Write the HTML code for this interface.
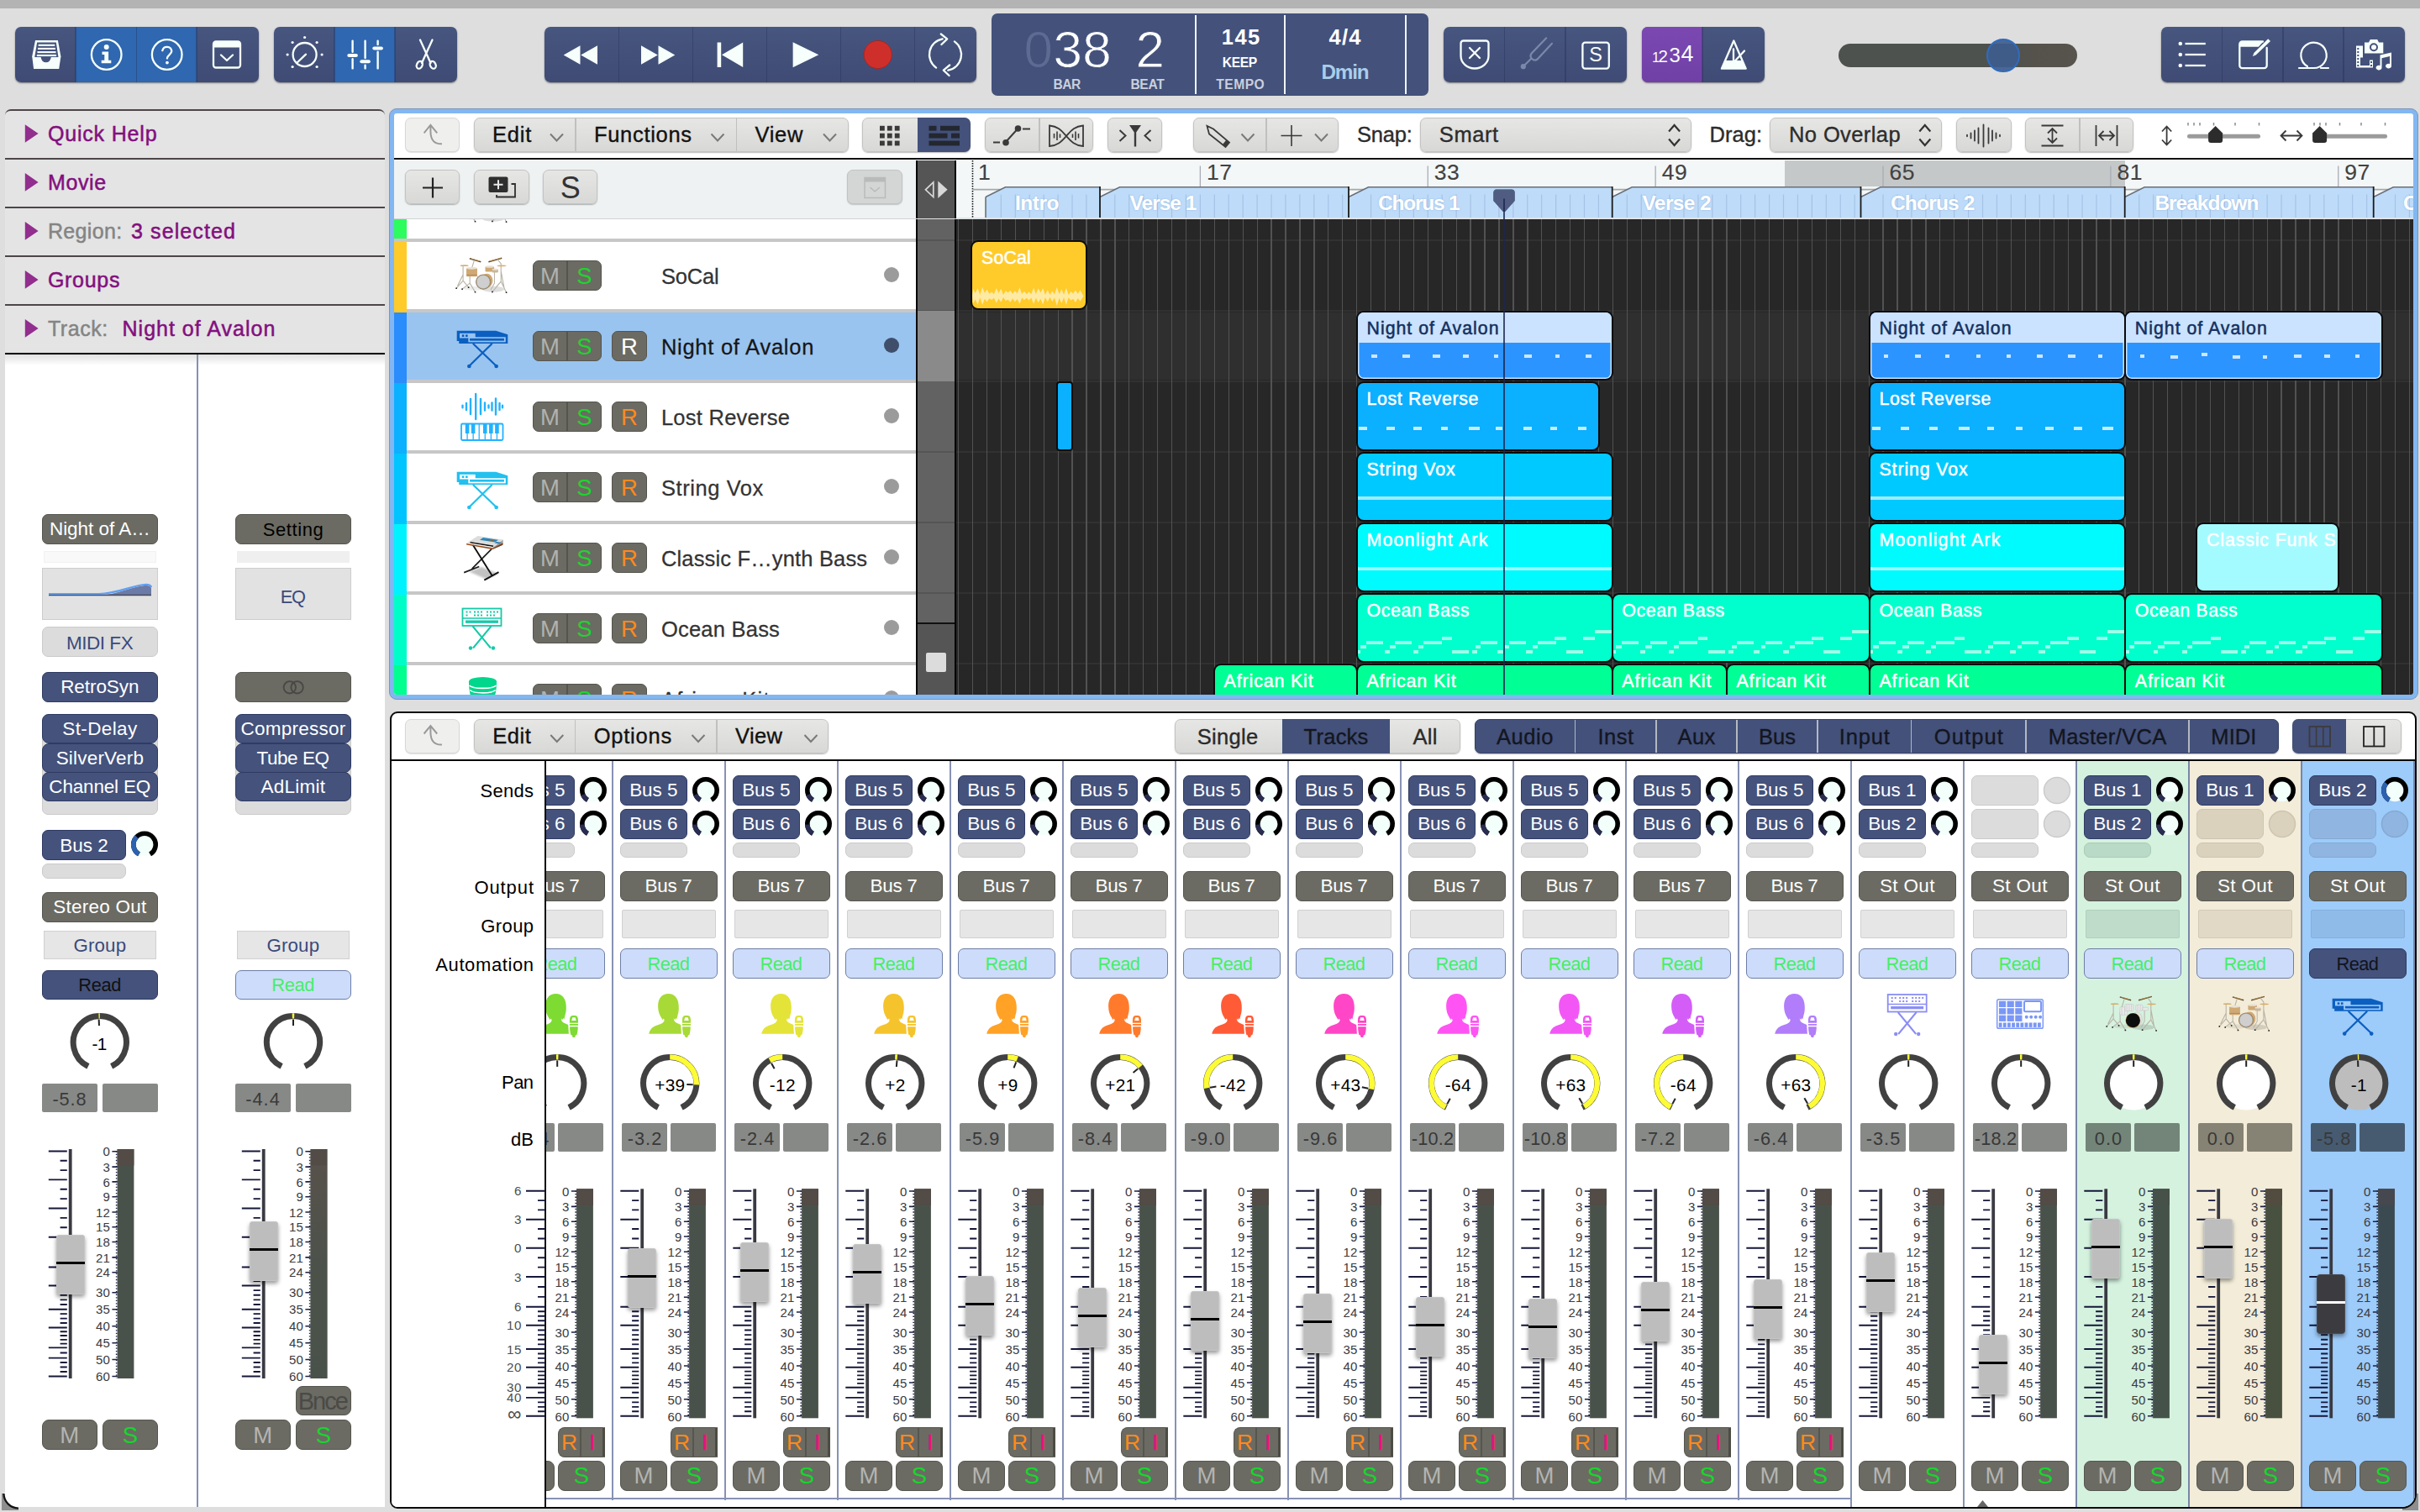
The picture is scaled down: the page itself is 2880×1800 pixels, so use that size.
<!DOCTYPE html><html><head><meta charset="utf-8"><title>Logic</title><style>html,body{margin:0;padding:0}body{width:2880px;height:1800px;overflow:hidden;background:#dedede;position:relative;font-family:"Liberation Sans",sans-serif}
div{position:absolute;box-sizing:border-box}
.nv{background:#44527c;border:1.5px solid #303b63;border-radius:7px}
.ol{background:#6b6b63;border:1.5px solid #565650;border-radius:7px}
.sl{background:#dcdcdc;border:1.5px solid #cbcbcb;border-radius:7px}
.gp{background:#e6e6e6;border:1.5px solid #d0d0d0}
.rd{background:#cddcfa;border:1.5px solid #6f7ea6;border-radius:7px}
.db{background:#878987;border-radius:2px}
.cap{background:#bdbdbd;border:1px solid #c6c6c6;border-radius:3px;box-shadow:0 3px 5px rgba(0,0,0,.4)}
.capd{background:#3c3c40;border:1px solid #4a4a50;border-radius:4px;box-shadow:0 3px 5px rgba(0,0,0,.4)}
</style></head><body><div style="left:0px;top:0px;width:2880px;height:10px;background:#b3b3b3;"></div><div style="left:18px;top:32px;width:290px;height:66px;background:linear-gradient(#47567f,#3f4b74);border-radius:7px;overflow:hidden;box-shadow:0 1px 2px rgba(0,0,0,.45);"><div style="left:72px;top:0px;width:72.5px;height:66px;background:#2f67b0;"></div><div style="left:144.5px;top:0px;width:71.5px;height:66px;background:#2f67b0;"></div><div style="left:71.2px;top:0px;width:1.6px;height:66px;background:rgba(35,45,85,.38);"></div><div style="left:143.7px;top:0px;width:1.6px;height:66px;background:rgba(35,45,85,.38);"></div><div style="left:215.2px;top:0px;width:1.6px;height:66px;background:rgba(35,45,85,.38);"></div></div><div style="left:326px;top:32px;width:218px;height:66px;background:linear-gradient(#47567f,#3f4b74);border-radius:7px;overflow:hidden;box-shadow:0 1px 2px rgba(0,0,0,.45);"><div style="left:72px;top:0px;width:72px;height:66px;background:#2f67b0;"></div><div style="left:71.2px;top:0px;width:1.6px;height:66px;background:rgba(35,45,85,.38);"></div><div style="left:143.2px;top:0px;width:1.6px;height:66px;background:rgba(35,45,85,.38);"></div></div><div style="left:648px;top:32px;width:514px;height:66px;background:linear-gradient(#47567f,#3f4b74);border-radius:7px;overflow:hidden;box-shadow:0 1px 2px rgba(0,0,0,.45);"><div style="left:87.7px;top:0px;width:1.6px;height:66px;background:rgba(35,45,85,.38);"></div><div style="left:175.7px;top:0px;width:1.6px;height:66px;background:rgba(35,45,85,.38);"></div><div style="left:263.7px;top:0px;width:1.6px;height:66px;background:rgba(35,45,85,.38);"></div><div style="left:351.7px;top:0px;width:1.6px;height:66px;background:rgba(35,45,85,.38);"></div><div style="left:439.7px;top:0px;width:1.6px;height:66px;background:rgba(35,45,85,.38);"></div></div><div style="left:1718px;top:32px;width:218px;height:66px;background:linear-gradient(#47567f,#3f4b74);border-radius:7px;overflow:hidden;box-shadow:0 1px 2px rgba(0,0,0,.45);"><div style="left:71.9px;top:0px;width:1.6px;height:66px;background:rgba(35,45,85,.38);"></div><div style="left:144px;top:0px;width:1.6px;height:66px;background:rgba(35,45,85,.38);"></div></div><div style="left:1954px;top:32px;width:146px;height:66px;background:linear-gradient(#47567f,#3f4b74);border-radius:7px;overflow:hidden;box-shadow:0 1px 2px rgba(0,0,0,.45);"><div style="left:0px;top:0px;width:72px;height:66px;background:linear-gradient(#7b48b2,#7040a6);"></div><div style="left:71.2px;top:0px;width:1.6px;height:66px;background:rgba(35,45,85,.38);"></div></div><div style="left:2572px;top:32px;width:290px;height:66px;background:linear-gradient(#47567f,#3f4b74);border-radius:7px;overflow:hidden;box-shadow:0 1px 2px rgba(0,0,0,.45);"><div style="left:71.8px;top:0px;width:1.6px;height:66px;background:rgba(35,45,85,.38);"></div><div style="left:144.2px;top:0px;width:1.6px;height:66px;background:rgba(35,45,85,.38);"></div><div style="left:216px;top:0px;width:1.6px;height:66px;background:rgba(35,45,85,.38);"></div></div><div style="left:1180px;top:16px;width:520px;height:98px;background:#43517b;border-radius:7px;"></div><div style="left:1422px;top:18px;width:2px;height:94px;background:#f0f4fa;"></div><div style="left:1527.7px;top:18px;width:2px;height:94px;background:#f0f4fa;"></div><div style="left:1671.8px;top:18px;width:2px;height:94px;background:#f0f4fa;"></div><div style="left:1218.5px;top:28.12px;font-size:62px;line-height:62px;color:#5d6a92;letter-spacing:-2.48px;white-space:nowrap;-webkit-text-stroke:.9px #43517b;">0</div><div style="left:1253.5px;top:28.12px;font-size:62px;line-height:62px;color:#fff;letter-spacing:0.27px;white-space:nowrap;-webkit-text-stroke:.9px #43517b;">38</div><div style="left:1351.5px;top:28.12px;font-size:62px;line-height:62px;color:#fff;letter-spacing:-2.98px;white-space:nowrap;-webkit-text-stroke:.9px #43517b;">2</div><div style="left:1253.4px;top:92.79px;font-size:15.6px;line-height:15.6px;color:#c9cfdd;letter-spacing:-0.43px;white-space:nowrap;font-weight:bold;">BAR</div><div style="left:1345.4px;top:92.79px;font-size:15.6px;line-height:15.6px;color:#c9cfdd;letter-spacing:-0.33px;white-space:nowrap;font-weight:bold;">BEAT</div><div style="left:1453.74px;top:31.71px;font-size:25.5px;line-height:25.5px;color:#fff;letter-spacing:1.48px;white-space:nowrap;font-weight:bold;">145</div><div style="left:1454.81px;top:66.79px;font-size:15.6px;line-height:15.6px;color:#fff;letter-spacing:-0.37px;white-space:nowrap;font-weight:bold;">KEEP</div><div style="left:1447.25px;top:92.79px;font-size:15.6px;line-height:15.6px;color:#c9cfdd;letter-spacing:0.51px;white-space:nowrap;font-weight:bold;">TEMPO</div><div style="left:1581.59px;top:31.71px;font-size:25.5px;line-height:25.5px;color:#fff;letter-spacing:1.18px;white-space:nowrap;font-weight:bold;">4/4</div><div style="left:1572.41px;top:73.63px;font-size:24.3px;line-height:24.3px;color:#a9cdea;letter-spacing:-1.19px;white-space:nowrap;font-weight:bold;">Dmin</div><div style="left:2188px;top:52px;width:284px;height:28px;background:linear-gradient(90deg,#4e524e 0,#4e524e 68%,#55524c 82%,#57534d 100%);border-radius:14px;"></div><div style="left:2363.5px;top:46px;width:40px;height:40px;background:rgba(62,92,140,.92);border:2px solid #2f6cc0;border-radius:20px;"></div><svg style="position:absolute;left:0px;top:0px;" width="2880" height="120" viewBox="0 0 2880 120"><path d="M42 48.100H68.900L72.400 67.300L70.200 82H40.100L38.200 67.300Z" fill="#f6fffb"/><path d="M44.100 50.400H66.800L69.500 68.300H41.200Z" fill="#44527c"/><path d="M45.6 53.8H65.3" stroke="#f6fffb" stroke-width="2.100"/><path d="M45 57.9H65.9" stroke="#f6fffb" stroke-width="2.100"/><path d="M44.4 62.1H66.5" stroke="#f6fffb" stroke-width="2.100"/><path d="M43.8 66H67.1" stroke="#f6fffb" stroke-width="2.100"/><path d="M40 68.300H70.500L69 80H41.500Z" fill="#f6fffb"/><path d="M48.700 68H60.700A6 6.300 0 0 1 48.700 68z" fill="#44527c"/><circle cx="126.7" cy="65" r="17.8" fill="none" stroke="#f6fffb" stroke-width="2.3" stroke-linecap="round" stroke-linejoin="round"/><circle cx="126.7" cy="56" r="3" fill="#f6fffb"/><path d="M121.5 61.5h7.6v10.3h3.2v3.4h-11.6v-3.4h3.6v-6.9h-2.8z" fill="#f6fffb"/><circle cx="198.7" cy="65" r="17.8" fill="none" stroke="#f6fffb" stroke-width="2.3" stroke-linecap="round" stroke-linejoin="round"/><path d="M193.3 60.2a5.6 5.6 0 0 1 11 .6c0 4.2-5.4 4.3-5.4 8.8" fill="none" stroke="#f6fffb" stroke-width="2.3" stroke-linecap="round" stroke-linejoin="round"/><circle cx="198.9" cy="74.6" r="1.9" fill="#f6fffb"/><rect x="254" y="49.5" width="32" height="31" rx="3" fill="none" stroke="#f6fffb" stroke-width="2.3" stroke-linecap="round" stroke-linejoin="round"/><path d="M254 49.5h32v7h-32z" fill="#f6fffb"/><path d="M263 65.5l7 6.5 7-6.5" fill="none" stroke="#f6fffb" stroke-width="2.3" stroke-linecap="round" stroke-linejoin="round"/><circle cx="362.6" cy="65" r="14" fill="none" stroke="#f6fffb" stroke-width="2.3" stroke-linecap="round" stroke-linejoin="round"/><path d="M364 64.700l-10.300 9.800" fill="none" stroke="#f6fffb" stroke-width="2.3" stroke-linecap="round" stroke-linejoin="round"/><circle cx="348.1" cy="79.5" r="1.6" fill="#f6fffb"/><circle cx="342.1" cy="65" r="1.6" fill="#f6fffb"/><circle cx="348.1" cy="50.5" r="1.6" fill="#f6fffb"/><circle cx="362.6" cy="44.5" r="1.6" fill="#f6fffb"/><circle cx="377.1" cy="50.5" r="1.6" fill="#f6fffb"/><circle cx="383.1" cy="65" r="1.6" fill="#f6fffb"/><circle cx="377.1" cy="79.5" r="1.6" fill="#f6fffb"/><path d="M419.6 48.6v32.8" stroke="#2f67b0" stroke-width="2.4"/><path d="M419.6 48.6V61.7 M419.6 70.3V81.4" stroke="#f6fffb" stroke-width="2.4" stroke-linecap="round"/><path d="M415.3 66h8.6" stroke="#f6fffb" stroke-width="4" stroke-linecap="round"/><path d="M434.6 48.6v32.8" stroke="#2f67b0" stroke-width="2.4"/><path d="M434.6 48.6V69 M434.6 77.6V81.4" stroke="#f6fffb" stroke-width="2.4" stroke-linecap="round"/><path d="M430.3 73.3h8.6" stroke="#f6fffb" stroke-width="4" stroke-linecap="round"/><path d="M449.6 48.6v32.8" stroke="#2f67b0" stroke-width="2.4"/><path d="M449.6 48.6V53.1 M449.6 61.7V81.4" stroke="#f6fffb" stroke-width="2.4" stroke-linecap="round"/><path d="M445.3 57.4h8.6" stroke="#f6fffb" stroke-width="4" stroke-linecap="round"/><path d="M500 47.5l12.5 27.5M514.5 47.5L502 75" fill="none" stroke="#f6fffb" stroke-width="2.3" stroke-linecap="round" stroke-linejoin="round"/><ellipse cx="499.3" cy="77.3" rx="3.3" ry="4.6" transform="rotate(25 499.3 77.3)" fill="none" stroke="#f6fffb" stroke-width="2.3" stroke-linecap="round" stroke-linejoin="round"/><ellipse cx="515.2" cy="77.3" rx="3.3" ry="4.6" transform="rotate(-25 515.2 77.3)" fill="none" stroke="#f6fffb" stroke-width="2.3" stroke-linecap="round" stroke-linejoin="round"/><path d="M690.5 54.2v22.6L670.7 65.5zM711 54.2v22.6L691.2 65.5z" fill="#f6fffb"/><path d="M763 54.2v22.6l19.8-11.3zM783.5 54.2v22.6l19.8-11.3z" fill="#f6fffb"/><path d="M853.6 50.4h4.6v29.6h-4.6zM884.2 50.4v29.6L859 65.2z" fill="#f6fffb"/><path d="M943.6 50.2v30L974.3 65.2z" fill="#f6fffb"/><circle cx="1044.7" cy="65" r="16.6" fill="#cf2f2b" stroke="#a82622" stroke-width="1"/><path d="M1114.100 80.600A19 19 0 0 1 1121.700 46.300M1135.900 49.400A19 19 0 0 1 1128.300 83.700" fill="none" stroke="#f6fffb" stroke-width="2.3" stroke-linecap="round" stroke-linejoin="round"/><path d="M1119.800 40.500l7.400 5.900-6.800 6.600M1130.200 77.500l-7.400 6.100 6.800 6.400" fill="none" stroke="#f6fffb" stroke-width="2.3" stroke-linecap="round" stroke-linejoin="round"/><path d="M1738.5 51.5a3 3 0 0 1 3-3h27a3 3 0 0 1 3 3v15a16.5 15 0 0 1-33 0z" fill="none" stroke="#f6fffb" stroke-width="2.3" stroke-linecap="round" stroke-linejoin="round"/><path d="M1749 57l12 12M1761 57l-12 12" fill="none" stroke="#f6fffb" stroke-width="2.3" stroke-linecap="round" stroke-linejoin="round"/><path d="M1813.5 78.5l8-8M1840.2 45.3l-17.5 18.2a5 5 0 0 0 7 7l17.3-18.7" fill="none" stroke="#7b88ab" stroke-width="2.2" stroke-linecap="round"/><circle cx="1812.8" cy="79.2" r="3.1" fill="#7b88ab"/><rect x="1883.4" y="50.6" width="31.4" height="31" rx="3" fill="none" stroke="#f6fffb" stroke-width="2.3" stroke-linecap="round" stroke-linejoin="round"/><path d="M2063.3 48.5l-14.4 33.2h28.8z" fill="none" stroke="#f6fffb" stroke-width="2.3" stroke-linecap="round" stroke-linejoin="round"/><path d="M2053.5 72h19.5l4.7 9.7h-28.8z" fill="#f6fffb"/><path d="M2063 58.5v13M2076 60.5l-12.5 13.5" fill="none" stroke="#f6fffb" stroke-width="2.3" stroke-linecap="round" stroke-linejoin="round"/><circle cx="2594.8" cy="52" r="2.3" fill="#f6fffb"/><path d="M2600.5 52h24.3" stroke="#f6fffb" stroke-width="2.3"/><circle cx="2594.8" cy="65" r="2.3" fill="#f6fffb"/><path d="M2600.5 65h24.3" stroke="#f6fffb" stroke-width="2.3"/><circle cx="2594.8" cy="78" r="2.3" fill="#f6fffb"/><path d="M2600.5 78h24.3" stroke="#f6fffb" stroke-width="2.3"/><path d="M2693 49.5h-24.5a3.2 3.2 0 0 0-3.2 3.2v25.2a3.2 3.2 0 0 0 3.2 3.2h26a3.2 3.2 0 0 0 3.2-3.2V57" fill="none" stroke="#f6fffb" stroke-width="2.3" stroke-linecap="round" stroke-linejoin="round"/><path d="M2665.3 55.7v-3.5a3 3 0 0 1 3-3h25.5l-6 6.5z" fill="#f6fffb"/><path d="M2699.2 46.3l2.8 2.8-17.3 16.3-3.8 1.6 1.5-3.9z" fill="#f6fffb"/><path d="M2736 81h17.5a15.2 15.2 0 1 0-7.5-2 M2762 81h9" fill="none" stroke="#f6fffb"  stroke-linecap="round" stroke-linejoin="round" stroke-width="2.2"/><path d="M2804 54.5h8v17h12v9h-20z" fill="#f6fffb"/><rect x="2805.3" y="57" width="2" height="2" fill="#43517b"/><rect x="2805.3" y="61" width="2" height="2" fill="#43517b"/><rect x="2805.3" y="65" width="2" height="2" fill="#43517b"/><rect x="2805.3" y="69" width="2" height="2" fill="#43517b"/><rect x="2805.3" y="73" width="2" height="2" fill="#43517b"/><rect x="2805.3" y="77" width="2" height="2" fill="#43517b"/><rect x="2821" y="73" width="2" height="2" fill="#43517b"/><rect x="2821" y="77" width="2" height="2" fill="#43517b"/><rect x="2809" y="68.5" width="11" height="9.5" fill="#43517b"/><path d="M2814 50.5h5l1.8-3.5h8.4l1.8 3.5h5.3v13h-22.3z" fill="#f6fffb"/><circle cx="2825" cy="56.3" r="4" fill="none" stroke="#43517b" stroke-width="2"/><path d="M2832.5 65.5l13.5-3v16.2a3.5 2.8 0 1 1-2-2.6v-9l-9.500 2.1v11.500a3.5 2.8 0 1 1-2-2.600z" fill="#f6fffb"/></svg><div style="left:1891.36px;top:53.51px;font-size:23.5px;line-height:23.5px;color:#f6fffb;letter-spacing:0px;white-space:nowrap;">S</div><div style="left:1966px;top:60.03px;font-size:16.5px;line-height:16.5px;color:#f6fffb;letter-spacing:0px;white-space:nowrap;">1</div><div style="left:1973.5px;top:56.65px;font-size:20.5px;line-height:20.5px;color:#f6fffb;letter-spacing:0px;white-space:nowrap;">2</div><div style="left:1986.5px;top:53.68px;font-size:24px;line-height:24px;color:#f6fffb;letter-spacing:0px;white-space:nowrap;">3</div><div style="left:2000.5px;top:51.14px;font-size:27px;line-height:27px;color:#f6fffb;letter-spacing:0px;white-space:nowrap;">4</div><div style="left:6px;top:130px;width:452px;height:292px;background:#e4e4e4;border-top:2px solid #4c4648;border-radius:7px 7px 0 0;"></div><div style="left:6px;top:187.8px;width:452px;height:2px;background:#4c4648;"></div><div style="left:6px;top:245.7px;width:452px;height:2px;background:#4c4648;"></div><div style="left:6px;top:303.6px;width:452px;height:2px;background:#4c4648;"></div><div style="left:6px;top:361.8px;width:452px;height:2px;background:#4c4648;"></div><div style="left:6px;top:421px;width:452px;height:1373px;background:#fff;"></div><svg style="position:absolute;left:0px;top:1770px;" width="30" height="30" viewBox="0 1770 30 30"><rect x="2" y="1778" width="20" height="20" fill="#8e8e8e"/><path d="M4.500 1777A18 18 0 0 0 22.500 1795.500V1777Z" fill="#fff"/><path d="M4.500 1778A17.500 17.500 0 0 0 22 1795.500" fill="none" stroke="#111" stroke-width="2.200"/></svg><div style="left:6px;top:421px;width:452px;height:14px;background:linear-gradient(rgba(0,0,0,.13),rgba(0,0,0,0));"></div><div style="left:6px;top:419.5px;width:452px;height:2.6px;background:#000;"></div><div style="left:234.4px;top:422px;width:1.6px;height:1372px;background:#8591b3;"></div><div style="left:56.9px;top:147.14px;font-size:25px;line-height:25px;color:#830f7e;letter-spacing:0.82px;white-space:nowrap;-webkit-text-stroke:0.5px;">Quick Help</div><div style="left:56.9px;top:205.04px;font-size:25px;line-height:25px;color:#830f7e;letter-spacing:0.66px;white-space:nowrap;-webkit-text-stroke:0.5px;">Movie</div><div style="left:56.9px;top:263.04px;font-size:25px;line-height:25px;color:#848484;letter-spacing:0.35px;white-space:nowrap;-webkit-text-stroke:0.5px;">Region:</div><div style="left:156px;top:263.04px;font-size:25px;line-height:25px;color:#830f7e;letter-spacing:1.1px;white-space:nowrap;-webkit-text-stroke:0.5px;">3 selected</div><div style="left:56.9px;top:321.04px;font-size:25px;line-height:25px;color:#830f7e;letter-spacing:0.72px;white-space:nowrap;-webkit-text-stroke:0.5px;">Groups</div><div style="left:56.9px;top:379.04px;font-size:25px;line-height:25px;color:#848484;letter-spacing:0.58px;white-space:nowrap;-webkit-text-stroke:0.5px;">Track:</div><div style="left:145.5px;top:379.04px;font-size:25px;line-height:25px;color:#830f7e;letter-spacing:1.01px;white-space:nowrap;-webkit-text-stroke:0.5px;">Night of Avalon</div><svg style="position:absolute;left:0px;top:130px;" width="60" height="300" viewBox="0 130 60 300"><path d="M29.8 148.2v21.6l15.8-10.8z" fill="#922e8e"/><path d="M29.8 206.1v21.6l15.8-10.8z" fill="#922e8e"/><path d="M29.8 264.1v21.6l15.8-10.8z" fill="#922e8e"/><path d="M29.8 322.1v21.6l15.8-10.8z" fill="#922e8e"/><path d="M29.8 380.1v21.6l15.8-10.8z" fill="#922e8e"/></svg><div class="ol" style="left:50px;top:612px;width:137.6px;height:36px;"></div><div style="left:58.93px;top:619.45px;font-size:22.5px;line-height:22.5px;color:#fff;letter-spacing:-0.03px;white-space:nowrap;">Night of A…</div><div class="ol" style="left:280px;top:612px;width:137.6px;height:36px;"></div><div style="left:312.75px;top:619.7px;font-size:22px;line-height:22px;color:#000;letter-spacing:0.6px;white-space:nowrap;">Setting</div><div style="left:52px;top:656px;width:133.6px;height:14px;background:#f9f9f9;border:1px solid #f1f1f1;"></div><div style="left:282px;top:656px;width:133.6px;height:14px;background:#efefef;"></div><div style="left:50px;top:676.3px;width:137.6px;height:61.4px;background:#e2e2e2;border:1.5px solid #cdcdcd;"></div><div style="left:280px;top:676.3px;width:137.6px;height:61.4px;background:#e2e2e2;border:1.5px solid #cdcdcd;"></div><svg style="position:absolute;left:50px;top:676px;" width="140" height="62" viewBox="50 676 140 62"><path d="M58 708.5h60c20 0 38-10 54-11.500c5-.4 8 1 8 3.500v8z" fill="#6b7aa6"/><path d="M58 708.500h122" stroke="#4a4a55" stroke-width="1.6"/><path d="M58 707h60c20 0 38-9.500 54-11c5-.4 8 1 8 3" fill="none" stroke="#5f9ff2" stroke-width="2.2"/></svg><div style="left:333.68px;top:700.05px;font-size:21.8px;line-height:21.8px;color:#3b4a7b;letter-spacing:-1.25px;white-space:nowrap;">EQ</div><div class="sl" style="left:50px;top:746.4px;width:137.6px;height:35.6px;"></div><div style="left:78.92px;top:754.95px;font-size:22.5px;line-height:22.5px;color:#3b4a7b;letter-spacing:-0.46px;white-space:nowrap;">MIDI FX</div><div class="nv" style="left:50px;top:800px;width:137.6px;height:36px;"></div><div style="left:72.16px;top:807.45px;font-size:22.5px;line-height:22.5px;color:#fff;letter-spacing:-0.07px;white-space:nowrap;">RetroSyn</div><div class="ol" style="left:280px;top:800px;width:137.6px;height:36px;"></div><svg style="position:absolute;left:335px;top:806px;" width="30" height="24" viewBox="0 0 30 24"><circle cx="9.800" cy="12.300" r="7.200" fill="none" stroke="#484845" stroke-width="1.900"/><circle cx="18.600" cy="12.300" r="7.200" fill="none" stroke="#484845" stroke-width="1.900"/></svg><div class="sl" style="left:50px;top:850px;width:137.6px;height:119.8px;"></div><div class="sl" style="left:280px;top:850px;width:137.6px;height:119.8px;"></div><div class="nv" style="left:50px;top:850px;width:137.6px;height:34.6px;border-radius:8px;"></div><div style="left:74.34px;top:856.75px;font-size:22.5px;line-height:22.5px;color:#fff;letter-spacing:0.38px;white-space:nowrap;">St-Delay</div><div class="nv" style="left:280px;top:850px;width:137.6px;height:34.6px;border-radius:8px;"></div><div style="left:286.42px;top:856.75px;font-size:22.5px;line-height:22.5px;color:#fff;letter-spacing:0.25px;white-space:nowrap;">Compressor</div><div class="nv" style="left:50px;top:885px;width:137.6px;height:34.6px;border-radius:8px;"></div><div style="left:66.65px;top:891.75px;font-size:22.5px;line-height:22.5px;color:#fff;letter-spacing:0.2px;white-space:nowrap;">SilverVerb</div><div class="nv" style="left:280px;top:885px;width:137.6px;height:34.6px;border-radius:8px;"></div><div style="left:305.57px;top:891.75px;font-size:22.5px;line-height:22.5px;color:#fff;letter-spacing:-0.46px;white-space:nowrap;">Tube EQ</div><div class="nv" style="left:50px;top:919.4px;width:137.6px;height:34.6px;border-radius:8px;"></div><div style="left:58.36px;top:926.15px;font-size:22.5px;line-height:22.5px;color:#fff;letter-spacing:-0.19px;white-space:nowrap;">Channel EQ</div><div class="nv" style="left:280px;top:919.4px;width:137.6px;height:34.6px;border-radius:8px;"></div><div style="left:310.57px;top:926.15px;font-size:22.5px;line-height:22.5px;color:#fff;letter-spacing:0.24px;white-space:nowrap;">AdLimit</div><div class="nv" style="left:50px;top:988.4px;width:100px;height:35.7px;"></div><div style="left:71.25px;top:995.7px;font-size:22.5px;line-height:22.5px;color:#fff;letter-spacing:-0.01px;white-space:nowrap;">Bus 2</div><svg style="position:absolute;left:150px;top:985px;" width="44" height="44" viewBox="150 985 44 44"><circle cx="172" cy="1005.5" r="13.2" fill="#f2fffb"/><path d="M165.4 1016.93A13.2 13.2 0 1 1 178.6 1016.93" fill="none" stroke="#000" stroke-width="5.6"/><path d="M165.4 1016.93A13.2 13.2 0 0 1 162.67 996.17" fill="none" stroke="#2d62b0" stroke-width="5.6"/></svg><div class="sl" style="left:50px;top:1028.3px;width:100px;height:17.8px;"></div><div class="ol" style="left:50px;top:1062px;width:137.6px;height:35.8px;"></div><div style="left:63.23px;top:1069.35px;font-size:22.5px;line-height:22.5px;color:#fff;letter-spacing:0.26px;white-space:nowrap;">Stereo Out</div><div class="gp" style="left:52px;top:1108px;width:133.6px;height:34px;"></div><div style="left:87.52px;top:1114.55px;font-size:22.3px;line-height:22.3px;color:#3b4a7b;letter-spacing:0.14px;white-space:nowrap;">Group</div><div class="gp" style="left:282px;top:1108px;width:133.6px;height:34px;"></div><div style="left:317.52px;top:1114.55px;font-size:22.3px;line-height:22.3px;color:#3b4a7b;letter-spacing:0.14px;white-space:nowrap;">Group</div><div class="nv" style="left:50px;top:1154.5px;width:137.6px;height:35px;border-radius:7px;"></div><div style="left:93.35px;top:1161.79px;font-size:21.8px;line-height:21.8px;color:#111;letter-spacing:-0.4px;white-space:nowrap;">Read</div><div class="rd" style="left:280px;top:1154.5px;width:137.6px;height:35px;"></div><div style="left:323.35px;top:1161.79px;font-size:21.8px;line-height:21.8px;color:#46ee66;letter-spacing:-0.4px;white-space:nowrap;">Read</div><svg style="position:absolute;left:70px;top:1195px;" width="330" height="95" viewBox="70 1195 330 95"><path d="M104.95 1269.4A31.6 31.6 0 1 1 132.65 1269.4" fill="none" stroke="#414141" stroke-width="7"/><path d="M118.8 1209.4A31.6 31.6 0 0 0 117.49 1209.43" fill="none" stroke="#fdfb35" stroke-width="6.4"/><path d="M117.97 1220.92L117.66 1213.42" stroke="#222" stroke-width="2"/><path d="M335.15 1269.4A31.6 31.6 0 1 1 362.85 1269.4" fill="none" stroke="#414141" stroke-width="7"/><path d="M347.79 1209.42A31.6 31.6 0 0 1 350.21 1209.42" fill="none" stroke="#fdfb35" stroke-width="6.4"/><path d="M349 1220.9L349 1213.4" stroke="#222" stroke-width="2"/></svg><div style="left:109.58px;top:1232.59px;font-size:20.8px;line-height:20.8px;color:#000;letter-spacing:-0.65px;white-space:nowrap;">-1</div><div class="db" style="left:50px;top:1290px;width:65.6px;height:33.8px;"></div><div class="db" style="left:122px;top:1290px;width:65.6px;height:33.8px;"></div><div style="left:62.45px;top:1297.63px;font-size:21.7px;line-height:21.7px;color:#3a3a3a;letter-spacing:0.9px;white-space:nowrap;">-5.8</div><div class="db" style="left:280px;top:1290px;width:65.6px;height:33.8px;"></div><div class="db" style="left:352px;top:1290px;width:65.6px;height:33.8px;"></div><div style="left:292.15px;top:1297.63px;font-size:21.7px;line-height:21.7px;color:#3a3a3a;letter-spacing:1.1px;white-space:nowrap;">-4.4</div><svg style="position:absolute;left:40px;top:1360px;" width="400" height="290" viewBox="40 1360 400 290"><path d="M57.8 1370.5h22M71.6 1381.8h8.2M71.6 1393.1h8.2M57.8 1404.4h22M71.6 1415.77h8.2M71.6 1427.13h8.2M57.8 1438.5h22M71.6 1449.9h8.2M71.6 1461.3h8.2M57.8 1472.7h22M71.6 1484.63h8.2M71.6 1496.57h8.2M57.8 1508.5h22M71.6 1514h8.2M71.6 1519.5h8.2M71.6 1525h8.2M57.8 1530.5h22M71.6 1536.14h8.2M71.6 1541.78h8.2M71.6 1547.42h8.2M71.6 1553.06h8.2M57.8 1558.7h22M71.6 1564.15h8.2M71.6 1569.6h8.2M71.6 1575.05h8.2M57.8 1580.5h22M71.6 1585.28h8.2M71.6 1590.06h8.2M71.6 1594.84h8.2M71.6 1599.62h8.2M57.8 1604.4h22M71.6 1610.5h8.2M57.8 1616.6h22M71.6 1622.07h8.2M71.6 1627.55h8.2M71.6 1633.02h8.2M57.8 1638.5h22" stroke="#15173a" stroke-width="1.9"/><rect x="81.8" y="1368" width="3.8" height="273" fill="#3a3a42"/><path d="M133.4 1370.7h6.500M133.4 1389.1h6.500M133.4 1406.9h6.500M133.4 1424.7h6.500M133.4 1443h6.500M133.4 1460.7h6.500M133.4 1478.5h6.500M133.4 1496.9h6.500M133.4 1514.7h6.500M133.4 1538.7h6.500M133.4 1558.7h6.500M133.4 1578.7h6.500M133.4 1598.7h6.500M133.4 1618.5h6.500M133.4 1638.5h6.500" stroke="#1d2044" stroke-width="1.600"/><path d="M138.7 1370.2v270" stroke="#1d2044" stroke-width="1.700" stroke-dasharray="1.300 2.250"/><rect x="139.6" y="1368" width="19.800" height="273" fill="#49524a"/><rect x="139.6" y="1368" width="19.800" height="19.500" fill="#524b46"/><path d="M287.8 1370.5h22M301.6 1381.8h8.2M301.6 1393.1h8.2M287.8 1404.4h22M301.6 1415.77h8.2M301.6 1427.13h8.2M287.8 1438.5h22M301.6 1449.9h8.2M301.6 1461.3h8.2M287.8 1472.7h22M301.6 1484.63h8.2M301.6 1496.57h8.2M287.8 1508.5h22M301.6 1514h8.2M301.6 1519.5h8.2M301.6 1525h8.2M287.8 1530.5h22M301.6 1536.14h8.2M301.6 1541.78h8.2M301.6 1547.42h8.2M301.6 1553.06h8.2M287.8 1558.7h22M301.6 1564.15h8.2M301.6 1569.6h8.2M301.6 1575.05h8.2M287.8 1580.5h22M301.6 1585.28h8.2M301.6 1590.06h8.2M301.6 1594.84h8.2M301.6 1599.62h8.2M287.8 1604.4h22M301.6 1610.5h8.2M287.8 1616.6h22M301.6 1622.07h8.2M301.6 1627.55h8.2M301.6 1633.02h8.2M287.8 1638.5h22" stroke="#15173a" stroke-width="1.9"/><rect x="311.8" y="1368" width="3.8" height="273" fill="#3a3a42"/><path d="M363.4 1370.7h6.500M363.4 1389.1h6.500M363.4 1406.9h6.500M363.4 1424.7h6.500M363.4 1443h6.500M363.4 1460.7h6.500M363.4 1478.5h6.500M363.4 1496.9h6.500M363.4 1514.7h6.500M363.4 1538.7h6.500M363.4 1558.7h6.500M363.4 1578.7h6.500M363.4 1598.7h6.500M363.4 1618.5h6.500M363.4 1638.5h6.500" stroke="#1d2044" stroke-width="1.600"/><path d="M368.7 1370.2v270" stroke="#1d2044" stroke-width="1.700" stroke-dasharray="1.300 2.250"/><rect x="369.6" y="1368" width="19.800" height="273" fill="#49524a"/><rect x="369.6" y="1368" width="19.800" height="19.500" fill="#524b46"/><defs><linearGradient id="mg" x1="0" y1="0" x2="0" y2="1"><stop offset="0" stop-color="#57524b"/><stop offset=".45" stop-color="#4c524a"/><stop offset="1" stop-color="#49524a"/></linearGradient></defs><rect x="369.600" y="1387.500" width="19.800" height="253.500" fill="url(#mg)"/></svg><div style="left:122.46px;top:1363.4px;font-size:15px;line-height:15px;color:#3a3a3e;letter-spacing:0.2px;white-space:nowrap;">0</div><div style="left:122.46px;top:1381.8px;font-size:15px;line-height:15px;color:#3a3a3e;letter-spacing:0.2px;white-space:nowrap;">3</div><div style="left:122.46px;top:1399.6px;font-size:15px;line-height:15px;color:#3a3a3e;letter-spacing:0.2px;white-space:nowrap;">6</div><div style="left:122.46px;top:1417.4px;font-size:15px;line-height:15px;color:#3a3a3e;letter-spacing:0.2px;white-space:nowrap;">9</div><div style="left:113.91px;top:1435.7px;font-size:15px;line-height:15px;color:#3a3a3e;letter-spacing:0.2px;white-space:nowrap;">12</div><div style="left:113.91px;top:1453.4px;font-size:15px;line-height:15px;color:#3a3a3e;letter-spacing:0.2px;white-space:nowrap;">15</div><div style="left:113.91px;top:1471.2px;font-size:15px;line-height:15px;color:#3a3a3e;letter-spacing:0.2px;white-space:nowrap;">18</div><div style="left:113.91px;top:1489.6px;font-size:15px;line-height:15px;color:#3a3a3e;letter-spacing:0.2px;white-space:nowrap;">21</div><div style="left:113.91px;top:1507.4px;font-size:15px;line-height:15px;color:#3a3a3e;letter-spacing:0.2px;white-space:nowrap;">24</div><div style="left:113.91px;top:1531.4px;font-size:15px;line-height:15px;color:#3a3a3e;letter-spacing:0.2px;white-space:nowrap;">30</div><div style="left:113.91px;top:1551.4px;font-size:15px;line-height:15px;color:#3a3a3e;letter-spacing:0.2px;white-space:nowrap;">35</div><div style="left:113.91px;top:1571.4px;font-size:15px;line-height:15px;color:#3a3a3e;letter-spacing:0.2px;white-space:nowrap;">40</div><div style="left:113.91px;top:1591.4px;font-size:15px;line-height:15px;color:#3a3a3e;letter-spacing:0.2px;white-space:nowrap;">45</div><div style="left:113.91px;top:1611.2px;font-size:15px;line-height:15px;color:#3a3a3e;letter-spacing:0.2px;white-space:nowrap;">50</div><div style="left:113.91px;top:1631.2px;font-size:15px;line-height:15px;color:#3a3a3e;letter-spacing:0.2px;white-space:nowrap;">60</div><div style="left:352.46px;top:1363.4px;font-size:15px;line-height:15px;color:#3a3a3e;letter-spacing:0.2px;white-space:nowrap;">0</div><div style="left:352.46px;top:1381.8px;font-size:15px;line-height:15px;color:#3a3a3e;letter-spacing:0.2px;white-space:nowrap;">3</div><div style="left:352.46px;top:1399.6px;font-size:15px;line-height:15px;color:#3a3a3e;letter-spacing:0.2px;white-space:nowrap;">6</div><div style="left:352.46px;top:1417.4px;font-size:15px;line-height:15px;color:#3a3a3e;letter-spacing:0.2px;white-space:nowrap;">9</div><div style="left:343.91px;top:1435.7px;font-size:15px;line-height:15px;color:#3a3a3e;letter-spacing:0.2px;white-space:nowrap;">12</div><div style="left:343.91px;top:1453.4px;font-size:15px;line-height:15px;color:#3a3a3e;letter-spacing:0.2px;white-space:nowrap;">15</div><div style="left:343.91px;top:1471.2px;font-size:15px;line-height:15px;color:#3a3a3e;letter-spacing:0.2px;white-space:nowrap;">18</div><div style="left:343.91px;top:1489.6px;font-size:15px;line-height:15px;color:#3a3a3e;letter-spacing:0.2px;white-space:nowrap;">21</div><div style="left:343.91px;top:1507.4px;font-size:15px;line-height:15px;color:#3a3a3e;letter-spacing:0.2px;white-space:nowrap;">24</div><div style="left:343.91px;top:1531.4px;font-size:15px;line-height:15px;color:#3a3a3e;letter-spacing:0.2px;white-space:nowrap;">30</div><div style="left:343.91px;top:1551.4px;font-size:15px;line-height:15px;color:#3a3a3e;letter-spacing:0.2px;white-space:nowrap;">35</div><div style="left:343.91px;top:1571.4px;font-size:15px;line-height:15px;color:#3a3a3e;letter-spacing:0.2px;white-space:nowrap;">40</div><div style="left:343.91px;top:1591.4px;font-size:15px;line-height:15px;color:#3a3a3e;letter-spacing:0.2px;white-space:nowrap;">45</div><div style="left:343.91px;top:1611.2px;font-size:15px;line-height:15px;color:#3a3a3e;letter-spacing:0.2px;white-space:nowrap;">50</div><div style="left:343.91px;top:1631.2px;font-size:15px;line-height:15px;color:#3a3a3e;letter-spacing:0.2px;white-space:nowrap;">60</div><div class="cap" style="left:66.6px;top:1469.9px;width:34.4px;height:71px;"><div style="left:-1px;top:31.2px;width:34.4px;height:2.9px;background:#000;"></div></div><div class="cap" style="left:296.6px;top:1453.6px;width:34.4px;height:71px;"><div style="left:-1px;top:31.2px;width:34.4px;height:2.9px;background:#000;"></div></div><div class="ol" style="left:352px;top:1650px;width:65.6px;height:35px;border-radius:8px;"></div><div style="left:354.79px;top:1653.79px;font-size:29px;line-height:29px;color:#4a4a46;letter-spacing:-2.03px;white-space:nowrap;">Bnce</div><div class="ol" style="left:50px;top:1690.4px;width:65.6px;height:35.6px;border-radius:8px;"></div><div style="left:71.35px;top:1694.62px;font-size:27.5px;line-height:27.5px;color:#b4b4b2;letter-spacing:0.96px;white-space:nowrap;">M</div><div class="ol" style="left:122.2px;top:1690.4px;width:65.6px;height:35.6px;border-radius:8px;"></div><div style="left:145.83px;top:1694.62px;font-size:27.5px;line-height:27.5px;color:#16d62c;letter-spacing:0.96px;white-space:nowrap;">S</div><div class="ol" style="left:280px;top:1690.4px;width:65.6px;height:35.6px;border-radius:8px;"></div><div style="left:301.35px;top:1694.62px;font-size:27.5px;line-height:27.5px;color:#b4b4b2;letter-spacing:0.96px;white-space:nowrap;">M</div><div class="ol" style="left:352px;top:1690.4px;width:65.6px;height:35.6px;border-radius:8px;"></div><div style="left:375.63px;top:1694.62px;font-size:27.5px;line-height:27.5px;color:#16d62c;letter-spacing:0.96px;white-space:nowrap;">S</div><div style="left:463px;top:128.5px;width:2415px;height:704px;background:#82b7f2;border:1.5px solid #7d96b8;border-radius:9px;"></div><div style="left:469px;top:134.500px;width:2403px;height:692px;overflow:hidden;border-radius:3px"><div style="left:-469px;top:-134.500px;width:2880px;height:1800px"><div style="left:469px;top:134.5px;width:2403px;height:692px;background:#fff;overflow:hidden;"></div><div style="left:469px;top:188.2px;width:2403px;height:1.9px;background:#111;"></div><div style="left:469px;top:190.5px;width:621px;height:70px;background:#eff2f3;"></div><div style="left:1090px;top:190.5px;width:48px;height:70px;background:#555;border-left:2px solid #050505;border-right:2px solid #050505;"></div><div style="left:1138px;top:190.5px;width:1734px;height:70px;background:#f4f7f7;"></div><div style="left:482px;top:140.1px;width:65.4px;height:41.4px;background:#efefed;border:1.5px solid #d8d8d6;border-radius:7px;box-shadow:0 1px 1px rgba(0,0,0,.12);"></div><div style="left:564.3px;top:140.1px;width:445.3px;height:41.4px;background:linear-gradient(#e6e6e4,#d8d8d6);border:1.5px solid #c3c3c1;border-radius:7px;box-shadow:0 1px 1.5px rgba(0,0,0,.28);"></div><div style="left:684px;top:141.1px;width:1.6px;height:39.4px;background:#c0c0be;"></div><div style="left:875.8px;top:141.1px;width:1.6px;height:39.4px;background:#c0c0be;"></div><div style="left:1026.2px;top:140.1px;width:129px;height:41.4px;background:linear-gradient(#e6e6e4,#d8d8d6);border:1.5px solid #c3c3c1;border-radius:7px;box-shadow:0 1px 1.5px rgba(0,0,0,.28);overflow:hidden;"></div><div style="left:1092px;top:140.1px;width:63.2px;height:41.4px;background:#43517b;border-radius:0 7px 7px 0;"></div><div style="left:1172.3px;top:140.1px;width:129.2px;height:41.4px;background:linear-gradient(#e6e6e4,#d8d8d6);border:1.5px solid #c3c3c1;border-radius:7px;box-shadow:0 1px 1.5px rgba(0,0,0,.28);"></div><div style="left:1236px;top:141.1px;width:1.6px;height:39.4px;background:#c0c0be;"></div><div style="left:1318px;top:140.1px;width:65.4px;height:41.4px;background:linear-gradient(#e6e6e4,#d8d8d6);border:1.5px solid #c3c3c1;border-radius:7px;box-shadow:0 1px 1.5px rgba(0,0,0,.28);"></div><div style="left:1420.3px;top:140.1px;width:173.2px;height:41.4px;background:linear-gradient(#e6e6e4,#d8d8d6);border:1.5px solid #c3c3c1;border-radius:7px;box-shadow:0 1px 1.5px rgba(0,0,0,.28);"></div><div style="left:1506px;top:141.1px;width:1.6px;height:39.4px;background:#c0c0be;"></div><div style="left:1690px;top:140.1px;width:323px;height:41.4px;background:linear-gradient(#e6e6e4,#d8d8d6);border:1.5px solid #c3c3c1;border-radius:7px;box-shadow:0 1px 1.5px rgba(0,0,0,.28);"></div><div style="left:2106.4px;top:140.1px;width:205px;height:41.4px;background:linear-gradient(#e6e6e4,#d8d8d6);border:1.5px solid #c3c3c1;border-radius:7px;box-shadow:0 1px 1.5px rgba(0,0,0,.28);"></div><div style="left:2328px;top:140.1px;width:65.6px;height:41.4px;background:linear-gradient(#e6e6e4,#d8d8d6);border:1.5px solid #c3c3c1;border-radius:7px;box-shadow:0 1px 1.5px rgba(0,0,0,.28);"></div><div style="left:2410.3px;top:140.1px;width:128.7px;height:41.4px;background:linear-gradient(#e6e6e4,#d8d8d6);border:1.5px solid #c3c3c1;border-radius:7px;box-shadow:0 1px 1.5px rgba(0,0,0,.28);"></div><div style="left:2474px;top:141.1px;width:1.6px;height:39.4px;background:#c0c0be;"></div><div style="left:586px;top:148.11px;font-size:25.5px;line-height:25.5px;color:#111;letter-spacing:0.76px;white-space:nowrap;-webkit-text-stroke:0.36px;">Edit</div><div style="left:707px;top:148.11px;font-size:25.5px;line-height:25.5px;color:#111;letter-spacing:0.68px;white-space:nowrap;-webkit-text-stroke:0.36px;">Functions</div><div style="left:898.5px;top:148.11px;font-size:25.5px;line-height:25.5px;color:#111;letter-spacing:0.67px;white-space:nowrap;-webkit-text-stroke:0.36px;">View</div><div style="left:1615px;top:148.11px;font-size:25.5px;line-height:25.5px;color:#2c2c2c;letter-spacing:-0.19px;white-space:nowrap;-webkit-text-stroke:0.36px;">Snap:</div><div style="left:1712.8px;top:148.11px;font-size:25.5px;line-height:25.5px;color:#2c2c2c;letter-spacing:0.6px;white-space:nowrap;-webkit-text-stroke:0.36px;">Smart</div><div style="left:2034.5px;top:148.11px;font-size:25.5px;line-height:25.5px;color:#2c2c2c;letter-spacing:0.03px;white-space:nowrap;-webkit-text-stroke:0.36px;">Drag:</div><div style="left:2129px;top:148.11px;font-size:25.5px;line-height:25.5px;color:#2c2c2c;letter-spacing:0.4px;white-space:nowrap;-webkit-text-stroke:0.36px;">No Overlap</div><div style="left:482px;top:202.3px;width:65.4px;height:41.2px;background:linear-gradient(#e6e6e4,#d8d8d6);border:1.5px solid #c3c3c1;border-radius:7px;box-shadow:0 1px 1.5px rgba(0,0,0,.28);"></div><div style="left:564.3px;top:202.3px;width:65.4px;height:41.2px;background:linear-gradient(#e6e6e4,#d8d8d6);border:1.5px solid #c3c3c1;border-radius:7px;box-shadow:0 1px 1.5px rgba(0,0,0,.28);"></div><div style="left:646px;top:202.3px;width:65.4px;height:41.2px;background:linear-gradient(#e6e6e4,#d8d8d6);border:1.5px solid #c3c3c1;border-radius:7px;box-shadow:0 1px 1.5px rgba(0,0,0,.28);"></div><div style="left:1008px;top:202.3px;width:66px;height:41.2px;background:#d4d6d6;border:1.5px solid #c2c4c4;border-radius:7px;box-shadow:0 1px 1.5px rgba(0,0,0,.2);"></div><div style="left:666.69px;top:205.53px;font-size:36px;line-height:36px;color:#333;letter-spacing:0px;white-space:nowrap;">S</div><div style="left:469px;top:260.5px;width:14.5px;height:24px;background:#2dfc5e;"></div><div style="left:469px;top:260.2px;width:621px;height:1.2px;background:#d0d3d3;"></div><div style="left:469px;top:284px;width:621px;height:4px;background:#c7c7c7;"></div><div style="left:1090px;top:260.5px;width:48px;height:566px;background:#626262;border-left:2px solid #050505;border-right:2px solid #050505;"></div><div style="left:1092px;top:284.5px;width:44px;height:2px;background:#555;"></div><div style="left:1090px;top:259.5px;width:48px;height:1.6px;background:#e6e6e6;"></div><div style="left:1138px;top:260.5px;width:1734px;height:566px;background:#272727;"></div><div style="left:1138px;top:455.8px;width:1734px;height:0px;"></div><div style="left:1138px;top:372px;width:1734px;height:80px;background:#2f2f2f;"></div><div style="left:1138px;top:285px;width:1734px;height:1.6px;background:#313131;"></div><div style="left:1138px;top:369px;width:1734px;height:1.6px;background:#313131;"></div><div style="left:1138px;top:453px;width:1734px;height:1.6px;background:#313131;"></div><div style="left:1138px;top:537px;width:1734px;height:1.6px;background:#313131;"></div><div style="left:1138px;top:621px;width:1734px;height:1.6px;background:#313131;"></div><div style="left:1138px;top:705px;width:1734px;height:1.6px;background:#313131;"></div><div style="left:1138px;top:789px;width:1734px;height:1.6px;background:#313131;"></div><div style="left:1139.97px;top:260.5px;width:1750.93px;height:566px;background:repeating-linear-gradient(90deg,#525252 0,#525252 1.3px,transparent 1.3px,transparent 16.93px);"></div><div style="left:469px;top:288px;width:14.5px;height:84px;background:#ffcb2b;"></div><div style="left:483.5px;top:288px;width:606.5px;height:80px;background:#fff;"></div><div style="left:483.5px;top:368px;width:606.5px;height:4px;background:#c7c7c7;"></div><div style="left:1092px;top:369px;width:44px;height:2px;background:#555;"></div><div style="left:634px;top:310px;width:82px;height:36px;background:#6b6b63;border:1.5px solid #55554f;border-radius:7px;"></div><div style="left:674px;top:311px;width:1.6px;height:34px;background:#55554f;"></div><div style="left:643.05px;top:314.72px;font-size:27.5px;line-height:27.5px;color:#b2b2ae;letter-spacing:0px;white-space:nowrap;">M</div><div style="left:686.33px;top:314.72px;font-size:27.5px;line-height:27.5px;color:#1fd42e;letter-spacing:0px;white-space:nowrap;">S</div><div style="left:786.9px;top:316.71px;font-size:25.5px;line-height:25.5px;color:#333;letter-spacing:-0.19px;white-space:nowrap;-webkit-text-stroke:0.26px;">SoCal</div><div style="left:1051.8px;top:318px;width:18px;height:18px;background:#9b9b9b;border-radius:9px;"></div><div style="left:469px;top:372px;width:14.5px;height:84px;background:#2b8cfc;"></div><div style="left:483.5px;top:372px;width:606.5px;height:80px;background:#99c4f0;"></div><div style="left:483.5px;top:452px;width:606.5px;height:4px;background:#c7c7c7;"></div><div style="left:1092px;top:370px;width:44px;height:84px;background:#8a8a8a;"></div><div style="left:634px;top:394px;width:82px;height:36px;background:#6b6b63;border:1.5px solid #55554f;border-radius:7px;"></div><div style="left:674px;top:395px;width:1.6px;height:34px;background:#55554f;"></div><div style="left:643.05px;top:398.72px;font-size:27.5px;line-height:27.5px;color:#b2b2ae;letter-spacing:0px;white-space:nowrap;">M</div><div style="left:686.33px;top:398.72px;font-size:27.5px;line-height:27.5px;color:#1fd42e;letter-spacing:0px;white-space:nowrap;">S</div><div style="left:728px;top:394px;width:42px;height:36px;background:#6b6b63;border:1.5px solid #55554f;border-radius:7px;"></div><div style="left:739.07px;top:398.72px;font-size:27.5px;line-height:27.5px;color:#fff;letter-spacing:0px;white-space:nowrap;">R</div><div style="left:786.9px;top:400.71px;font-size:25.5px;line-height:25.5px;color:#161616;letter-spacing:0.74px;white-space:nowrap;-webkit-text-stroke:0.26px;">Night of Avalon</div><div style="left:1051.8px;top:402px;width:18px;height:18px;background:#3f4f6b;border-radius:9px;"></div><div style="left:469px;top:456px;width:14.5px;height:84px;background:#0bb0ff;"></div><div style="left:483.5px;top:456px;width:606.5px;height:80px;background:#fff;"></div><div style="left:483.5px;top:536px;width:606.5px;height:4px;background:#c7c7c7;"></div><div style="left:1092px;top:537px;width:44px;height:2px;background:#555;"></div><div style="left:634px;top:478px;width:82px;height:36px;background:#6b6b63;border:1.5px solid #55554f;border-radius:7px;"></div><div style="left:674px;top:479px;width:1.6px;height:34px;background:#55554f;"></div><div style="left:643.05px;top:482.72px;font-size:27.5px;line-height:27.5px;color:#b2b2ae;letter-spacing:0px;white-space:nowrap;">M</div><div style="left:686.33px;top:482.72px;font-size:27.5px;line-height:27.5px;color:#1fd42e;letter-spacing:0px;white-space:nowrap;">S</div><div style="left:728px;top:478px;width:42px;height:36px;background:#6b6b63;border:1.5px solid #55554f;border-radius:7px;"></div><div style="left:739.07px;top:482.72px;font-size:27.5px;line-height:27.5px;color:#ff8a1c;letter-spacing:0px;white-space:nowrap;">R</div><div style="left:786.9px;top:484.71px;font-size:25.5px;line-height:25.5px;color:#333;letter-spacing:0.26px;white-space:nowrap;-webkit-text-stroke:0.26px;">Lost Reverse</div><div style="left:1051.8px;top:486px;width:18px;height:18px;background:#9b9b9b;border-radius:9px;"></div><div style="left:469px;top:540px;width:14.5px;height:84px;background:#00c4ff;"></div><div style="left:483.5px;top:540px;width:606.5px;height:80px;background:#fff;"></div><div style="left:483.5px;top:620px;width:606.5px;height:4px;background:#c7c7c7;"></div><div style="left:1092px;top:621px;width:44px;height:2px;background:#555;"></div><div style="left:634px;top:562px;width:82px;height:36px;background:#6b6b63;border:1.5px solid #55554f;border-radius:7px;"></div><div style="left:674px;top:563px;width:1.6px;height:34px;background:#55554f;"></div><div style="left:643.05px;top:566.72px;font-size:27.5px;line-height:27.5px;color:#b2b2ae;letter-spacing:0px;white-space:nowrap;">M</div><div style="left:686.33px;top:566.72px;font-size:27.5px;line-height:27.5px;color:#1fd42e;letter-spacing:0px;white-space:nowrap;">S</div><div style="left:728px;top:562px;width:42px;height:36px;background:#6b6b63;border:1.5px solid #55554f;border-radius:7px;"></div><div style="left:739.07px;top:566.72px;font-size:27.5px;line-height:27.5px;color:#ff8a1c;letter-spacing:0px;white-space:nowrap;">R</div><div style="left:786.9px;top:568.71px;font-size:25.5px;line-height:25.5px;color:#333;letter-spacing:0.58px;white-space:nowrap;-webkit-text-stroke:0.26px;">String Vox</div><div style="left:1051.8px;top:570px;width:18px;height:18px;background:#9b9b9b;border-radius:9px;"></div><div style="left:469px;top:624px;width:14.5px;height:84px;background:#00f2ff;"></div><div style="left:483.5px;top:624px;width:606.5px;height:80px;background:#fff;"></div><div style="left:483.5px;top:704px;width:606.5px;height:4px;background:#c7c7c7;"></div><div style="left:1092px;top:705px;width:44px;height:2px;background:#555;"></div><div style="left:634px;top:646px;width:82px;height:36px;background:#6b6b63;border:1.5px solid #55554f;border-radius:7px;"></div><div style="left:674px;top:647px;width:1.6px;height:34px;background:#55554f;"></div><div style="left:643.05px;top:650.72px;font-size:27.5px;line-height:27.5px;color:#b2b2ae;letter-spacing:0px;white-space:nowrap;">M</div><div style="left:686.33px;top:650.72px;font-size:27.5px;line-height:27.5px;color:#1fd42e;letter-spacing:0px;white-space:nowrap;">S</div><div style="left:728px;top:646px;width:42px;height:36px;background:#6b6b63;border:1.5px solid #55554f;border-radius:7px;"></div><div style="left:739.07px;top:650.72px;font-size:27.5px;line-height:27.5px;color:#ff8a1c;letter-spacing:0px;white-space:nowrap;">R</div><div style="left:786.9px;top:652.71px;font-size:25.5px;line-height:25.5px;color:#333;letter-spacing:0.16px;white-space:nowrap;-webkit-text-stroke:0.26px;">Classic F…ynth Bass</div><div style="left:1051.8px;top:654px;width:18px;height:18px;background:#9b9b9b;border-radius:9px;"></div><div style="left:469px;top:708px;width:14.5px;height:84px;background:#00fdc8;"></div><div style="left:483.5px;top:708px;width:606.5px;height:80px;background:#fff;"></div><div style="left:483.5px;top:788px;width:606.5px;height:4px;background:#c7c7c7;"></div><div style="left:1092px;top:789px;width:44px;height:2px;background:#555;"></div><div style="left:634px;top:730px;width:82px;height:36px;background:#6b6b63;border:1.5px solid #55554f;border-radius:7px;"></div><div style="left:674px;top:731px;width:1.6px;height:34px;background:#55554f;"></div><div style="left:643.05px;top:734.72px;font-size:27.5px;line-height:27.5px;color:#b2b2ae;letter-spacing:0px;white-space:nowrap;">M</div><div style="left:686.33px;top:734.72px;font-size:27.5px;line-height:27.5px;color:#1fd42e;letter-spacing:0px;white-space:nowrap;">S</div><div style="left:728px;top:730px;width:42px;height:36px;background:#6b6b63;border:1.5px solid #55554f;border-radius:7px;"></div><div style="left:739.07px;top:734.72px;font-size:27.5px;line-height:27.5px;color:#ff8a1c;letter-spacing:0px;white-space:nowrap;">R</div><div style="left:786.9px;top:736.71px;font-size:25.5px;line-height:25.5px;color:#333;letter-spacing:0.23px;white-space:nowrap;-webkit-text-stroke:0.26px;">Ocean Bass</div><div style="left:1051.8px;top:738px;width:18px;height:18px;background:#9b9b9b;border-radius:9px;"></div><div style="left:469px;top:792px;width:14.5px;height:40px;background:#00ff8e;"></div><div style="left:483.5px;top:792px;width:606.5px;height:40px;background:#fff;"></div><div style="left:1092px;top:873px;width:44px;height:2px;background:#555;"></div><div style="left:634px;top:814px;width:82px;height:36px;background:#6b6b63;border:1.5px solid #55554f;border-radius:7px;"></div><div style="left:674px;top:815px;width:1.6px;height:34px;background:#55554f;"></div><div style="left:643.05px;top:818.72px;font-size:27.5px;line-height:27.5px;color:#b2b2ae;letter-spacing:0px;white-space:nowrap;">M</div><div style="left:686.33px;top:818.72px;font-size:27.5px;line-height:27.5px;color:#1fd42e;letter-spacing:0px;white-space:nowrap;">S</div><div style="left:728px;top:814px;width:42px;height:36px;background:#6b6b63;border:1.5px solid #55554f;border-radius:7px;"></div><div style="left:739.07px;top:818.72px;font-size:27.5px;line-height:27.5px;color:#ff8a1c;letter-spacing:0px;white-space:nowrap;">R</div><div style="left:786.9px;top:820.71px;font-size:25.5px;line-height:25.5px;color:#333;letter-spacing:1.25px;white-space:nowrap;-webkit-text-stroke:0.26px;">African Kit</div><div style="left:1051.8px;top:822px;width:18px;height:18px;background:#9b9b9b;border-radius:9px;"></div><div style="left:1092px;top:741px;width:44px;height:86px;background:#555;border-top:2px solid #111;"></div><div style="left:1102px;top:776.5px;width:24px;height:23.5px;background:#dcdcdc;border-radius:2px;"></div><div style="left:483.5px;top:261px;width:606px;height:565.5px;overflow:hidden"><svg style="position:absolute;left:-483.5px;top:-261px;" width="1090" height="830" viewBox="0 0 1090 830"><g transform="translate(542.5 306.8) scale(1.01)"><ellipse cx="44" cy="37" rx="13" ry="3.500" fill="rgba(0,0,0,.13)"/><ellipse cx="22" cy="36" rx="13" ry="2.500" fill="rgba(0,0,0,.07)"/><path d="M8.500 9.500V27M8.500 27L.6 36M8.500 27L15 35M8.500 20L2 33" stroke="#b9b3a6" stroke-width="1.100" fill="none"/><path d="M21.500 3.500L16.500 20V30M16.500 30L7.500 37M16.500 30L22.800 40.500" stroke="#b9b3a6" stroke-width="1.100" fill="none"/><path d="M50 3L53.200 7V28M53.200 28L48 34M53.200 28L59.500 41M53.200 28L43 40.300M53.200 16L57 36" stroke="#b9b3a6" stroke-width="1.100" fill="none"/><path d="M45.500 17V30L41 38" stroke="#b9b3a6" stroke-width="1" fill="none"/><circle cx="0.6" cy="36" r=".9" fill="#222"/><circle cx="7.5" cy="37" r=".9" fill="#222"/><circle cx="22.8" cy="40.5" r=".9" fill="#222"/><circle cx="59.5" cy="41" r=".9" fill="#222"/><circle cx="43" cy="40.3" r=".9" fill="#222"/><circle cx="15" cy="35" r=".9" fill="#222"/><path d="M16.200 1L29.500 4.800" stroke="#5a4322" stroke-width="1.500"/><path d="M38.500 4.800L54.200 .5" stroke="#5a4322" stroke-width="1.500"/><path d="M17.500 1L28 4" stroke="#c9a45c" stroke-width=".7"/><path d="M40 4L53 .5" stroke="#c9a45c" stroke-width=".7"/><ellipse cx="10" cy="9.300" rx="4.900" ry=".9" fill="#d6b06a"/><ellipse cx="54" cy="9.500" rx="5.400" ry=".8" fill="#d6b06a"/><rect x="12.400" y="12" width="12.800" height="10.300" rx="1.200" fill="#cfa873"/><ellipse cx="18.800" cy="12.300" rx="6.400" ry="1.500" fill="#e9e2d4"/><path d="M12.400 20.500h12.800" stroke="#a8824e" stroke-width=".8"/><rect x="34.700" y="10.300" width="10.500" height="6.300" rx="1.200" fill="#cfa873"/><ellipse cx="40" cy="10.600" rx="5.200" ry="1.300" fill="#e9e2d4"/><rect x="42.800" y="13.600" width="7.100" height="4" rx="1" fill="#c9b79a"/><ellipse cx="46.300" cy="13.800" rx="3.500" ry=".9" fill="#e9e2d4"/><ellipse cx="36.500" cy="27" rx="7" ry="8.300" fill="#cfa873"/><circle cx="32.300" cy="28.500" r="9" fill="#9c7a4e"/><circle cx="32.300" cy="28.500" r="8" fill="#cfcfcf"/><circle cx="32.300" cy="28.500" r="8" fill="none" stroke="#999" stroke-width=".6"/></g><g transform="translate(542.5 222.8) scale(1.01)"><ellipse cx="44" cy="37" rx="13" ry="3.500" fill="rgba(0,0,0,.13)"/><ellipse cx="22" cy="36" rx="13" ry="2.500" fill="rgba(0,0,0,.07)"/><path d="M8.500 9.500V27M8.500 27L.6 36M8.500 27L15 35M8.500 20L2 33" stroke="#b9b3a6" stroke-width="1.100" fill="none"/><path d="M21.500 3.500L16.500 20V30M16.500 30L7.500 37M16.500 30L22.800 40.500" stroke="#b9b3a6" stroke-width="1.100" fill="none"/><path d="M50 3L53.200 7V28M53.200 28L48 34M53.200 28L59.500 41M53.200 28L43 40.300M53.200 16L57 36" stroke="#b9b3a6" stroke-width="1.100" fill="none"/><path d="M45.500 17V30L41 38" stroke="#b9b3a6" stroke-width="1" fill="none"/><circle cx="0.6" cy="36" r=".9" fill="#222"/><circle cx="7.5" cy="37" r=".9" fill="#222"/><circle cx="22.8" cy="40.5" r=".9" fill="#222"/><circle cx="59.5" cy="41" r=".9" fill="#222"/><circle cx="43" cy="40.3" r=".9" fill="#222"/><circle cx="15" cy="35" r=".9" fill="#222"/><path d="M16.200 1L29.500 4.800" stroke="#5a4322" stroke-width="1.500"/><path d="M38.500 4.800L54.200 .5" stroke="#5a4322" stroke-width="1.500"/><path d="M17.500 1L28 4" stroke="#c9a45c" stroke-width=".7"/><path d="M40 4L53 .5" stroke="#c9a45c" stroke-width=".7"/><ellipse cx="10" cy="9.300" rx="4.900" ry=".9" fill="#d6b06a"/><ellipse cx="54" cy="9.500" rx="5.400" ry=".8" fill="#d6b06a"/><rect x="16.200" y="13" width="9" height="9.300" rx="1.200" fill="#e9e9ea" stroke="#bdbdbd" stroke-width=".5"/><rect x="22.300" y="9.600" width="10" height="8" rx="1.200" fill="#e9e9ea" stroke="#bdbdbd" stroke-width=".5"/><rect x="35.200" y="10.300" width="8.100" height="7" rx="1.200" fill="#e9e9ea" stroke="#bdbdbd" stroke-width=".5"/><rect x="43.300" y="13.300" width="6.700" height="3.700" rx="1" fill="#e9e9ea" stroke="#bdbdbd" stroke-width=".5"/><path d="M24.500 10v7M27.300 10v7.300M30 10v7M37.500 10.800v6M40.500 10.800v6M18.500 14v8M22 14v8" stroke="#c8c8c8" stroke-width=".7"/><ellipse cx="36.500" cy="27.500" rx="6.300" ry="8.600" fill="#e3e3e3" stroke="#bbb" stroke-width=".5"/><circle cx="31.800" cy="29" r="8.900" fill="#c79a4e"/><circle cx="31.800" cy="28.800" r="8.500" fill="#0d0d0d"/></g><g transform="translate(543.7 393.8) scale(1.01)"><path d="M0 0h46l14 4.5v10.500H2.500v-3H0z" fill="#0b5fc0"/><rect x="3.300" y="3" width="18.500" height="5.600" fill="#99c4f0"/><rect x="6" y="4.500" width="2.600" height="2.600" fill="#0b5fc0"/><rect x="10.200" y="4.500" width="2.600" height="2.600" fill="#0b5fc0"/><rect x="13.500" y="7.400" width="44" height="6" fill="#99c4f0"/><rect x="15.200" y="9" width="40.500" height="2.700" fill="#0b5fc0"/><path d="M19 15l27.500 26.500M41.500 15L14.500 41.500" stroke="#0b5fc0" stroke-width="2.200" fill="none"/><circle cx="14.500" cy="41.800" r="2.300" fill="#0b5fc0"/><circle cx="46.500" cy="41.800" r="2.300" fill="#0b5fc0"/></g><g transform="translate(548 468.5) scale(1)"><path d="M2.5 14.3v2.4M7 11.5v8M12 6.5v18M18.2 0.5v30M24 6.5v18M29 11v9M33.5 14v3M37.5 11v9M42 6v19M46.5 11.5v8M50 14.3v2.4" stroke="#22b2ff" stroke-width="2.400" stroke-linecap="round" fill="none"/><rect x="1" y="36" width="49.500" height="19.500" rx="1.500" fill="none" stroke="#22b2ff" stroke-width="1.800"/><path d="M8.07 36v19" stroke="#22b2ff" stroke-width="1.300"/><path d="M15.14 36v19" stroke="#22b2ff" stroke-width="1.300"/><path d="M22.21 36v19" stroke="#22b2ff" stroke-width="1.300"/><path d="M29.28 36v19" stroke="#22b2ff" stroke-width="1.300"/><path d="M36.35 36v19" stroke="#22b2ff" stroke-width="1.300"/><path d="M43.42 36v19" stroke="#22b2ff" stroke-width="1.300"/><rect x="5.77" y="36" width="4.600" height="11.500" fill="#22b2ff"/><rect x="12.84" y="36" width="4.600" height="11.500" fill="#22b2ff"/><rect x="26.98" y="36" width="4.600" height="11.500" fill="#22b2ff"/><rect x="34.05" y="36" width="4.600" height="11.500" fill="#22b2ff"/><rect x="41.12" y="36" width="4.600" height="11.500" fill="#22b2ff"/></g><g transform="translate(543.7 561.8) scale(1.01)"><path d="M0 0h46l14 4.5v10.500H2.500v-3H0z" fill="#22c0ee"/><rect x="3.300" y="3" width="18.500" height="5.600" fill="#fff"/><rect x="6" y="4.500" width="2.600" height="2.600" fill="#22c0ee"/><rect x="10.200" y="4.500" width="2.600" height="2.600" fill="#22c0ee"/><rect x="13.500" y="7.400" width="44" height="6" fill="#fff"/><rect x="15.200" y="9" width="40.500" height="2.700" fill="#22c0ee"/><path d="M19 15l27.500 26.500M41.500 15L14.500 41.500" stroke="#22c0ee" stroke-width="2.200" fill="none"/><circle cx="14.500" cy="41.800" r="2.300" fill="#22c0ee"/><circle cx="46.500" cy="41.800" r="2.300" fill="#22c0ee"/></g><g transform="translate(552 637) scale(1)"><path d="M6 43.500L21 38l20 8L27 52.500z" fill="rgba(0,0,0,.24)" filter="url(#rkb)"/><defs><filter id="rkb" x="-30%" y="-30%" width="160%" height="160%"><feGaussianBlur stdDeviation="1.300"/></filter></defs><path d="M33 16.600L9.700 40.100M.2 44.600L18.200 37.500" stroke="#1c1c1c" stroke-width="1.700" fill="none"/><path d="M10.800 11.800L33.600 48.300M24.300 53.600L41.500 44.100" stroke="#111" stroke-width="1.900" fill="none"/><path d="M34.100 15L46.800 5.500L46.300 11.800L34.100 16.900z" fill="#9d9d9d"/><path d="M34.100 16L46.500 9.300L46.300 11.800L34.100 16.900z" fill="#7c3a17"/><path d="M16.600 1L46.800 5.500L34.100 15L3.100 9.700z" fill="#dcdcdc"/><path d="M23 3.100L41 5.800L37.200 8.600L19 5.700z" fill="#2f86b8"/><path d="M27 4.800L36 6.100L35 6.900L26 5.600z" fill="#8a6a2a"/><path d="M38.500 7.900L44.500 8.700L42.500 10.300L36.500 9.400z" fill="#2f78a8"/><path d="M7.500 8.700L35 13.200" stroke="#111" stroke-width="1.500"/><path d="M4.500 9.600L34 14.600" stroke="#fafafa" stroke-width="1"/><path d="M3.100 9.900L34.100 15.200V16.900L3.100 11.500z" fill="#9a4a1c"/></g><g transform="translate(549.5 723.5) scale(1)"><rect x="1" y="1" width="46" height="20.500" fill="none" stroke="#16c9a8" stroke-width="1.800"/><path d="M1 12.500h46" stroke="#16c9a8" stroke-width="1.500"/><rect x="4.500" y="15" width="39" height="3.300" fill="#16c9a8"/><rect x="5" y="4" width="2" height="2" fill="#16c9a8"/><rect x="9" y="4" width="2" height="2" fill="#16c9a8"/><rect x="14.5" y="4" width="2" height="2" fill="#16c9a8"/><rect x="18.5" y="4" width="2" height="2" fill="#16c9a8"/><rect x="22.5" y="4" width="2" height="2" fill="#16c9a8"/><rect x="29.5" y="4" width="2" height="2" fill="#16c9a8"/><rect x="33.5" y="4" width="2" height="2" fill="#16c9a8"/><rect x="37.5" y="4" width="2" height="2" fill="#16c9a8"/><rect x="41.5" y="4" width="2" height="2" fill="#16c9a8"/><rect x="5" y="8" width="2" height="2" fill="#16c9a8"/><rect x="14.5" y="8" width="2" height="2" fill="#16c9a8"/><rect x="18.5" y="8" width="2" height="2" fill="#16c9a8"/><rect x="22.5" y="8" width="2" height="2" fill="#16c9a8"/><rect x="29.5" y="8" width="2" height="2" fill="#16c9a8"/><rect x="33.5" y="8" width="2" height="2" fill="#16c9a8"/><rect x="37.5" y="8" width="2" height="2" fill="#16c9a8"/><path d="M13 22l21.500 26M35 22L13.500 48" stroke="#16c9a8" stroke-width="2" fill="none"/><circle cx="10.500" cy="48" r="2.200" fill="#16c9a8"/><circle cx="37.500" cy="48" r="2.200" fill="#16c9a8"/></g><g transform="translate(558 805.5) scale(1)"><path d="M0 6c0 14 3 22 8 28h17c5-6 8-14 8-28z" fill="#00d68c"/><ellipse cx="16.500" cy="6" rx="16.500" ry="5.500" fill="#00d68c"/><path d="M.5 10.500c4 4.500 28 4.500 32 0" stroke="#fff" stroke-width="1.600" fill="none"/><path d="M1.200 16c5 4.500 26 4.500 30.500 0" stroke="#fff" stroke-width="1.600" fill="none"/></g></svg></div><div style="left:2123.6px;top:190.5px;width:405.4px;height:31.3px;background:#c5c8c8;"></div><div style="left:1435.88px;top:191.97px;font-size:26.5px;line-height:26.5px;color:#424242;letter-spacing:0.6px;white-space:nowrap;-webkit-text-stroke:0.16px;">17</div><div style="left:1706.76px;top:191.97px;font-size:26.5px;line-height:26.5px;color:#424242;letter-spacing:0.6px;white-space:nowrap;-webkit-text-stroke:0.16px;">33</div><div style="left:1977.64px;top:191.97px;font-size:26.5px;line-height:26.5px;color:#424242;letter-spacing:0.6px;white-space:nowrap;-webkit-text-stroke:0.16px;">49</div><div style="left:2248.52px;top:191.97px;font-size:26.5px;line-height:26.5px;color:#424242;letter-spacing:0.6px;white-space:nowrap;-webkit-text-stroke:0.16px;">65</div><div style="left:2519.4px;top:191.97px;font-size:26.5px;line-height:26.5px;color:#424242;letter-spacing:0.6px;white-space:nowrap;-webkit-text-stroke:0.16px;">81</div><div style="left:2790.28px;top:191.97px;font-size:26.5px;line-height:26.5px;color:#424242;letter-spacing:0.6px;white-space:nowrap;-webkit-text-stroke:0.16px;">97</div><div style="left:1164px;top:191.97px;font-size:26.5px;line-height:26.5px;color:#424242;letter-spacing:0px;white-space:nowrap;-webkit-text-stroke:0.16px;">1</div><svg style="position:absolute;left:1138px;top:190.5px;" width="1734" height="70" viewBox="1138 190.500 1734 70"><path d="M1428.38 197v62" stroke="#a9acb4" stroke-width="1.300"/><path d="M1699.26 197v62" stroke="#a9acb4" stroke-width="1.300"/><path d="M1970.14 197v62" stroke="#a9acb4" stroke-width="1.300"/><path d="M2241.02 197v62" stroke="#a9acb4" stroke-width="1.300"/><path d="M2511.9 197v62" stroke="#a9acb4" stroke-width="1.300"/><path d="M2782.78 197v62" stroke="#a9acb4" stroke-width="1.300"/><path d="M1157.5 190.500v70" stroke="#111" stroke-width="1.600" stroke-dasharray="1.500 1.500"/><path d="M1157.500 225.100H2872" stroke="#a4a8a8" stroke-width="1.600"/><path d="M1173 260.500V234l23.500-11.700H1309V260.500z" fill="#bedcf9"/><path d="M1191.36 231v27.500M1208.29 231v27.500M1225.22 231v27.500M1242.15 231v27.500M1259.08 231v27.500M1276.01 231v27.500M1292.94 231v27.500" stroke="#a6c2e6" stroke-width="1.200"/><path d="M1173 234l23.500-11.700H1309" fill="none" stroke="#6a6e78" stroke-width="1.500"/><path d="M1173 234v25.500" stroke="#555" stroke-width="1.300"/><path d="M1309 260.500V234l23.500-11.700H1605V260.500z" fill="#bedcf9"/><path d="M1326.8 231v27.500M1343.73 231v27.500M1360.66 231v27.500M1377.59 231v27.500M1394.52 231v27.500M1411.45 231v27.500M1428.38 231v27.500M1445.31 231v27.500M1462.24 231v27.500M1479.17 231v27.500M1496.1 231v27.500M1513.03 231v27.500M1529.96 231v27.500M1546.89 231v27.500M1563.82 231v27.500M1580.75 231v27.500M1597.68 231v27.500" stroke="#a6c2e6" stroke-width="1.200"/><path d="M1309 234l23.500-11.700H1605" fill="none" stroke="#6a6e78" stroke-width="1.500"/><path d="M1309 221.600v38" stroke="#1a1a1a" stroke-width="1.800"/><path d="M1605 260.500V234l23.500-11.700H1918.7V260.500z" fill="#bedcf9"/><path d="M1631.54 231v27.500M1648.47 231v27.500M1665.4 231v27.500M1682.33 231v27.500M1699.26 231v27.500M1716.19 231v27.500M1733.12 231v27.500M1750.05 231v27.500M1766.98 231v27.500M1783.91 231v27.500M1800.84 231v27.500M1817.77 231v27.500M1834.7 231v27.500M1851.63 231v27.500M1868.56 231v27.500M1885.49 231v27.500M1902.42 231v27.500" stroke="#a6c2e6" stroke-width="1.200"/><path d="M1605 234l23.500-11.700H1918.7" fill="none" stroke="#6a6e78" stroke-width="1.500"/><path d="M1605 221.600v38" stroke="#1a1a1a" stroke-width="1.800"/><path d="M1918.7 260.500V234l23.500-11.700H2214.5V260.500z" fill="#bedcf9"/><path d="M1936.28 231v27.500M1953.21 231v27.500M1970.14 231v27.500M1987.07 231v27.500M2004 231v27.500M2020.93 231v27.500M2037.86 231v27.500M2054.79 231v27.500M2071.72 231v27.500M2088.65 231v27.500M2105.58 231v27.500M2122.51 231v27.500M2139.44 231v27.500M2156.37 231v27.500M2173.3 231v27.500M2190.23 231v27.500M2207.16 231v27.500" stroke="#a6c2e6" stroke-width="1.200"/><path d="M1918.7 234l23.500-11.700H2214.5" fill="none" stroke="#6a6e78" stroke-width="1.500"/><path d="M1918.7 221.600v38" stroke="#1a1a1a" stroke-width="1.800"/><path d="M2214.5 260.500V234l23.500-11.700H2528.7V260.500z" fill="#bedcf9"/><path d="M2241.02 231v27.500M2257.95 231v27.500M2274.88 231v27.500M2291.81 231v27.500M2308.74 231v27.500M2325.67 231v27.500M2342.6 231v27.500M2359.53 231v27.500M2376.46 231v27.500M2393.39 231v27.500M2410.32 231v27.500M2427.25 231v27.500M2444.18 231v27.500M2461.11 231v27.500M2478.04 231v27.500M2494.97 231v27.500M2511.9 231v27.500" stroke="#a6c2e6" stroke-width="1.200"/><path d="M2214.5 234l23.500-11.700H2528.7" fill="none" stroke="#6a6e78" stroke-width="1.500"/><path d="M2214.5 221.600v38" stroke="#1a1a1a" stroke-width="1.800"/><path d="M2528.7 260.500V234l23.500-11.700H2824.7V260.500z" fill="#bedcf9"/><path d="M2545.76 231v27.500M2562.69 231v27.500M2579.62 231v27.500M2596.55 231v27.500M2613.48 231v27.500M2630.41 231v27.500M2647.34 231v27.500M2664.27 231v27.500M2681.2 231v27.500M2698.13 231v27.500M2715.06 231v27.500M2731.99 231v27.500M2748.92 231v27.500M2765.85 231v27.500M2782.78 231v27.500M2799.71 231v27.500M2816.64 231v27.500" stroke="#a6c2e6" stroke-width="1.200"/><path d="M2528.7 234l23.500-11.700H2824.7" fill="none" stroke="#6a6e78" stroke-width="1.500"/><path d="M2528.7 221.600v38" stroke="#1a1a1a" stroke-width="1.800"/><path d="M2824.7 260.500V234l23.500-11.700H2900V260.500z" fill="#bedcf9"/><path d="M2850.5 231v27.500M2867.43 231v27.500M2884.36 231v27.500" stroke="#a6c2e6" stroke-width="1.200"/><path d="M2824.7 234l23.500-11.700H2900" fill="none" stroke="#6a6e78" stroke-width="1.500"/><path d="M2824.7 221.600v38" stroke="#1a1a1a" stroke-width="1.800"/><path d="M1777.300 229a4 4 0 0 1 4-4h17.400a4 4 0 0 1 4 4v9.500l-11.500 13h-2.400l-11.500-13z" fill="rgba(78,90,128,.88)"/></svg><div style="left:1138px;top:190.500px;width:1734px;height:70px;overflow:hidden"><div style="left:-1138px;top:-190.500px;width:2880px;height:300px"><div style="left:1208px;top:229.56px;font-size:24.5px;line-height:24.5px;color:#fff;letter-spacing:-0.49px;white-space:nowrap;font-weight:bold;text-shadow:0 0 2px rgba(120,150,200,.6);">Intro</div><div style="left:1344.5px;top:229.56px;font-size:24.5px;line-height:24.5px;color:#fff;letter-spacing:-0.98px;white-space:nowrap;font-weight:bold;text-shadow:0 0 2px rgba(120,150,200,.6);">Verse 1</div><div style="left:1640px;top:229.56px;font-size:24.5px;line-height:24.5px;color:#fff;letter-spacing:-1.21px;white-space:nowrap;font-weight:bold;text-shadow:0 0 2px rgba(120,150,200,.6);">Chorus 1</div><div style="left:1954.5px;top:229.56px;font-size:24.5px;line-height:24.5px;color:#fff;letter-spacing:-0.62px;white-space:nowrap;font-weight:bold;text-shadow:0 0 2px rgba(120,150,200,.6);">Verse 2</div><div style="left:2250px;top:229.56px;font-size:24.5px;line-height:24.5px;color:#fff;letter-spacing:-0.82px;white-space:nowrap;font-weight:bold;text-shadow:0 0 2px rgba(120,150,200,.6);">Chorus 2</div><div style="left:2564.4px;top:229.56px;font-size:24.5px;line-height:24.5px;color:#fff;letter-spacing:-1.01px;white-space:nowrap;font-weight:bold;text-shadow:0 0 2px rgba(120,150,200,.6);">Breakdown</div><div style="left:2860px;top:229.56px;font-size:24.5px;line-height:24.5px;color:#fff;letter-spacing:-1.69px;white-space:nowrap;font-weight:bold;text-shadow:0 0 2px rgba(120,150,200,.6);">C</div></div></div><div style="left:1138px;top:259.3px;width:1734px;height:1.6px;background:#dfe3e6;"></div><div style="left:1138px;top:260.500px;width:1734px;height:566px;overflow:hidden"><div style="left:-1138px;top:-260.500px;width:2880px;height:900px"><div style="left:1155.2px;top:285.7px;width:139.1px;height:83.1px;background:#ffcb2b;border:2px solid #0b0b0b;border-radius:9px;overflow:hidden;"><div style="left:-0.200px;top:-0.200px;width:135.5px;height:80px"><svg style="position:absolute;left:0px;top:0px;" width="135.5" height="80" viewBox="0 0 135.5 80"><path d="M0 64.500L1 55.76L3.77 61.01L6.54 55.06L9.32 62.93L12.09 53.84L14.86 60.75L17.63 56.69L20.4 61.64L23.17 59.42L25.95 62.3L28.72 54.91L31.49 61.01L34.26 55.8L37.03 63L39.8 58.24L42.58 60.54L45.35 57.76L48.12 61.65L50.89 58.27L53.66 61.27L56.43 54.14L59.21 62.1L61.98 58.63L64.75 62.25L67.52 59.48L70.29 62.16L73.07 54.59L75.84 62.21L78.61 55.27L81.38 60.56L84.15 55L86.92 62.95L89.7 57.3L92.47 62.98L95.24 58.41L98.01 62.51L100.78 53.92L103.55 62.14L106.33 56.35L109.1 62.73L111.87 54.72L114.64 62.91L117.41 58.95L120.18 61.47L122.96 57.46L125.73 61.64L128.5 57.6L132.5 64.500L128.5 70.39L125.73 67.06L122.96 72.08L120.18 67.76L117.41 69.5L114.64 66.22L111.87 74.85L109.1 66.31L106.33 72.91L103.55 66.64L100.78 75.95L98.01 66.54L95.24 71.11L92.47 65.74L89.7 71.51L86.92 66.1L84.15 74.51L81.38 67.68L78.61 72.04L75.84 66.66L73.07 73.86L70.29 66.59L67.52 69.54L64.75 66.71L61.98 69.31L59.21 66.54L56.43 73.72L53.66 68.02L50.89 71.24L48.12 67.36L45.35 71.83L42.58 68.7L39.8 69.91L37.03 66.1L34.26 71.79L31.49 67.44L28.72 72.63L25.95 66.86L23.17 68.89L20.4 67.28L17.63 71.33L14.86 67.63L12.09 75.1L9.32 65.98L6.54 74.66L3.77 68.28L1 73.43z" fill="rgba(255,240,185,.85)"/></svg></div></div><div style="left:1159px;top:289.5px;width:131.5px;height:40px;overflow:hidden"><div style="left:9px;top:7.27px;font-size:21.3px;line-height:21.3px;color:#fff;letter-spacing:0.2px;white-space:nowrap;-webkit-text-stroke:0.51px;">SoCal</div></div><div style="left:1613.7px;top:369.7px;width:306.4px;height:83.1px;background:#2b94ff;border:2px solid #0b0b0b;border-radius:9px;overflow:hidden;box-shadow:inset 0 0 0 1.500px #cbe3ff;"><div style="left:-0.200px;top:-0.200px;width:302.8px;height:80px"><div style="left:0px;top:0px;width:302.8px;height:36.4px;background:#cbe3ff;"></div><div style="left:16.9px;top:50.7px;width:7px;height:4px;background:rgba(235,246,255,.85);"></div><div style="left:53.25px;top:50.7px;width:9px;height:4px;background:rgba(235,246,255,.85);"></div><div style="left:89.6px;top:50.7px;width:9px;height:4px;background:rgba(235,246,255,.85);"></div><div style="left:125.95px;top:50.7px;width:7px;height:4px;background:rgba(235,246,255,.85);"></div><div style="left:162.3px;top:50.7px;width:5px;height:4px;background:rgba(235,246,255,.85);"></div><div style="left:198.65px;top:50.7px;width:9px;height:4px;background:rgba(235,246,255,.85);"></div><div style="left:235px;top:50.7px;width:5px;height:4px;background:rgba(235,246,255,.85);"></div><div style="left:271.35px;top:50.7px;width:7px;height:4px;background:rgba(235,246,255,.85);"></div></div></div><div style="left:1617.5px;top:373.5px;width:298.8px;height:40px;overflow:hidden"><div style="left:9px;top:7.27px;font-size:21.3px;line-height:21.3px;color:#14305e;letter-spacing:1.01px;white-space:nowrap;-webkit-text-stroke:0.51px;">Night of Avalon</div></div><div style="left:2223.7px;top:369.7px;width:306.6px;height:83.1px;background:#2b94ff;border:2px solid #0b0b0b;border-radius:9px;overflow:hidden;box-shadow:inset 0 0 0 1.500px #cbe3ff;"><div style="left:-0.200px;top:-0.200px;width:303px;height:80px"><div style="left:0px;top:0px;width:303px;height:36.4px;background:#cbe3ff;"></div><div style="left:16.91px;top:50.7px;width:5px;height:4px;background:rgba(235,246,255,.85);"></div><div style="left:53.29px;top:50.7px;width:7px;height:4px;background:rgba(235,246,255,.85);"></div><div style="left:89.66px;top:50.7px;width:5px;height:4px;background:rgba(235,246,255,.85);"></div><div style="left:126.04px;top:50.7px;width:5px;height:4px;background:rgba(235,246,255,.85);"></div><div style="left:162.41px;top:50.7px;width:5px;height:4px;background:rgba(235,246,255,.85);"></div><div style="left:198.79px;top:50.7px;width:7px;height:4px;background:rgba(235,246,255,.85);"></div><div style="left:235.16px;top:50.7px;width:9px;height:4px;background:rgba(235,246,255,.85);"></div><div style="left:271.54px;top:50.7px;width:5px;height:4px;background:rgba(235,246,255,.85);"></div></div></div><div style="left:2227.5px;top:373.5px;width:299px;height:40px;overflow:hidden"><div style="left:9px;top:7.27px;font-size:21.3px;line-height:21.3px;color:#14305e;letter-spacing:1.01px;white-space:nowrap;-webkit-text-stroke:0.51px;">Night of Avalon</div></div><div style="left:2528px;top:369.7px;width:308.3px;height:83.1px;background:#2b94ff;border:2px solid #0b0b0b;border-radius:9px;overflow:hidden;box-shadow:inset 0 0 0 1.500px #cbe3ff;"><div style="left:-0.200px;top:-0.200px;width:304.7px;height:80px"><div style="left:0px;top:0px;width:304.7px;height:36.4px;background:#cbe3ff;"></div><div style="left:16.98px;top:50.7px;width:5px;height:4px;background:rgba(235,246,255,.85);"></div><div style="left:53.56px;top:51.7px;width:9px;height:4px;background:rgba(235,246,255,.85);"></div><div style="left:90.15px;top:48.7px;width:7px;height:4px;background:rgba(235,246,255,.85);"></div><div style="left:126.74px;top:51.7px;width:9px;height:4px;background:rgba(235,246,255,.85);"></div><div style="left:163.33px;top:51.7px;width:5px;height:4px;background:rgba(235,246,255,.85);"></div><div style="left:199.91px;top:50.7px;width:9px;height:4px;background:rgba(235,246,255,.85);"></div><div style="left:236.5px;top:50.7px;width:7px;height:4px;background:rgba(235,246,255,.85);"></div><div style="left:273.09px;top:50.7px;width:5px;height:4px;background:rgba(235,246,255,.85);"></div></div></div><div style="left:2531.8px;top:373.5px;width:300.7px;height:40px;overflow:hidden"><div style="left:9px;top:7.27px;font-size:21.3px;line-height:21.3px;color:#14305e;letter-spacing:1.01px;white-space:nowrap;-webkit-text-stroke:0.51px;">Night of Avalon</div></div><div style="left:1257.2px;top:453.7px;width:19.6px;height:83.1px;background:#0bb0ff;border:2px solid #0b0b0b;border-radius:4px;overflow:hidden;"><div style="left:-0.200px;top:-0.200px;width:16px;height:80px"></div></div><div style="left:1613.7px;top:453.7px;width:290.8px;height:83.1px;background:#0bb0ff;border:2px solid #0b0b0b;border-radius:9px;overflow:hidden;"><div style="left:-0.200px;top:-0.200px;width:287.2px;height:80px"><div style="left:1.77px;top:52.3px;width:10px;height:4px;background:rgba(235,246,255,.85);"></div><div style="left:34.35px;top:52.3px;width:10px;height:4px;background:rgba(235,246,255,.85);"></div><div style="left:66.93px;top:52.3px;width:10px;height:4px;background:rgba(235,246,255,.85);"></div><div style="left:99.51px;top:52.3px;width:8px;height:4px;background:rgba(235,246,255,.85);"></div><div style="left:132.08px;top:52.3px;width:13px;height:4px;background:rgba(235,246,255,.85);"></div><div style="left:164.66px;top:52.3px;width:8px;height:4px;background:rgba(235,246,255,.85);"></div><div style="left:197.24px;top:52.3px;width:10px;height:4px;background:rgba(235,246,255,.85);"></div><div style="left:229.82px;top:52.3px;width:8px;height:4px;background:rgba(235,246,255,.85);"></div><div style="left:262.4px;top:52.3px;width:10px;height:4px;background:rgba(235,246,255,.85);"></div></div></div><div style="left:1617.5px;top:457.5px;width:283.2px;height:40px;overflow:hidden"><div style="left:9px;top:7.27px;font-size:21.3px;line-height:21.3px;color:#fff;letter-spacing:0.67px;white-space:nowrap;-webkit-text-stroke:0.51px;">Lost Reverse</div></div><div style="left:2223.7px;top:453.7px;width:306.6px;height:83.1px;background:#0bb0ff;border:2px solid #0b0b0b;border-radius:9px;overflow:hidden;"><div style="left:-0.200px;top:-0.200px;width:303px;height:80px"><div style="left:2.3px;top:52.3px;width:10px;height:4px;background:rgba(235,246,255,.85);"></div><div style="left:36.63px;top:52.3px;width:10px;height:4px;background:rgba(235,246,255,.85);"></div><div style="left:70.97px;top:52.3px;width:10px;height:4px;background:rgba(235,246,255,.85);"></div><div style="left:105.3px;top:52.3px;width:13px;height:4px;background:rgba(235,246,255,.85);"></div><div style="left:139.63px;top:52.3px;width:8px;height:4px;background:rgba(235,246,255,.85);"></div><div style="left:173.97px;top:52.3px;width:8px;height:4px;background:rgba(235,246,255,.85);"></div><div style="left:208.3px;top:52.3px;width:10px;height:4px;background:rgba(235,246,255,.85);"></div><div style="left:242.63px;top:52.3px;width:10px;height:4px;background:rgba(235,246,255,.85);"></div><div style="left:276.97px;top:52.3px;width:13px;height:4px;background:rgba(235,246,255,.85);"></div></div></div><div style="left:2227.5px;top:457.5px;width:299px;height:40px;overflow:hidden"><div style="left:9px;top:7.27px;font-size:21.3px;line-height:21.3px;color:#fff;letter-spacing:0.67px;white-space:nowrap;-webkit-text-stroke:0.51px;">Lost Reverse</div></div><div style="left:1613.7px;top:537.7px;width:306.4px;height:83.1px;background:#00c9ff;border:2px solid #0b0b0b;border-radius:9px;overflow:hidden;"><div style="left:-0.200px;top:-0.200px;width:302.8px;height:80px"><div style="left:0px;top:51px;width:302.8px;height:4px;background:rgba(255,255,255,.62);"></div></div></div><div style="left:1617.5px;top:541.5px;width:298.8px;height:40px;overflow:hidden"><div style="left:9px;top:7.27px;font-size:21.3px;line-height:21.3px;color:#fff;letter-spacing:0.89px;white-space:nowrap;-webkit-text-stroke:0.51px;">String Vox</div></div><div style="left:2223.7px;top:537.7px;width:306.6px;height:83.1px;background:#00c9ff;border:2px solid #0b0b0b;border-radius:9px;overflow:hidden;"><div style="left:-0.200px;top:-0.200px;width:303px;height:80px"><div style="left:0px;top:51px;width:303px;height:4px;background:rgba(255,255,255,.62);"></div></div></div><div style="left:2227.5px;top:541.5px;width:299px;height:40px;overflow:hidden"><div style="left:9px;top:7.27px;font-size:21.3px;line-height:21.3px;color:#fff;letter-spacing:0.89px;white-space:nowrap;-webkit-text-stroke:0.51px;">String Vox</div></div><div style="left:1613.7px;top:621.7px;width:306.4px;height:83.1px;background:#00fbff;border:2px solid #0b0b0b;border-radius:9px;overflow:hidden;"><div style="left:-0.200px;top:-0.200px;width:302.8px;height:80px"><div style="left:0px;top:51px;width:302.8px;height:4px;background:rgba(255,255,255,.62);"></div></div></div><div style="left:1617.5px;top:625.5px;width:298.8px;height:40px;overflow:hidden"><div style="left:9px;top:7.27px;font-size:21.3px;line-height:21.3px;color:#fff;letter-spacing:1.23px;white-space:nowrap;-webkit-text-stroke:0.51px;">Moonlight Ark</div></div><div style="left:2223.7px;top:621.7px;width:306.6px;height:83.1px;background:#00fbff;border:2px solid #0b0b0b;border-radius:9px;overflow:hidden;"><div style="left:-0.200px;top:-0.200px;width:303px;height:80px"><div style="left:0px;top:51px;width:303px;height:4px;background:rgba(255,255,255,.62);"></div></div></div><div style="left:2227.5px;top:625.5px;width:299px;height:40px;overflow:hidden"><div style="left:9px;top:7.27px;font-size:21.3px;line-height:21.3px;color:#fff;letter-spacing:1.23px;white-space:nowrap;-webkit-text-stroke:0.51px;">Moonlight Ark</div></div><div style="left:2613.2px;top:621.7px;width:171.1px;height:83.1px;background:#a4fbff;border:2px solid #0b0b0b;border-radius:9px;overflow:hidden;"><div style="left:-0.200px;top:-0.200px;width:167.5px;height:80px"></div></div><div style="left:2617px;top:625.5px;width:163.5px;height:40px;overflow:hidden"><div style="left:9px;top:7.27px;font-size:21.3px;line-height:21.3px;color:#fff;letter-spacing:0.89px;white-space:nowrap;-webkit-text-stroke:0.51px;">Classic Funk Synth Bass</div></div><div style="left:1613.7px;top:705.7px;width:306.4px;height:83.1px;background:#00ffcc;border:2px solid #0b0b0b;border-radius:9px;overflow:hidden;"><div style="left:-0.200px;top:-0.200px;width:302.8px;height:80px"><div style="left:0px;top:66.1px;width:3.98px;height:4px;background:rgba(190,255,238,.82);"></div><div style="left:32.48px;top:66.1px;width:5.7px;height:4px;background:rgba(190,255,238,.82);"></div><div style="left:66.29px;top:66.1px;width:5.97px;height:4px;background:rgba(190,255,238,.82);"></div><div style="left:112.43px;top:66.1px;width:19.89px;height:4px;background:rgba(190,255,238,.82);"></div><div style="left:136.56px;top:66.1px;width:5.7px;height:4px;background:rgba(190,255,238,.82);"></div><div style="left:166.39px;top:66.1px;width:7.29px;height:4px;background:rgba(190,255,238,.82);"></div><div style="left:200.86px;top:66.1px;width:7.69px;height:4px;background:rgba(190,255,238,.82);"></div><div style="left:248.86px;top:66.1px;width:19.62px;height:4px;background:rgba(190,255,238,.82);"></div><div style="left:3.98px;top:60.15px;width:6.23px;height:4px;background:rgba(190,255,238,.82);"></div><div style="left:38.18px;top:60.15px;width:7.82px;height:4px;background:rgba(190,255,238,.82);"></div><div style="left:72.26px;top:60.15px;width:5.97px;height:4px;background:rgba(190,255,238,.82);"></div><div style="left:140.54px;top:60.15px;width:5.97px;height:4px;background:rgba(190,255,238,.82);"></div><div style="left:175.67px;top:60.15px;width:4.91px;height:4px;background:rgba(190,255,238,.82);"></div><div style="left:208.82px;top:60.15px;width:5.97px;height:4px;background:rgba(190,255,238,.82);"></div><div style="left:10.21px;top:55.92px;width:19.89px;height:4px;background:rgba(190,255,238,.82);"></div><div style="left:44.41px;top:55.92px;width:19.62px;height:4px;background:rgba(190,255,238,.82);"></div><div style="left:78.49px;top:55.92px;width:21.61px;height:4px;background:rgba(190,255,238,.82);"></div><div style="left:146.5px;top:55.92px;width:19.89px;height:4px;background:rgba(190,255,238,.82);"></div><div style="left:180.58px;top:55.92px;width:19.89px;height:4px;background:rgba(190,255,238,.82);"></div><div style="left:214.78px;top:55.92px;width:21.88px;height:4px;background:rgba(190,255,238,.82);"></div><div style="left:100.5px;top:50.23px;width:11.8px;height:4px;background:rgba(190,255,238,.82);"></div><div style="left:234.67px;top:50.23px;width:13.92px;height:4px;background:rgba(190,255,238,.82);"></div><div style="left:268.88px;top:50.23px;width:13.92px;height:4px;background:rgba(190,255,238,.82);"></div><div style="left:282.8px;top:42.03px;width:20.15px;height:4px;background:rgba(190,255,238,.82);"></div></div></div><div style="left:1617.5px;top:709.5px;width:298.8px;height:40px;overflow:hidden"><div style="left:9px;top:7.27px;font-size:21.3px;line-height:21.3px;color:#fff;letter-spacing:0.65px;white-space:nowrap;-webkit-text-stroke:0.51px;">Ocean Bass</div></div><div style="left:1917.5px;top:705.7px;width:308.6px;height:83.1px;background:#00ffcc;border:2px solid #0b0b0b;border-radius:9px;overflow:hidden;"><div style="left:-0.200px;top:-0.200px;width:305px;height:80px"><div style="left:0px;top:66.1px;width:4.01px;height:4px;background:rgba(190,255,238,.82);"></div><div style="left:32.72px;top:66.1px;width:5.74px;height:4px;background:rgba(190,255,238,.82);"></div><div style="left:66.77px;top:66.1px;width:6.01px;height:4px;background:rgba(190,255,238,.82);"></div><div style="left:113.25px;top:66.1px;width:20.03px;height:4px;background:rgba(190,255,238,.82);"></div><div style="left:137.55px;top:66.1px;width:5.74px;height:4px;background:rgba(190,255,238,.82);"></div><div style="left:167.6px;top:66.1px;width:7.34px;height:4px;background:rgba(190,255,238,.82);"></div><div style="left:202.32px;top:66.1px;width:7.75px;height:4px;background:rgba(190,255,238,.82);"></div><div style="left:250.66px;top:66.1px;width:19.76px;height:4px;background:rgba(190,255,238,.82);"></div><div style="left:4.01px;top:60.15px;width:6.28px;height:4px;background:rgba(190,255,238,.82);"></div><div style="left:38.46px;top:60.15px;width:7.88px;height:4px;background:rgba(190,255,238,.82);"></div><div style="left:72.78px;top:60.15px;width:6.01px;height:4px;background:rgba(190,255,238,.82);"></div><div style="left:141.56px;top:60.15px;width:6.01px;height:4px;background:rgba(190,255,238,.82);"></div><div style="left:176.95px;top:60.15px;width:4.94px;height:4px;background:rgba(190,255,238,.82);"></div><div style="left:210.33px;top:60.15px;width:6.01px;height:4px;background:rgba(190,255,238,.82);"></div><div style="left:10.28px;top:55.92px;width:20.03px;height:4px;background:rgba(190,255,238,.82);"></div><div style="left:44.74px;top:55.92px;width:19.76px;height:4px;background:rgba(190,255,238,.82);"></div><div style="left:79.06px;top:55.92px;width:21.77px;height:4px;background:rgba(190,255,238,.82);"></div><div style="left:147.57px;top:55.92px;width:20.03px;height:4px;background:rgba(190,255,238,.82);"></div><div style="left:181.89px;top:55.92px;width:20.03px;height:4px;background:rgba(190,255,238,.82);"></div><div style="left:216.34px;top:55.92px;width:22.03px;height:4px;background:rgba(190,255,238,.82);"></div><div style="left:101.23px;top:50.23px;width:11.89px;height:4px;background:rgba(190,255,238,.82);"></div><div style="left:236.37px;top:50.23px;width:14.02px;height:4px;background:rgba(190,255,238,.82);"></div><div style="left:270.83px;top:50.23px;width:14.02px;height:4px;background:rgba(190,255,238,.82);"></div><div style="left:284.85px;top:42.03px;width:20.3px;height:4px;background:rgba(190,255,238,.82);"></div></div></div><div style="left:1921.3px;top:709.5px;width:301px;height:40px;overflow:hidden"><div style="left:9px;top:7.27px;font-size:21.3px;line-height:21.3px;color:#fff;letter-spacing:0.65px;white-space:nowrap;-webkit-text-stroke:0.51px;">Ocean Bass</div></div><div style="left:2223.7px;top:705.7px;width:306.6px;height:83.1px;background:#00ffcc;border:2px solid #0b0b0b;border-radius:9px;overflow:hidden;"><div style="left:-0.200px;top:-0.200px;width:303px;height:80px"><div style="left:0px;top:66.1px;width:3.98px;height:4px;background:rgba(190,255,238,.82);"></div><div style="left:32.5px;top:66.1px;width:5.7px;height:4px;background:rgba(190,255,238,.82);"></div><div style="left:66.33px;top:66.1px;width:5.97px;height:4px;background:rgba(190,255,238,.82);"></div><div style="left:112.5px;top:66.1px;width:19.9px;height:4px;background:rgba(190,255,238,.82);"></div><div style="left:136.65px;top:66.1px;width:5.7px;height:4px;background:rgba(190,255,238,.82);"></div><div style="left:166.5px;top:66.1px;width:7.3px;height:4px;background:rgba(190,255,238,.82);"></div><div style="left:200.99px;top:66.1px;width:7.69px;height:4px;background:rgba(190,255,238,.82);"></div><div style="left:249.02px;top:66.1px;width:19.64px;height:4px;background:rgba(190,255,238,.82);"></div><div style="left:3.98px;top:60.15px;width:6.24px;height:4px;background:rgba(190,255,238,.82);"></div><div style="left:38.21px;top:60.15px;width:7.83px;height:4px;background:rgba(190,255,238,.82);"></div><div style="left:72.3px;top:60.15px;width:5.97px;height:4px;background:rgba(190,255,238,.82);"></div><div style="left:140.63px;top:60.15px;width:5.97px;height:4px;background:rgba(190,255,238,.82);"></div><div style="left:175.79px;top:60.15px;width:4.91px;height:4px;background:rgba(190,255,238,.82);"></div><div style="left:208.95px;top:60.15px;width:5.97px;height:4px;background:rgba(190,255,238,.82);"></div><div style="left:10.22px;top:55.92px;width:19.9px;height:4px;background:rgba(190,255,238,.82);"></div><div style="left:44.44px;top:55.92px;width:19.64px;height:4px;background:rgba(190,255,238,.82);"></div><div style="left:78.54px;top:55.92px;width:21.63px;height:4px;background:rgba(190,255,238,.82);"></div><div style="left:146.6px;top:55.92px;width:19.9px;height:4px;background:rgba(190,255,238,.82);"></div><div style="left:180.7px;top:55.92px;width:19.9px;height:4px;background:rgba(190,255,238,.82);"></div><div style="left:214.92px;top:55.92px;width:21.89px;height:4px;background:rgba(190,255,238,.82);"></div><div style="left:100.56px;top:50.23px;width:11.81px;height:4px;background:rgba(190,255,238,.82);"></div><div style="left:234.82px;top:50.23px;width:13.93px;height:4px;background:rgba(190,255,238,.82);"></div><div style="left:269.05px;top:50.23px;width:13.93px;height:4px;background:rgba(190,255,238,.82);"></div><div style="left:282.98px;top:42.03px;width:20.17px;height:4px;background:rgba(190,255,238,.82);"></div></div></div><div style="left:2227.5px;top:709.5px;width:299px;height:40px;overflow:hidden"><div style="left:9px;top:7.27px;font-size:21.3px;line-height:21.3px;color:#fff;letter-spacing:0.65px;white-space:nowrap;-webkit-text-stroke:0.51px;">Ocean Bass</div></div><div style="left:2528px;top:705.7px;width:308.3px;height:83.1px;background:#00ffcc;border:2px solid #0b0b0b;border-radius:9px;overflow:hidden;"><div style="left:-0.200px;top:-0.200px;width:304.7px;height:80px"><div style="left:0px;top:66.1px;width:4px;height:4px;background:rgba(190,255,238,.82);"></div><div style="left:32.69px;top:66.1px;width:5.74px;height:4px;background:rgba(190,255,238,.82);"></div><div style="left:66.71px;top:66.1px;width:6px;height:4px;background:rgba(190,255,238,.82);"></div><div style="left:113.13px;top:66.1px;width:20.01px;height:4px;background:rgba(190,255,238,.82);"></div><div style="left:137.42px;top:66.1px;width:5.74px;height:4px;background:rgba(190,255,238,.82);"></div><div style="left:167.43px;top:66.1px;width:7.34px;height:4px;background:rgba(190,255,238,.82);"></div><div style="left:202.12px;top:66.1px;width:7.74px;height:4px;background:rgba(190,255,238,.82);"></div><div style="left:250.42px;top:66.1px;width:19.75px;height:4px;background:rgba(190,255,238,.82);"></div><div style="left:4px;top:60.15px;width:6.27px;height:4px;background:rgba(190,255,238,.82);"></div><div style="left:38.42px;top:60.15px;width:7.87px;height:4px;background:rgba(190,255,238,.82);"></div><div style="left:72.71px;top:60.15px;width:6px;height:4px;background:rgba(190,255,238,.82);"></div><div style="left:141.42px;top:60.15px;width:6px;height:4px;background:rgba(190,255,238,.82);"></div><div style="left:176.77px;top:60.15px;width:4.94px;height:4px;background:rgba(190,255,238,.82);"></div><div style="left:210.13px;top:60.15px;width:6px;height:4px;background:rgba(190,255,238,.82);"></div><div style="left:10.27px;top:55.92px;width:20.01px;height:4px;background:rgba(190,255,238,.82);"></div><div style="left:44.69px;top:55.92px;width:19.75px;height:4px;background:rgba(190,255,238,.82);"></div><div style="left:78.98px;top:55.92px;width:21.75px;height:4px;background:rgba(190,255,238,.82);"></div><div style="left:147.42px;top:55.92px;width:20.01px;height:4px;background:rgba(190,255,238,.82);"></div><div style="left:181.71px;top:55.92px;width:20.01px;height:4px;background:rgba(190,255,238,.82);"></div><div style="left:216.13px;top:55.92px;width:22.01px;height:4px;background:rgba(190,255,238,.82);"></div><div style="left:101.13px;top:50.23px;width:11.87px;height:4px;background:rgba(190,255,238,.82);"></div><div style="left:236.14px;top:50.23px;width:14.01px;height:4px;background:rgba(190,255,238,.82);"></div><div style="left:270.56px;top:50.23px;width:14.01px;height:4px;background:rgba(190,255,238,.82);"></div><div style="left:284.57px;top:42.03px;width:20.28px;height:4px;background:rgba(190,255,238,.82);"></div></div></div><div style="left:2531.8px;top:709.5px;width:300.7px;height:40px;overflow:hidden"><div style="left:9px;top:7.27px;font-size:21.3px;line-height:21.3px;color:#fff;letter-spacing:0.65px;white-space:nowrap;-webkit-text-stroke:0.51px;">Ocean Bass</div></div><div style="left:1443.8px;top:789.7px;width:172.2px;height:83.1px;background:#00ff94;border:2px solid #0b0b0b;border-radius:9px;overflow:hidden;"><div style="left:-0.200px;top:-0.200px;width:168.6px;height:80px"></div></div><div style="left:1447.6px;top:793.5px;width:164.6px;height:40px;overflow:hidden"><div style="left:9px;top:7.27px;font-size:21.3px;line-height:21.3px;color:#fff;letter-spacing:0.9px;white-space:nowrap;-webkit-text-stroke:0.51px;">African Kit</div></div><div style="left:1613.7px;top:789.7px;width:306.4px;height:83.1px;background:#00ff94;border:2px solid #0b0b0b;border-radius:9px;overflow:hidden;"><div style="left:-0.200px;top:-0.200px;width:302.8px;height:80px"></div></div><div style="left:1617.5px;top:793.5px;width:298.8px;height:40px;overflow:hidden"><div style="left:9px;top:7.27px;font-size:21.3px;line-height:21.3px;color:#fff;letter-spacing:0.9px;white-space:nowrap;-webkit-text-stroke:0.51px;">African Kit</div></div><div style="left:1917.5px;top:789.7px;width:138.8px;height:83.1px;background:#00ff94;border:2px solid #0b0b0b;border-radius:9px;overflow:hidden;"><div style="left:-0.200px;top:-0.200px;width:135.2px;height:80px"></div></div><div style="left:1921.3px;top:793.5px;width:131.2px;height:40px;overflow:hidden"><div style="left:9px;top:7.27px;font-size:21.3px;line-height:21.3px;color:#fff;letter-spacing:0.9px;white-space:nowrap;-webkit-text-stroke:0.51px;">African Kit</div></div><div style="left:2053.7px;top:789.7px;width:172.4px;height:83.1px;background:#00ff94;border:2px solid #0b0b0b;border-radius:9px;overflow:hidden;"><div style="left:-0.200px;top:-0.200px;width:168.8px;height:80px"></div></div><div style="left:2057.5px;top:793.5px;width:164.8px;height:40px;overflow:hidden"><div style="left:9px;top:7.27px;font-size:21.3px;line-height:21.3px;color:#fff;letter-spacing:0.9px;white-space:nowrap;-webkit-text-stroke:0.51px;">African Kit</div></div><div style="left:2223.7px;top:789.7px;width:306.6px;height:83.1px;background:#00ff94;border:2px solid #0b0b0b;border-radius:9px;overflow:hidden;"><div style="left:-0.200px;top:-0.200px;width:303px;height:80px"></div></div><div style="left:2227.5px;top:793.5px;width:299px;height:40px;overflow:hidden"><div style="left:9px;top:7.27px;font-size:21.3px;line-height:21.3px;color:#fff;letter-spacing:0.9px;white-space:nowrap;-webkit-text-stroke:0.51px;">African Kit</div></div><div style="left:2528px;top:789.7px;width:308.3px;height:83.1px;background:#00ff94;border:2px solid #0b0b0b;border-radius:9px;overflow:hidden;"><div style="left:-0.200px;top:-0.200px;width:304.7px;height:80px"></div></div><div style="left:2531.8px;top:793.5px;width:300.7px;height:40px;overflow:hidden"><div style="left:9px;top:7.27px;font-size:21.3px;line-height:21.3px;color:#fff;letter-spacing:0.9px;white-space:nowrap;-webkit-text-stroke:0.51px;">African Kit</div></div></div></div><svg style="position:absolute;left:1138px;top:190.5px;" width="1734" height="636" viewBox="1138 190.500 1734 636"><path d="M1777.300 229a4 4 0 0 1 4-4h17.400a4 4 0 0 1 4 4v9.500l-11.500 13h-2.400l-11.500-13z" fill="rgba(78,90,128,.88)"/><path d="M1790 236v591" stroke="#1d2650" stroke-width="1.600"/></svg><svg style="position:absolute;left:469px;top:134.5px;" width="2403" height="130" viewBox="469 134.500 2403 130"><path d="M504.600 157.800l7.800-9.500 7.800 9.500M512.400 148.800v7c0 10.500 4.500 15.500 13.500 15" fill="none" stroke="#9a9a9a" stroke-width="2"/><path d="M655 159l7.5 8 7.5 -8" fill="none" stroke="#7a7a7a" stroke-width="2"/><path d="M846.5 159l7.5 8 7.5 -8" fill="none" stroke="#7a7a7a" stroke-width="2"/><path d="M980 159l7.5 8 7.5 -8" fill="none" stroke="#7a7a7a" stroke-width="2"/><rect x="1047" y="149.3" width="5.800" height="5.800" fill="#3a3a3a"/><rect x="1055.9" y="149.3" width="5.800" height="5.800" fill="#3a3a3a"/><rect x="1064.8" y="149.3" width="5.800" height="5.800" fill="#3a3a3a"/><rect x="1047" y="158.2" width="5.800" height="5.800" fill="#3a3a3a"/><rect x="1055.9" y="158.2" width="5.800" height="5.800" fill="#3a3a3a"/><rect x="1064.8" y="158.2" width="5.800" height="5.800" fill="#3a3a3a"/><rect x="1047" y="167.1" width="5.800" height="5.800" fill="#3a3a3a"/><rect x="1055.9" y="167.1" width="5.800" height="5.800" fill="#3a3a3a"/><rect x="1064.8" y="167.1" width="5.800" height="5.800" fill="#3a3a3a"/><rect x="1105.5" y="149.3" width="9" height="5.800" fill="#23272f"/><rect x="1119" y="149.3" width="23" height="5.800" fill="#23272f"/><rect x="1105.5" y="158.2" width="22" height="5.800" fill="#23272f"/><rect x="1132" y="158.2" width="10" height="5.800" fill="#23272f"/><rect x="1105.5" y="167.1" width="36.5" height="5.800" fill="#23272f"/><path d="M1182 169h8M1196.500 169l14.500-16M1217 153h9" stroke="#3a3a3a" stroke-width="2" fill="none"/><circle cx="1197" cy="169.300" r="3.800" fill="#3a3a3a"/><circle cx="1211.500" cy="152.500" r="3.800" fill="#3a3a3a"/><path d="M1249 149c11 1 15 7 20 12.500s9 11 20 12V149c-11 1-15 7-20 12.500s-9 11-20 12z" fill="none" stroke="#3a3a3a" stroke-width="1.800"/><path d="M1254.500 158.500v5.500M1258 156v10.500M1261.500 159v4.500M1276.500 159v4.500M1280 156v10.500M1283.500 158.500v5.500" stroke="#3a3a3a" stroke-width="1.600"/><path d="M1332.500 154.500l7 6.500-7 6.500M1369.500 154.500l-7 6.500 7 6.500" fill="none" stroke="#3a3a3a" stroke-width="2"/><path d="M1344 148.500h14l-5.800 8.500v17h-2.400v-17z" fill="#3a3a3a"/><path d="M1436.500 149.500l2.500 9.500 19.500 15.500 4.500-5.500-19-16z" fill="none" stroke="#3a3a3a" stroke-width="1.800"/><path d="M1455 171.500l4.500-5.500 3.500 3-4.500 5.500z" fill="#3a3a3a"/><path d="M1477.5 159l7.5 8 7.5 -8" fill="none" stroke="#7a7a7a" stroke-width="2"/><path d="M1524.500 161h25M1537 148.500v25" stroke="#3a3a3a" stroke-width="1.600"/><path d="M1565 159l7.5 8 7.5 -8" fill="none" stroke="#7a7a7a" stroke-width="2"/><path d="M1986.1 156l6.500-7.500 6.500 7.500M1986.1 165l6.500 7.500 6.500-7.500" fill="none" stroke="#333" stroke-width="2.200"/><path d="M2284.3 156l6.500-7.500 6.500 7.500M2284.3 165l6.500 7.500 6.500-7.500" fill="none" stroke="#333" stroke-width="2.200"/><path d="M2341 160.2v1.6M2345.5 158v6M2350 155v12M2354.5 152v18M2360.5 148v26M2366.5 152v18M2371 155v12M2375.5 158v6M2380 160.2v1.6" stroke="#3a3a3a" stroke-width="1.800" stroke-linecap="round"/><path d="M2429.500 149h26M2429.500 173h26M2442.500 152.500v17M2437 158l5.500-5.500 5.500 5.500M2437 164l5.500 5.500 5.500-5.500" fill="none" stroke="#3a3a3a" stroke-width="1.800"/><path d="M2494.500 148.500v25M2519.500 148.500v25M2498.500 161h17M2503.500 155.500l-5.500 5.500 5.500 5.500M2510.500 155.500l5.500 5.500-5.500 5.500" fill="none" stroke="#3a3a3a" stroke-width="1.800"/><path d="M2578.600 150v22M2573 156l5.600-6 5.600 6M2573 166l5.600 6 5.600-6" fill="none" stroke="#3a3a3a" stroke-width="1.800"/><path d="M2714.500 161h25M2720.500 155l-6 6 6 6M2733.500 155l6 6-6 6" fill="none" stroke="#3a3a3a" stroke-width="1.800"/><path d="M2605.5 161.800h82" stroke="#9b9b9b" stroke-width="5" stroke-linecap="round"/><path d="M2604 145.500v3.500" stroke="#8a8a8a" stroke-width="1.500"/><path d="M2611 145.500v3.500" stroke="#8a8a8a" stroke-width="1.500"/><path d="M2618 145.500v3.500" stroke="#8a8a8a" stroke-width="1.500"/><path d="M2634.5 145.500v3.500" stroke="#8a8a8a" stroke-width="1.500"/><path d="M2660 145.500v3.500" stroke="#8a8a8a" stroke-width="1.500"/><path d="M2688.5 145.500v3.500" stroke="#8a8a8a" stroke-width="1.500"/><path d="M2636.6 149.500l8.500 8.500v8.500a3 3 0 0 1-3 3h-11a3 3 0 0 1-3-3v-8.500z" fill="#2c2c2c"/><path d="M2754.5 161.800h84" stroke="#9b9b9b" stroke-width="5" stroke-linecap="round"/><path d="M2754 145.500v3.500" stroke="#8a8a8a" stroke-width="1.500"/><path d="M2761 145.500v3.500" stroke="#8a8a8a" stroke-width="1.500"/><path d="M2768 145.500v3.500" stroke="#8a8a8a" stroke-width="1.500"/><path d="M2784.5 145.500v3.500" stroke="#8a8a8a" stroke-width="1.500"/><path d="M2810 145.500v3.500" stroke="#8a8a8a" stroke-width="1.500"/><path d="M2838.5 145.500v3.500" stroke="#8a8a8a" stroke-width="1.500"/><path d="M2760.6 149.500l8.500 8.500v8.500a3 3 0 0 1-3 3h-11a3 3 0 0 1-3-3v-8.500z" fill="#2c2c2c"/><path d="M503 223h24M515 211v24" stroke="#222" stroke-width="2.200"/><rect x="581.500" y="210" width="23" height="18.500" rx="2" fill="#2e2e2e"/><path d="M587.500 219.200h11M593 213.700v11" stroke="#e8e8e8" stroke-width="2"/><path d="M608.500 218.500h4.500v15.500h-22v-2.500" fill="none" stroke="#2e2e2e" stroke-width="1.800"/><rect x="1029" y="211" width="24.500" height="24" fill="none" stroke="#b9bbbb" stroke-width="1.500"/><path d="M1029 211h24.500v5h-24.500z" fill="#b9bbbb"/><path d="M1035.500 222.500l5.700 5 5.700-5" fill="none" stroke="#b9bbbb" stroke-width="1.600"/><path d="M1110.800 216.500V234L1101.500 225.300Z" fill="none" stroke="#d8d8d8" stroke-width="1.700"/><path d="M1116.300 215V235.600L1127.600 225.300Z" fill="#d8d8d8"/></svg></div></div><div style="left:2858.5px;top:1778px;width:19.3px;height:19.6px;background:#8e8e8e;"></div><div style="left:463.5px;top:846.5px;width:2412.2px;height:949.3px;background:#fff;border:2px solid #0a0a0a;border-radius:9px 9px 17px 9px;"></div><div style="left:465.500px;top:848.500px;width:2408.200px;height:945.300px;overflow:hidden;border-radius:7px 7px 15px 7px"><div style="left:-465.500px;top:-848.500px;width:2880px;height:1800px"><div style="left:482px;top:856.2px;width:65.4px;height:41.3px;background:#efefed;border:1.5px solid #d8d8d6;border-radius:7px;box-shadow:0 1px 1px rgba(0,0,0,.12);"></div><div style="left:564px;top:856.2px;width:421.6px;height:41.3px;background:linear-gradient(#e6e6e4,#d8d8d6);border:1.5px solid #c3c3c1;border-radius:7px;box-shadow:0 1px 1.5px rgba(0,0,0,.28);"></div><div style="left:683.7px;top:857.2px;width:1.6px;height:39.3px;background:#c0c0be;"></div><div style="left:852.4px;top:857.2px;width:1.6px;height:39.3px;background:#c0c0be;"></div><div style="left:586.3px;top:864.21px;font-size:25.5px;line-height:25.5px;color:#111;letter-spacing:0.51px;white-space:nowrap;-webkit-text-stroke:0.36px;">Edit</div><div style="left:706.7px;top:864.21px;font-size:25.5px;line-height:25.5px;color:#111;letter-spacing:0.77px;white-space:nowrap;-webkit-text-stroke:0.36px;">Options</div><div style="left:875px;top:864.21px;font-size:25.5px;line-height:25.5px;color:#111;letter-spacing:0.37px;white-space:nowrap;-webkit-text-stroke:0.36px;">View</div><div style="left:1397.6px;top:856.2px;width:340px;height:41.3px;background:linear-gradient(#e6e6e4,#d8d8d6);border:1.5px solid #c3c3c1;border-radius:7px;box-shadow:0 1px 1.5px rgba(0,0,0,.28);"></div><div style="left:1525.7px;top:856.2px;width:128.3px;height:41.3px;background:#43517b;"></div><div style="left:1424.68px;top:865.01px;font-size:25.5px;line-height:25.5px;color:#2a2a2a;letter-spacing:0.35px;white-space:nowrap;-webkit-text-stroke:0.36px;">Single</div><div style="left:1551.62px;top:865.01px;font-size:25.5px;line-height:25.5px;color:#14161f;letter-spacing:0.24px;white-space:nowrap;-webkit-text-stroke:0.36px;">Tracks</div><div style="left:1681.61px;top:865.01px;font-size:25.5px;line-height:25.5px;color:#2a2a2a;letter-spacing:0.22px;white-space:nowrap;-webkit-text-stroke:0.36px;">All</div><div style="left:1754.5px;top:856.2px;width:957.2px;height:41.3px;background:#43517b;border:1.5px solid #354168;border-radius:7px;box-shadow:0 1px 1.5px rgba(0,0,0,.28);"></div><div style="left:1780.88px;top:865.01px;font-size:25.5px;line-height:25.5px;color:#14161f;letter-spacing:0.56px;white-space:nowrap;-webkit-text-stroke:0.36px;">Audio</div><div style="left:1901.49px;top:865.01px;font-size:25.5px;line-height:25.5px;color:#14161f;letter-spacing:0.47px;white-space:nowrap;-webkit-text-stroke:0.36px;">Inst</div><div style="left:1873.9px;top:857.2px;width:1.6px;height:39.3px;background:#b4b8c2;"></div><div style="left:1996.58px;top:865.01px;font-size:25.5px;line-height:25.5px;color:#14161f;letter-spacing:0.35px;white-space:nowrap;-webkit-text-stroke:0.36px;">Aux</div><div style="left:1970px;top:857.2px;width:1.6px;height:39.3px;background:#b4b8c2;"></div><div style="left:2093.01px;top:865.01px;font-size:25.5px;line-height:25.5px;color:#14161f;letter-spacing:0.02px;white-space:nowrap;-webkit-text-stroke:0.36px;">Bus</div><div style="left:2066.2px;top:857.2px;width:1.6px;height:39.3px;background:#b4b8c2;"></div><div style="left:2188.73px;top:865.01px;font-size:25.5px;line-height:25.5px;color:#14161f;letter-spacing:0.86px;white-space:nowrap;-webkit-text-stroke:0.36px;">Input</div><div style="left:2162.2px;top:857.2px;width:1.6px;height:39.3px;background:#b4b8c2;"></div><div style="left:2301.84px;top:865.01px;font-size:25.5px;line-height:25.5px;color:#14161f;letter-spacing:1.07px;white-space:nowrap;-webkit-text-stroke:0.36px;">Output</div><div style="left:2273.8px;top:857.2px;width:1.6px;height:39.3px;background:#b4b8c2;"></div><div style="left:2437.68px;top:865.01px;font-size:25.5px;line-height:25.5px;color:#14161f;letter-spacing:0.35px;white-space:nowrap;-webkit-text-stroke:0.36px;">Master/VCA</div><div style="left:2410.2px;top:857.2px;width:1.6px;height:39.3px;background:#b4b8c2;"></div><div style="left:2631.37px;top:865.01px;font-size:25.5px;line-height:25.5px;color:#14161f;letter-spacing:0.04px;white-space:nowrap;-webkit-text-stroke:0.36px;">MIDI</div><div style="left:2604.2px;top:857.2px;width:1.6px;height:39.3px;background:#b4b8c2;"></div><div style="left:2728.4px;top:856.2px;width:129.6px;height:41.3px;background:linear-gradient(#e6e6e4,#d8d8d6);border:1.5px solid #c3c3c1;border-radius:7px;box-shadow:0 1px 1.5px rgba(0,0,0,.28);"></div><div style="left:2728.4px;top:856.2px;width:64px;height:41.3px;background:#43517b;border-radius:7px 0 0 7px;"></div><svg style="position:absolute;left:469px;top:850px;" width="2403" height="54" viewBox="469 850 2403 54"><path d="M504.600 873.500l7.800-9.500 7.800 9.500M512.400 864.500v7c0 10.500 4.500 15.500 13.500 15" fill="none" stroke="#9a9a9a" stroke-width="2"/><path d="M655.3 875l7.5 8 7.5 -8" fill="none" stroke="#7a7a7a" stroke-width="2"/><path d="M823.5 875l7.5 8 7.5 -8" fill="none" stroke="#7a7a7a" stroke-width="2"/><path d="M957.5 875l7.5 8 7.5 -8" fill="none" stroke="#7a7a7a" stroke-width="2"/><rect x="2748.500" y="865" width="24.500" height="23.500" fill="none" stroke="#3d3b3d" stroke-width="1.800"/><path d="M2756.600 865v23.500M2764.800 865v23.500" stroke="#3d3b3d" stroke-width="1.600"/><rect x="2813" y="865" width="24.500" height="23.500" fill="none" stroke="#222" stroke-width="1.800"/><path d="M2825.300 865v23.500" stroke="#222" stroke-width="1.800"/></svg><div style="left:466px;top:904.2px;width:2408px;height:1.8px;background:#0a0a0a;"></div><div class="nv" style="left:603.7px;top:923px;width:80.2px;height:35.7px;"></div><div style="left:615.13px;top:930.3px;font-size:22.5px;line-height:22.5px;color:#fff;letter-spacing:-0.05px;white-space:nowrap;">Bus 5</div><div class="nv" style="left:603.7px;top:963px;width:80.2px;height:35.7px;"></div><div style="left:615.13px;top:970.3px;font-size:22.5px;line-height:22.5px;color:#fff;letter-spacing:-0.05px;white-space:nowrap;">Bus 6</div><div class="sl" style="left:603.7px;top:1003.3px;width:80.2px;height:17.3px;background:#dcdcdc;border-color:#cbcbcb;"></div><div class="ol" style="left:603.7px;top:1037px;width:116px;height:35.8px;"></div><div style="left:633.55px;top:1044.35px;font-size:22.5px;line-height:22.5px;color:#fff;letter-spacing:-0.31px;white-space:nowrap;">Bus 7</div><div class="gp" style="left:606px;top:1082.9px;width:112px;height:33.8px;background:#e6e6e6;border-color:#d0d0d0;border-radius:2px;"></div><div class="rd" style="left:603.7px;top:1128.8px;width:116px;height:35.9px;"></div><div style="left:636.51px;top:1136.54px;font-size:21.8px;line-height:21.8px;color:#46ee66;letter-spacing:-0.58px;white-space:nowrap;">Read</div><div style="left:606px;top:1337px;width:54px;height:33.8px;background:#878987;border-radius:2px;"></div><div style="left:664.1px;top:1337px;width:53.9px;height:33.8px;background:#878987;border-radius:2px;"></div><div style="left:612.65px;top:1344.83px;font-size:21.7px;line-height:21.7px;color:#383838;letter-spacing:1.1px;white-space:nowrap;">-3.4</div><div style="left:668.96px;top:1410.7px;font-size:15px;line-height:15px;color:#3a3a3e;letter-spacing:0.2px;white-space:nowrap;">0</div><div style="left:668.96px;top:1429.1px;font-size:15px;line-height:15px;color:#3a3a3e;letter-spacing:0.2px;white-space:nowrap;">3</div><div style="left:668.96px;top:1446.9px;font-size:15px;line-height:15px;color:#3a3a3e;letter-spacing:0.2px;white-space:nowrap;">6</div><div style="left:668.96px;top:1464.7px;font-size:15px;line-height:15px;color:#3a3a3e;letter-spacing:0.2px;white-space:nowrap;">9</div><div style="left:660.41px;top:1483px;font-size:15px;line-height:15px;color:#3a3a3e;letter-spacing:0.2px;white-space:nowrap;">12</div><div style="left:660.41px;top:1500.7px;font-size:15px;line-height:15px;color:#3a3a3e;letter-spacing:0.2px;white-space:nowrap;">15</div><div style="left:660.41px;top:1518.5px;font-size:15px;line-height:15px;color:#3a3a3e;letter-spacing:0.2px;white-space:nowrap;">18</div><div style="left:660.41px;top:1536.9px;font-size:15px;line-height:15px;color:#3a3a3e;letter-spacing:0.2px;white-space:nowrap;">21</div><div style="left:660.41px;top:1554.7px;font-size:15px;line-height:15px;color:#3a3a3e;letter-spacing:0.2px;white-space:nowrap;">24</div><div style="left:660.41px;top:1578.7px;font-size:15px;line-height:15px;color:#3a3a3e;letter-spacing:0.2px;white-space:nowrap;">30</div><div style="left:660.41px;top:1598.7px;font-size:15px;line-height:15px;color:#3a3a3e;letter-spacing:0.2px;white-space:nowrap;">35</div><div style="left:660.41px;top:1618.7px;font-size:15px;line-height:15px;color:#3a3a3e;letter-spacing:0.2px;white-space:nowrap;">40</div><div style="left:660.41px;top:1638.7px;font-size:15px;line-height:15px;color:#3a3a3e;letter-spacing:0.2px;white-space:nowrap;">45</div><div style="left:660.41px;top:1658.5px;font-size:15px;line-height:15px;color:#3a3a3e;letter-spacing:0.2px;white-space:nowrap;">50</div><div style="left:660.41px;top:1678.5px;font-size:15px;line-height:15px;color:#3a3a3e;letter-spacing:0.2px;white-space:nowrap;">60</div><div style="left:664px;top:1699.2px;width:55.8px;height:35.5px;background:#6b6b63;border:1.5px solid #565650;border-right:3px solid #4c4c44;border-radius:8px 0 0 8px;"></div><div style="left:690.4px;top:1700.4px;width:1.8px;height:33.4px;background:#56564e;"></div><div style="left:667.93px;top:1703.77px;font-size:26.5px;line-height:26.5px;color:#ff8a1c;letter-spacing:0px;white-space:nowrap;">R</div><div style="left:701.32px;top:1703.77px;font-size:26.5px;line-height:26.5px;color:#f0107c;letter-spacing:0px;white-space:nowrap;-webkit-text-stroke:0.53px;">I</div><div class="ol" style="left:604px;top:1739px;width:56px;height:35.6px;border-radius:8px;"></div><div style="left:620.55px;top:1743.22px;font-size:27.5px;line-height:27.5px;color:#b4b4b2;letter-spacing:0.96px;white-space:nowrap;">M</div><div class="ol" style="left:664px;top:1739px;width:56px;height:35.6px;border-radius:8px;"></div><div style="left:682.83px;top:1743.22px;font-size:27.5px;line-height:27.5px;color:#16d62c;letter-spacing:0.96px;white-space:nowrap;">S</div><div class="nv" style="left:737.7px;top:923px;width:80.2px;height:35.7px;"></div><div style="left:749.13px;top:930.3px;font-size:22.5px;line-height:22.5px;color:#fff;letter-spacing:-0.05px;white-space:nowrap;">Bus 5</div><div class="nv" style="left:737.7px;top:963px;width:80.2px;height:35.7px;"></div><div style="left:749.13px;top:970.3px;font-size:22.5px;line-height:22.5px;color:#fff;letter-spacing:-0.05px;white-space:nowrap;">Bus 6</div><div class="sl" style="left:737.7px;top:1003.3px;width:80.2px;height:17.3px;background:#dcdcdc;border-color:#cbcbcb;"></div><div class="ol" style="left:737.7px;top:1037px;width:116px;height:35.8px;"></div><div style="left:767.55px;top:1044.35px;font-size:22.5px;line-height:22.5px;color:#fff;letter-spacing:-0.31px;white-space:nowrap;">Bus 7</div><div class="gp" style="left:740px;top:1082.9px;width:112px;height:33.8px;background:#e6e6e6;border-color:#d0d0d0;border-radius:2px;"></div><div class="rd" style="left:737.7px;top:1128.8px;width:116px;height:35.9px;"></div><div style="left:770.51px;top:1136.54px;font-size:21.8px;line-height:21.8px;color:#46ee66;letter-spacing:-0.58px;white-space:nowrap;">Read</div><div style="left:740px;top:1337px;width:54px;height:33.8px;background:#878987;border-radius:2px;"></div><div style="left:798.1px;top:1337px;width:53.9px;height:33.8px;background:#878987;border-radius:2px;"></div><div style="left:746.65px;top:1344.83px;font-size:21.7px;line-height:21.7px;color:#383838;letter-spacing:1.1px;white-space:nowrap;">-3.2</div><div style="left:802.96px;top:1410.7px;font-size:15px;line-height:15px;color:#3a3a3e;letter-spacing:0.2px;white-space:nowrap;">0</div><div style="left:802.96px;top:1429.1px;font-size:15px;line-height:15px;color:#3a3a3e;letter-spacing:0.2px;white-space:nowrap;">3</div><div style="left:802.96px;top:1446.9px;font-size:15px;line-height:15px;color:#3a3a3e;letter-spacing:0.2px;white-space:nowrap;">6</div><div style="left:802.96px;top:1464.7px;font-size:15px;line-height:15px;color:#3a3a3e;letter-spacing:0.2px;white-space:nowrap;">9</div><div style="left:794.41px;top:1483px;font-size:15px;line-height:15px;color:#3a3a3e;letter-spacing:0.2px;white-space:nowrap;">12</div><div style="left:794.41px;top:1500.7px;font-size:15px;line-height:15px;color:#3a3a3e;letter-spacing:0.2px;white-space:nowrap;">15</div><div style="left:794.41px;top:1518.5px;font-size:15px;line-height:15px;color:#3a3a3e;letter-spacing:0.2px;white-space:nowrap;">18</div><div style="left:794.41px;top:1536.9px;font-size:15px;line-height:15px;color:#3a3a3e;letter-spacing:0.2px;white-space:nowrap;">21</div><div style="left:794.41px;top:1554.7px;font-size:15px;line-height:15px;color:#3a3a3e;letter-spacing:0.2px;white-space:nowrap;">24</div><div style="left:794.41px;top:1578.7px;font-size:15px;line-height:15px;color:#3a3a3e;letter-spacing:0.2px;white-space:nowrap;">30</div><div style="left:794.41px;top:1598.7px;font-size:15px;line-height:15px;color:#3a3a3e;letter-spacing:0.2px;white-space:nowrap;">35</div><div style="left:794.41px;top:1618.7px;font-size:15px;line-height:15px;color:#3a3a3e;letter-spacing:0.2px;white-space:nowrap;">40</div><div style="left:794.41px;top:1638.7px;font-size:15px;line-height:15px;color:#3a3a3e;letter-spacing:0.2px;white-space:nowrap;">45</div><div style="left:794.41px;top:1658.5px;font-size:15px;line-height:15px;color:#3a3a3e;letter-spacing:0.2px;white-space:nowrap;">50</div><div style="left:794.41px;top:1678.5px;font-size:15px;line-height:15px;color:#3a3a3e;letter-spacing:0.2px;white-space:nowrap;">60</div><div style="left:798px;top:1699.2px;width:55.8px;height:35.5px;background:#6b6b63;border:1.5px solid #565650;border-right:3px solid #4c4c44;border-radius:8px 0 0 8px;"></div><div style="left:824.4px;top:1700.4px;width:1.8px;height:33.4px;background:#56564e;"></div><div style="left:801.93px;top:1703.77px;font-size:26.5px;line-height:26.5px;color:#ff8a1c;letter-spacing:0px;white-space:nowrap;">R</div><div style="left:835.32px;top:1703.77px;font-size:26.5px;line-height:26.5px;color:#f0107c;letter-spacing:0px;white-space:nowrap;-webkit-text-stroke:0.53px;">I</div><div class="ol" style="left:738px;top:1739px;width:56px;height:35.6px;border-radius:8px;"></div><div style="left:754.55px;top:1743.22px;font-size:27.5px;line-height:27.5px;color:#b4b4b2;letter-spacing:0.96px;white-space:nowrap;">M</div><div class="ol" style="left:798px;top:1739px;width:56px;height:35.6px;border-radius:8px;"></div><div style="left:816.83px;top:1743.22px;font-size:27.5px;line-height:27.5px;color:#16d62c;letter-spacing:0.96px;white-space:nowrap;">S</div><div class="nv" style="left:871.7px;top:923px;width:80.2px;height:35.7px;"></div><div style="left:883.13px;top:930.3px;font-size:22.5px;line-height:22.5px;color:#fff;letter-spacing:-0.05px;white-space:nowrap;">Bus 5</div><div class="nv" style="left:871.7px;top:963px;width:80.2px;height:35.7px;"></div><div style="left:883.13px;top:970.3px;font-size:22.5px;line-height:22.5px;color:#fff;letter-spacing:-0.05px;white-space:nowrap;">Bus 6</div><div class="sl" style="left:871.7px;top:1003.3px;width:80.2px;height:17.3px;background:#dcdcdc;border-color:#cbcbcb;"></div><div class="ol" style="left:871.7px;top:1037px;width:116px;height:35.8px;"></div><div style="left:901.55px;top:1044.35px;font-size:22.5px;line-height:22.5px;color:#fff;letter-spacing:-0.31px;white-space:nowrap;">Bus 7</div><div class="gp" style="left:874px;top:1082.9px;width:112px;height:33.8px;background:#e6e6e6;border-color:#d0d0d0;border-radius:2px;"></div><div class="rd" style="left:871.7px;top:1128.8px;width:116px;height:35.9px;"></div><div style="left:904.51px;top:1136.54px;font-size:21.8px;line-height:21.8px;color:#46ee66;letter-spacing:-0.58px;white-space:nowrap;">Read</div><div style="left:874px;top:1337px;width:54px;height:33.8px;background:#878987;border-radius:2px;"></div><div style="left:932.1px;top:1337px;width:53.9px;height:33.8px;background:#878987;border-radius:2px;"></div><div style="left:880.65px;top:1344.83px;font-size:21.7px;line-height:21.7px;color:#383838;letter-spacing:1.1px;white-space:nowrap;">-2.4</div><div style="left:936.96px;top:1410.7px;font-size:15px;line-height:15px;color:#3a3a3e;letter-spacing:0.2px;white-space:nowrap;">0</div><div style="left:936.96px;top:1429.1px;font-size:15px;line-height:15px;color:#3a3a3e;letter-spacing:0.2px;white-space:nowrap;">3</div><div style="left:936.96px;top:1446.9px;font-size:15px;line-height:15px;color:#3a3a3e;letter-spacing:0.2px;white-space:nowrap;">6</div><div style="left:936.96px;top:1464.7px;font-size:15px;line-height:15px;color:#3a3a3e;letter-spacing:0.2px;white-space:nowrap;">9</div><div style="left:928.41px;top:1483px;font-size:15px;line-height:15px;color:#3a3a3e;letter-spacing:0.2px;white-space:nowrap;">12</div><div style="left:928.41px;top:1500.7px;font-size:15px;line-height:15px;color:#3a3a3e;letter-spacing:0.2px;white-space:nowrap;">15</div><div style="left:928.41px;top:1518.5px;font-size:15px;line-height:15px;color:#3a3a3e;letter-spacing:0.2px;white-space:nowrap;">18</div><div style="left:928.41px;top:1536.9px;font-size:15px;line-height:15px;color:#3a3a3e;letter-spacing:0.2px;white-space:nowrap;">21</div><div style="left:928.41px;top:1554.7px;font-size:15px;line-height:15px;color:#3a3a3e;letter-spacing:0.2px;white-space:nowrap;">24</div><div style="left:928.41px;top:1578.7px;font-size:15px;line-height:15px;color:#3a3a3e;letter-spacing:0.2px;white-space:nowrap;">30</div><div style="left:928.41px;top:1598.7px;font-size:15px;line-height:15px;color:#3a3a3e;letter-spacing:0.2px;white-space:nowrap;">35</div><div style="left:928.41px;top:1618.7px;font-size:15px;line-height:15px;color:#3a3a3e;letter-spacing:0.2px;white-space:nowrap;">40</div><div style="left:928.41px;top:1638.7px;font-size:15px;line-height:15px;color:#3a3a3e;letter-spacing:0.2px;white-space:nowrap;">45</div><div style="left:928.41px;top:1658.5px;font-size:15px;line-height:15px;color:#3a3a3e;letter-spacing:0.2px;white-space:nowrap;">50</div><div style="left:928.41px;top:1678.5px;font-size:15px;line-height:15px;color:#3a3a3e;letter-spacing:0.2px;white-space:nowrap;">60</div><div style="left:932px;top:1699.2px;width:55.8px;height:35.5px;background:#6b6b63;border:1.5px solid #565650;border-right:3px solid #4c4c44;border-radius:8px 0 0 8px;"></div><div style="left:958.4px;top:1700.4px;width:1.8px;height:33.4px;background:#56564e;"></div><div style="left:935.93px;top:1703.77px;font-size:26.5px;line-height:26.5px;color:#ff8a1c;letter-spacing:0px;white-space:nowrap;">R</div><div style="left:969.32px;top:1703.77px;font-size:26.5px;line-height:26.5px;color:#f0107c;letter-spacing:0px;white-space:nowrap;-webkit-text-stroke:0.53px;">I</div><div class="ol" style="left:872px;top:1739px;width:56px;height:35.6px;border-radius:8px;"></div><div style="left:888.55px;top:1743.22px;font-size:27.5px;line-height:27.5px;color:#b4b4b2;letter-spacing:0.96px;white-space:nowrap;">M</div><div class="ol" style="left:932px;top:1739px;width:56px;height:35.6px;border-radius:8px;"></div><div style="left:950.83px;top:1743.22px;font-size:27.5px;line-height:27.5px;color:#16d62c;letter-spacing:0.96px;white-space:nowrap;">S</div><div class="nv" style="left:1005.7px;top:923px;width:80.2px;height:35.7px;"></div><div style="left:1017.13px;top:930.3px;font-size:22.5px;line-height:22.5px;color:#fff;letter-spacing:-0.05px;white-space:nowrap;">Bus 5</div><div class="nv" style="left:1005.7px;top:963px;width:80.2px;height:35.7px;"></div><div style="left:1017.13px;top:970.3px;font-size:22.5px;line-height:22.5px;color:#fff;letter-spacing:-0.05px;white-space:nowrap;">Bus 6</div><div class="sl" style="left:1005.7px;top:1003.3px;width:80.2px;height:17.3px;background:#dcdcdc;border-color:#cbcbcb;"></div><div class="ol" style="left:1005.7px;top:1037px;width:116px;height:35.8px;"></div><div style="left:1035.55px;top:1044.35px;font-size:22.5px;line-height:22.5px;color:#fff;letter-spacing:-0.31px;white-space:nowrap;">Bus 7</div><div class="gp" style="left:1008px;top:1082.9px;width:112px;height:33.8px;background:#e6e6e6;border-color:#d0d0d0;border-radius:2px;"></div><div class="rd" style="left:1005.7px;top:1128.8px;width:116px;height:35.9px;"></div><div style="left:1038.51px;top:1136.54px;font-size:21.8px;line-height:21.8px;color:#46ee66;letter-spacing:-0.58px;white-space:nowrap;">Read</div><div style="left:1008px;top:1337px;width:54px;height:33.8px;background:#878987;border-radius:2px;"></div><div style="left:1066.1px;top:1337px;width:53.9px;height:33.8px;background:#878987;border-radius:2px;"></div><div style="left:1014.65px;top:1344.83px;font-size:21.7px;line-height:21.7px;color:#383838;letter-spacing:1.1px;white-space:nowrap;">-2.6</div><div style="left:1070.96px;top:1410.7px;font-size:15px;line-height:15px;color:#3a3a3e;letter-spacing:0.2px;white-space:nowrap;">0</div><div style="left:1070.96px;top:1429.1px;font-size:15px;line-height:15px;color:#3a3a3e;letter-spacing:0.2px;white-space:nowrap;">3</div><div style="left:1070.96px;top:1446.9px;font-size:15px;line-height:15px;color:#3a3a3e;letter-spacing:0.2px;white-space:nowrap;">6</div><div style="left:1070.96px;top:1464.7px;font-size:15px;line-height:15px;color:#3a3a3e;letter-spacing:0.2px;white-space:nowrap;">9</div><div style="left:1062.41px;top:1483px;font-size:15px;line-height:15px;color:#3a3a3e;letter-spacing:0.2px;white-space:nowrap;">12</div><div style="left:1062.41px;top:1500.7px;font-size:15px;line-height:15px;color:#3a3a3e;letter-spacing:0.2px;white-space:nowrap;">15</div><div style="left:1062.41px;top:1518.5px;font-size:15px;line-height:15px;color:#3a3a3e;letter-spacing:0.2px;white-space:nowrap;">18</div><div style="left:1062.41px;top:1536.9px;font-size:15px;line-height:15px;color:#3a3a3e;letter-spacing:0.2px;white-space:nowrap;">21</div><div style="left:1062.41px;top:1554.7px;font-size:15px;line-height:15px;color:#3a3a3e;letter-spacing:0.2px;white-space:nowrap;">24</div><div style="left:1062.41px;top:1578.7px;font-size:15px;line-height:15px;color:#3a3a3e;letter-spacing:0.2px;white-space:nowrap;">30</div><div style="left:1062.41px;top:1598.7px;font-size:15px;line-height:15px;color:#3a3a3e;letter-spacing:0.2px;white-space:nowrap;">35</div><div style="left:1062.41px;top:1618.7px;font-size:15px;line-height:15px;color:#3a3a3e;letter-spacing:0.2px;white-space:nowrap;">40</div><div style="left:1062.41px;top:1638.7px;font-size:15px;line-height:15px;color:#3a3a3e;letter-spacing:0.2px;white-space:nowrap;">45</div><div style="left:1062.41px;top:1658.5px;font-size:15px;line-height:15px;color:#3a3a3e;letter-spacing:0.2px;white-space:nowrap;">50</div><div style="left:1062.41px;top:1678.5px;font-size:15px;line-height:15px;color:#3a3a3e;letter-spacing:0.2px;white-space:nowrap;">60</div><div style="left:1066px;top:1699.2px;width:55.8px;height:35.5px;background:#6b6b63;border:1.5px solid #565650;border-right:3px solid #4c4c44;border-radius:8px 0 0 8px;"></div><div style="left:1092.4px;top:1700.4px;width:1.8px;height:33.4px;background:#56564e;"></div><div style="left:1069.93px;top:1703.77px;font-size:26.5px;line-height:26.5px;color:#ff8a1c;letter-spacing:0px;white-space:nowrap;">R</div><div style="left:1103.32px;top:1703.77px;font-size:26.5px;line-height:26.5px;color:#f0107c;letter-spacing:0px;white-space:nowrap;-webkit-text-stroke:0.53px;">I</div><div class="ol" style="left:1006px;top:1739px;width:56px;height:35.6px;border-radius:8px;"></div><div style="left:1022.55px;top:1743.22px;font-size:27.5px;line-height:27.5px;color:#b4b4b2;letter-spacing:0.96px;white-space:nowrap;">M</div><div class="ol" style="left:1066px;top:1739px;width:56px;height:35.6px;border-radius:8px;"></div><div style="left:1084.83px;top:1743.22px;font-size:27.5px;line-height:27.5px;color:#16d62c;letter-spacing:0.96px;white-space:nowrap;">S</div><div class="nv" style="left:1139.7px;top:923px;width:80.2px;height:35.7px;"></div><div style="left:1151.13px;top:930.3px;font-size:22.5px;line-height:22.5px;color:#fff;letter-spacing:-0.05px;white-space:nowrap;">Bus 5</div><div class="nv" style="left:1139.7px;top:963px;width:80.2px;height:35.7px;"></div><div style="left:1151.13px;top:970.3px;font-size:22.5px;line-height:22.5px;color:#fff;letter-spacing:-0.05px;white-space:nowrap;">Bus 6</div><div class="sl" style="left:1139.7px;top:1003.3px;width:80.2px;height:17.3px;background:#dcdcdc;border-color:#cbcbcb;"></div><div class="ol" style="left:1139.7px;top:1037px;width:116px;height:35.8px;"></div><div style="left:1169.55px;top:1044.35px;font-size:22.5px;line-height:22.5px;color:#fff;letter-spacing:-0.31px;white-space:nowrap;">Bus 7</div><div class="gp" style="left:1142px;top:1082.9px;width:112px;height:33.8px;background:#e6e6e6;border-color:#d0d0d0;border-radius:2px;"></div><div class="rd" style="left:1139.7px;top:1128.8px;width:116px;height:35.9px;"></div><div style="left:1172.51px;top:1136.54px;font-size:21.8px;line-height:21.8px;color:#46ee66;letter-spacing:-0.58px;white-space:nowrap;">Read</div><div style="left:1142px;top:1337px;width:54px;height:33.8px;background:#878987;border-radius:2px;"></div><div style="left:1200.1px;top:1337px;width:53.9px;height:33.8px;background:#878987;border-radius:2px;"></div><div style="left:1148.65px;top:1344.83px;font-size:21.7px;line-height:21.7px;color:#383838;letter-spacing:1.1px;white-space:nowrap;">-5.9</div><div style="left:1204.96px;top:1410.7px;font-size:15px;line-height:15px;color:#3a3a3e;letter-spacing:0.2px;white-space:nowrap;">0</div><div style="left:1204.96px;top:1429.1px;font-size:15px;line-height:15px;color:#3a3a3e;letter-spacing:0.2px;white-space:nowrap;">3</div><div style="left:1204.96px;top:1446.9px;font-size:15px;line-height:15px;color:#3a3a3e;letter-spacing:0.2px;white-space:nowrap;">6</div><div style="left:1204.96px;top:1464.7px;font-size:15px;line-height:15px;color:#3a3a3e;letter-spacing:0.2px;white-space:nowrap;">9</div><div style="left:1196.41px;top:1483px;font-size:15px;line-height:15px;color:#3a3a3e;letter-spacing:0.2px;white-space:nowrap;">12</div><div style="left:1196.41px;top:1500.7px;font-size:15px;line-height:15px;color:#3a3a3e;letter-spacing:0.2px;white-space:nowrap;">15</div><div style="left:1196.41px;top:1518.5px;font-size:15px;line-height:15px;color:#3a3a3e;letter-spacing:0.2px;white-space:nowrap;">18</div><div style="left:1196.41px;top:1536.9px;font-size:15px;line-height:15px;color:#3a3a3e;letter-spacing:0.2px;white-space:nowrap;">21</div><div style="left:1196.41px;top:1554.7px;font-size:15px;line-height:15px;color:#3a3a3e;letter-spacing:0.2px;white-space:nowrap;">24</div><div style="left:1196.41px;top:1578.7px;font-size:15px;line-height:15px;color:#3a3a3e;letter-spacing:0.2px;white-space:nowrap;">30</div><div style="left:1196.41px;top:1598.7px;font-size:15px;line-height:15px;color:#3a3a3e;letter-spacing:0.2px;white-space:nowrap;">35</div><div style="left:1196.41px;top:1618.7px;font-size:15px;line-height:15px;color:#3a3a3e;letter-spacing:0.2px;white-space:nowrap;">40</div><div style="left:1196.41px;top:1638.7px;font-size:15px;line-height:15px;color:#3a3a3e;letter-spacing:0.2px;white-space:nowrap;">45</div><div style="left:1196.41px;top:1658.5px;font-size:15px;line-height:15px;color:#3a3a3e;letter-spacing:0.2px;white-space:nowrap;">50</div><div style="left:1196.41px;top:1678.5px;font-size:15px;line-height:15px;color:#3a3a3e;letter-spacing:0.2px;white-space:nowrap;">60</div><div style="left:1200px;top:1699.2px;width:55.8px;height:35.5px;background:#6b6b63;border:1.5px solid #565650;border-right:3px solid #4c4c44;border-radius:8px 0 0 8px;"></div><div style="left:1226.4px;top:1700.4px;width:1.8px;height:33.4px;background:#56564e;"></div><div style="left:1203.93px;top:1703.77px;font-size:26.5px;line-height:26.5px;color:#ff8a1c;letter-spacing:0px;white-space:nowrap;">R</div><div style="left:1237.32px;top:1703.77px;font-size:26.5px;line-height:26.5px;color:#f0107c;letter-spacing:0px;white-space:nowrap;-webkit-text-stroke:0.53px;">I</div><div class="ol" style="left:1140px;top:1739px;width:56px;height:35.6px;border-radius:8px;"></div><div style="left:1156.55px;top:1743.22px;font-size:27.5px;line-height:27.5px;color:#b4b4b2;letter-spacing:0.96px;white-space:nowrap;">M</div><div class="ol" style="left:1200px;top:1739px;width:56px;height:35.6px;border-radius:8px;"></div><div style="left:1218.83px;top:1743.22px;font-size:27.5px;line-height:27.5px;color:#16d62c;letter-spacing:0.96px;white-space:nowrap;">S</div><div class="nv" style="left:1273.7px;top:923px;width:80.2px;height:35.7px;"></div><div style="left:1285.13px;top:930.3px;font-size:22.5px;line-height:22.5px;color:#fff;letter-spacing:-0.05px;white-space:nowrap;">Bus 5</div><div class="nv" style="left:1273.7px;top:963px;width:80.2px;height:35.7px;"></div><div style="left:1285.13px;top:970.3px;font-size:22.5px;line-height:22.5px;color:#fff;letter-spacing:-0.05px;white-space:nowrap;">Bus 6</div><div class="sl" style="left:1273.7px;top:1003.3px;width:80.2px;height:17.3px;background:#dcdcdc;border-color:#cbcbcb;"></div><div class="ol" style="left:1273.7px;top:1037px;width:116px;height:35.8px;"></div><div style="left:1303.55px;top:1044.35px;font-size:22.5px;line-height:22.5px;color:#fff;letter-spacing:-0.31px;white-space:nowrap;">Bus 7</div><div class="gp" style="left:1276px;top:1082.9px;width:112px;height:33.8px;background:#e6e6e6;border-color:#d0d0d0;border-radius:2px;"></div><div class="rd" style="left:1273.7px;top:1128.8px;width:116px;height:35.9px;"></div><div style="left:1306.51px;top:1136.54px;font-size:21.8px;line-height:21.8px;color:#46ee66;letter-spacing:-0.58px;white-space:nowrap;">Read</div><div style="left:1276px;top:1337px;width:54px;height:33.8px;background:#878987;border-radius:2px;"></div><div style="left:1334.1px;top:1337px;width:53.9px;height:33.8px;background:#878987;border-radius:2px;"></div><div style="left:1282.65px;top:1344.83px;font-size:21.7px;line-height:21.7px;color:#383838;letter-spacing:1.1px;white-space:nowrap;">-8.4</div><div style="left:1338.96px;top:1410.7px;font-size:15px;line-height:15px;color:#3a3a3e;letter-spacing:0.2px;white-space:nowrap;">0</div><div style="left:1338.96px;top:1429.1px;font-size:15px;line-height:15px;color:#3a3a3e;letter-spacing:0.2px;white-space:nowrap;">3</div><div style="left:1338.96px;top:1446.9px;font-size:15px;line-height:15px;color:#3a3a3e;letter-spacing:0.2px;white-space:nowrap;">6</div><div style="left:1338.96px;top:1464.7px;font-size:15px;line-height:15px;color:#3a3a3e;letter-spacing:0.2px;white-space:nowrap;">9</div><div style="left:1330.41px;top:1483px;font-size:15px;line-height:15px;color:#3a3a3e;letter-spacing:0.2px;white-space:nowrap;">12</div><div style="left:1330.41px;top:1500.7px;font-size:15px;line-height:15px;color:#3a3a3e;letter-spacing:0.2px;white-space:nowrap;">15</div><div style="left:1330.41px;top:1518.5px;font-size:15px;line-height:15px;color:#3a3a3e;letter-spacing:0.2px;white-space:nowrap;">18</div><div style="left:1330.41px;top:1536.9px;font-size:15px;line-height:15px;color:#3a3a3e;letter-spacing:0.2px;white-space:nowrap;">21</div><div style="left:1330.41px;top:1554.7px;font-size:15px;line-height:15px;color:#3a3a3e;letter-spacing:0.2px;white-space:nowrap;">24</div><div style="left:1330.41px;top:1578.7px;font-size:15px;line-height:15px;color:#3a3a3e;letter-spacing:0.2px;white-space:nowrap;">30</div><div style="left:1330.41px;top:1598.7px;font-size:15px;line-height:15px;color:#3a3a3e;letter-spacing:0.2px;white-space:nowrap;">35</div><div style="left:1330.41px;top:1618.7px;font-size:15px;line-height:15px;color:#3a3a3e;letter-spacing:0.2px;white-space:nowrap;">40</div><div style="left:1330.41px;top:1638.7px;font-size:15px;line-height:15px;color:#3a3a3e;letter-spacing:0.2px;white-space:nowrap;">45</div><div style="left:1330.41px;top:1658.5px;font-size:15px;line-height:15px;color:#3a3a3e;letter-spacing:0.2px;white-space:nowrap;">50</div><div style="left:1330.41px;top:1678.5px;font-size:15px;line-height:15px;color:#3a3a3e;letter-spacing:0.2px;white-space:nowrap;">60</div><div style="left:1334px;top:1699.2px;width:55.8px;height:35.5px;background:#6b6b63;border:1.5px solid #565650;border-right:3px solid #4c4c44;border-radius:8px 0 0 8px;"></div><div style="left:1360.4px;top:1700.4px;width:1.8px;height:33.4px;background:#56564e;"></div><div style="left:1337.93px;top:1703.77px;font-size:26.5px;line-height:26.5px;color:#ff8a1c;letter-spacing:0px;white-space:nowrap;">R</div><div style="left:1371.32px;top:1703.77px;font-size:26.5px;line-height:26.5px;color:#f0107c;letter-spacing:0px;white-space:nowrap;-webkit-text-stroke:0.53px;">I</div><div class="ol" style="left:1274px;top:1739px;width:56px;height:35.6px;border-radius:8px;"></div><div style="left:1290.55px;top:1743.22px;font-size:27.5px;line-height:27.5px;color:#b4b4b2;letter-spacing:0.96px;white-space:nowrap;">M</div><div class="ol" style="left:1334px;top:1739px;width:56px;height:35.6px;border-radius:8px;"></div><div style="left:1352.83px;top:1743.22px;font-size:27.5px;line-height:27.5px;color:#16d62c;letter-spacing:0.96px;white-space:nowrap;">S</div><div class="nv" style="left:1407.7px;top:923px;width:80.2px;height:35.7px;"></div><div style="left:1419.13px;top:930.3px;font-size:22.5px;line-height:22.5px;color:#fff;letter-spacing:-0.05px;white-space:nowrap;">Bus 5</div><div class="nv" style="left:1407.7px;top:963px;width:80.2px;height:35.7px;"></div><div style="left:1419.13px;top:970.3px;font-size:22.5px;line-height:22.5px;color:#fff;letter-spacing:-0.05px;white-space:nowrap;">Bus 6</div><div class="sl" style="left:1407.7px;top:1003.3px;width:80.2px;height:17.3px;background:#dcdcdc;border-color:#cbcbcb;"></div><div class="ol" style="left:1407.7px;top:1037px;width:116px;height:35.8px;"></div><div style="left:1437.55px;top:1044.35px;font-size:22.5px;line-height:22.5px;color:#fff;letter-spacing:-0.31px;white-space:nowrap;">Bus 7</div><div class="gp" style="left:1410px;top:1082.9px;width:112px;height:33.8px;background:#e6e6e6;border-color:#d0d0d0;border-radius:2px;"></div><div class="rd" style="left:1407.7px;top:1128.8px;width:116px;height:35.9px;"></div><div style="left:1440.51px;top:1136.54px;font-size:21.8px;line-height:21.8px;color:#46ee66;letter-spacing:-0.58px;white-space:nowrap;">Read</div><div style="left:1410px;top:1337px;width:54px;height:33.8px;background:#878987;border-radius:2px;"></div><div style="left:1468.1px;top:1337px;width:53.9px;height:33.8px;background:#878987;border-radius:2px;"></div><div style="left:1416.65px;top:1344.83px;font-size:21.7px;line-height:21.7px;color:#383838;letter-spacing:1.1px;white-space:nowrap;">-9.0</div><div style="left:1472.96px;top:1410.7px;font-size:15px;line-height:15px;color:#3a3a3e;letter-spacing:0.2px;white-space:nowrap;">0</div><div style="left:1472.96px;top:1429.1px;font-size:15px;line-height:15px;color:#3a3a3e;letter-spacing:0.2px;white-space:nowrap;">3</div><div style="left:1472.96px;top:1446.9px;font-size:15px;line-height:15px;color:#3a3a3e;letter-spacing:0.2px;white-space:nowrap;">6</div><div style="left:1472.96px;top:1464.7px;font-size:15px;line-height:15px;color:#3a3a3e;letter-spacing:0.2px;white-space:nowrap;">9</div><div style="left:1464.41px;top:1483px;font-size:15px;line-height:15px;color:#3a3a3e;letter-spacing:0.2px;white-space:nowrap;">12</div><div style="left:1464.41px;top:1500.7px;font-size:15px;line-height:15px;color:#3a3a3e;letter-spacing:0.2px;white-space:nowrap;">15</div><div style="left:1464.41px;top:1518.5px;font-size:15px;line-height:15px;color:#3a3a3e;letter-spacing:0.2px;white-space:nowrap;">18</div><div style="left:1464.41px;top:1536.9px;font-size:15px;line-height:15px;color:#3a3a3e;letter-spacing:0.2px;white-space:nowrap;">21</div><div style="left:1464.41px;top:1554.7px;font-size:15px;line-height:15px;color:#3a3a3e;letter-spacing:0.2px;white-space:nowrap;">24</div><div style="left:1464.41px;top:1578.7px;font-size:15px;line-height:15px;color:#3a3a3e;letter-spacing:0.2px;white-space:nowrap;">30</div><div style="left:1464.41px;top:1598.7px;font-size:15px;line-height:15px;color:#3a3a3e;letter-spacing:0.2px;white-space:nowrap;">35</div><div style="left:1464.41px;top:1618.7px;font-size:15px;line-height:15px;color:#3a3a3e;letter-spacing:0.2px;white-space:nowrap;">40</div><div style="left:1464.41px;top:1638.7px;font-size:15px;line-height:15px;color:#3a3a3e;letter-spacing:0.2px;white-space:nowrap;">45</div><div style="left:1464.41px;top:1658.5px;font-size:15px;line-height:15px;color:#3a3a3e;letter-spacing:0.2px;white-space:nowrap;">50</div><div style="left:1464.41px;top:1678.5px;font-size:15px;line-height:15px;color:#3a3a3e;letter-spacing:0.2px;white-space:nowrap;">60</div><div style="left:1468px;top:1699.2px;width:55.8px;height:35.5px;background:#6b6b63;border:1.5px solid #565650;border-right:3px solid #4c4c44;border-radius:8px 0 0 8px;"></div><div style="left:1494.4px;top:1700.4px;width:1.8px;height:33.4px;background:#56564e;"></div><div style="left:1471.93px;top:1703.77px;font-size:26.5px;line-height:26.5px;color:#ff8a1c;letter-spacing:0px;white-space:nowrap;">R</div><div style="left:1505.32px;top:1703.77px;font-size:26.5px;line-height:26.5px;color:#f0107c;letter-spacing:0px;white-space:nowrap;-webkit-text-stroke:0.53px;">I</div><div class="ol" style="left:1408px;top:1739px;width:56px;height:35.6px;border-radius:8px;"></div><div style="left:1424.55px;top:1743.22px;font-size:27.5px;line-height:27.5px;color:#b4b4b2;letter-spacing:0.96px;white-space:nowrap;">M</div><div class="ol" style="left:1468px;top:1739px;width:56px;height:35.6px;border-radius:8px;"></div><div style="left:1486.83px;top:1743.22px;font-size:27.5px;line-height:27.5px;color:#16d62c;letter-spacing:0.96px;white-space:nowrap;">S</div><div class="nv" style="left:1541.7px;top:923px;width:80.2px;height:35.7px;"></div><div style="left:1553.13px;top:930.3px;font-size:22.5px;line-height:22.5px;color:#fff;letter-spacing:-0.05px;white-space:nowrap;">Bus 5</div><div class="nv" style="left:1541.7px;top:963px;width:80.2px;height:35.7px;"></div><div style="left:1553.13px;top:970.3px;font-size:22.5px;line-height:22.5px;color:#fff;letter-spacing:-0.05px;white-space:nowrap;">Bus 6</div><div class="sl" style="left:1541.7px;top:1003.3px;width:80.2px;height:17.3px;background:#dcdcdc;border-color:#cbcbcb;"></div><div class="ol" style="left:1541.7px;top:1037px;width:116px;height:35.8px;"></div><div style="left:1571.55px;top:1044.35px;font-size:22.5px;line-height:22.5px;color:#fff;letter-spacing:-0.31px;white-space:nowrap;">Bus 7</div><div class="gp" style="left:1544px;top:1082.9px;width:112px;height:33.8px;background:#e6e6e6;border-color:#d0d0d0;border-radius:2px;"></div><div class="rd" style="left:1541.7px;top:1128.8px;width:116px;height:35.9px;"></div><div style="left:1574.51px;top:1136.54px;font-size:21.8px;line-height:21.8px;color:#46ee66;letter-spacing:-0.58px;white-space:nowrap;">Read</div><div style="left:1544px;top:1337px;width:54px;height:33.8px;background:#878987;border-radius:2px;"></div><div style="left:1602.1px;top:1337px;width:53.9px;height:33.8px;background:#878987;border-radius:2px;"></div><div style="left:1550.65px;top:1344.83px;font-size:21.7px;line-height:21.7px;color:#383838;letter-spacing:1.1px;white-space:nowrap;">-9.6</div><div style="left:1606.96px;top:1410.7px;font-size:15px;line-height:15px;color:#3a3a3e;letter-spacing:0.2px;white-space:nowrap;">0</div><div style="left:1606.96px;top:1429.1px;font-size:15px;line-height:15px;color:#3a3a3e;letter-spacing:0.2px;white-space:nowrap;">3</div><div style="left:1606.96px;top:1446.9px;font-size:15px;line-height:15px;color:#3a3a3e;letter-spacing:0.2px;white-space:nowrap;">6</div><div style="left:1606.96px;top:1464.7px;font-size:15px;line-height:15px;color:#3a3a3e;letter-spacing:0.2px;white-space:nowrap;">9</div><div style="left:1598.41px;top:1483px;font-size:15px;line-height:15px;color:#3a3a3e;letter-spacing:0.2px;white-space:nowrap;">12</div><div style="left:1598.41px;top:1500.7px;font-size:15px;line-height:15px;color:#3a3a3e;letter-spacing:0.2px;white-space:nowrap;">15</div><div style="left:1598.41px;top:1518.5px;font-size:15px;line-height:15px;color:#3a3a3e;letter-spacing:0.2px;white-space:nowrap;">18</div><div style="left:1598.41px;top:1536.9px;font-size:15px;line-height:15px;color:#3a3a3e;letter-spacing:0.2px;white-space:nowrap;">21</div><div style="left:1598.41px;top:1554.7px;font-size:15px;line-height:15px;color:#3a3a3e;letter-spacing:0.2px;white-space:nowrap;">24</div><div style="left:1598.41px;top:1578.7px;font-size:15px;line-height:15px;color:#3a3a3e;letter-spacing:0.2px;white-space:nowrap;">30</div><div style="left:1598.41px;top:1598.7px;font-size:15px;line-height:15px;color:#3a3a3e;letter-spacing:0.2px;white-space:nowrap;">35</div><div style="left:1598.41px;top:1618.7px;font-size:15px;line-height:15px;color:#3a3a3e;letter-spacing:0.2px;white-space:nowrap;">40</div><div style="left:1598.41px;top:1638.7px;font-size:15px;line-height:15px;color:#3a3a3e;letter-spacing:0.2px;white-space:nowrap;">45</div><div style="left:1598.41px;top:1658.5px;font-size:15px;line-height:15px;color:#3a3a3e;letter-spacing:0.2px;white-space:nowrap;">50</div><div style="left:1598.41px;top:1678.5px;font-size:15px;line-height:15px;color:#3a3a3e;letter-spacing:0.2px;white-space:nowrap;">60</div><div style="left:1602px;top:1699.2px;width:55.8px;height:35.5px;background:#6b6b63;border:1.5px solid #565650;border-right:3px solid #4c4c44;border-radius:8px 0 0 8px;"></div><div style="left:1628.4px;top:1700.4px;width:1.8px;height:33.4px;background:#56564e;"></div><div style="left:1605.93px;top:1703.77px;font-size:26.5px;line-height:26.5px;color:#ff8a1c;letter-spacing:0px;white-space:nowrap;">R</div><div style="left:1639.32px;top:1703.77px;font-size:26.5px;line-height:26.5px;color:#f0107c;letter-spacing:0px;white-space:nowrap;-webkit-text-stroke:0.53px;">I</div><div class="ol" style="left:1542px;top:1739px;width:56px;height:35.6px;border-radius:8px;"></div><div style="left:1558.55px;top:1743.22px;font-size:27.5px;line-height:27.5px;color:#b4b4b2;letter-spacing:0.96px;white-space:nowrap;">M</div><div class="ol" style="left:1602px;top:1739px;width:56px;height:35.6px;border-radius:8px;"></div><div style="left:1620.83px;top:1743.22px;font-size:27.5px;line-height:27.5px;color:#16d62c;letter-spacing:0.96px;white-space:nowrap;">S</div><div class="nv" style="left:1675.7px;top:923px;width:80.2px;height:35.7px;"></div><div style="left:1687.13px;top:930.3px;font-size:22.5px;line-height:22.5px;color:#fff;letter-spacing:-0.05px;white-space:nowrap;">Bus 5</div><div class="nv" style="left:1675.7px;top:963px;width:80.2px;height:35.7px;"></div><div style="left:1687.13px;top:970.3px;font-size:22.5px;line-height:22.5px;color:#fff;letter-spacing:-0.05px;white-space:nowrap;">Bus 6</div><div class="sl" style="left:1675.7px;top:1003.3px;width:80.2px;height:17.3px;background:#dcdcdc;border-color:#cbcbcb;"></div><div class="ol" style="left:1675.7px;top:1037px;width:116px;height:35.8px;"></div><div style="left:1705.55px;top:1044.35px;font-size:22.5px;line-height:22.5px;color:#fff;letter-spacing:-0.31px;white-space:nowrap;">Bus 7</div><div class="gp" style="left:1678px;top:1082.9px;width:112px;height:33.8px;background:#e6e6e6;border-color:#d0d0d0;border-radius:2px;"></div><div class="rd" style="left:1675.7px;top:1128.8px;width:116px;height:35.9px;"></div><div style="left:1708.51px;top:1136.54px;font-size:21.8px;line-height:21.8px;color:#46ee66;letter-spacing:-0.58px;white-space:nowrap;">Read</div><div style="left:1678px;top:1337px;width:54px;height:33.8px;background:#878987;border-radius:2px;"></div><div style="left:1736.1px;top:1337px;width:53.9px;height:33.8px;background:#878987;border-radius:2px;"></div><div style="left:1679.87px;top:1344.83px;font-size:21.7px;line-height:21.7px;color:#383838;letter-spacing:0.2px;white-space:nowrap;">-10.2</div><div style="left:1740.96px;top:1410.7px;font-size:15px;line-height:15px;color:#3a3a3e;letter-spacing:0.2px;white-space:nowrap;">0</div><div style="left:1740.96px;top:1429.1px;font-size:15px;line-height:15px;color:#3a3a3e;letter-spacing:0.2px;white-space:nowrap;">3</div><div style="left:1740.96px;top:1446.9px;font-size:15px;line-height:15px;color:#3a3a3e;letter-spacing:0.2px;white-space:nowrap;">6</div><div style="left:1740.96px;top:1464.7px;font-size:15px;line-height:15px;color:#3a3a3e;letter-spacing:0.2px;white-space:nowrap;">9</div><div style="left:1732.41px;top:1483px;font-size:15px;line-height:15px;color:#3a3a3e;letter-spacing:0.2px;white-space:nowrap;">12</div><div style="left:1732.41px;top:1500.7px;font-size:15px;line-height:15px;color:#3a3a3e;letter-spacing:0.2px;white-space:nowrap;">15</div><div style="left:1732.41px;top:1518.5px;font-size:15px;line-height:15px;color:#3a3a3e;letter-spacing:0.2px;white-space:nowrap;">18</div><div style="left:1732.41px;top:1536.9px;font-size:15px;line-height:15px;color:#3a3a3e;letter-spacing:0.2px;white-space:nowrap;">21</div><div style="left:1732.41px;top:1554.7px;font-size:15px;line-height:15px;color:#3a3a3e;letter-spacing:0.2px;white-space:nowrap;">24</div><div style="left:1732.41px;top:1578.7px;font-size:15px;line-height:15px;color:#3a3a3e;letter-spacing:0.2px;white-space:nowrap;">30</div><div style="left:1732.41px;top:1598.7px;font-size:15px;line-height:15px;color:#3a3a3e;letter-spacing:0.2px;white-space:nowrap;">35</div><div style="left:1732.41px;top:1618.7px;font-size:15px;line-height:15px;color:#3a3a3e;letter-spacing:0.2px;white-space:nowrap;">40</div><div style="left:1732.41px;top:1638.7px;font-size:15px;line-height:15px;color:#3a3a3e;letter-spacing:0.2px;white-space:nowrap;">45</div><div style="left:1732.41px;top:1658.5px;font-size:15px;line-height:15px;color:#3a3a3e;letter-spacing:0.2px;white-space:nowrap;">50</div><div style="left:1732.41px;top:1678.5px;font-size:15px;line-height:15px;color:#3a3a3e;letter-spacing:0.2px;white-space:nowrap;">60</div><div style="left:1736px;top:1699.2px;width:55.8px;height:35.5px;background:#6b6b63;border:1.5px solid #565650;border-right:3px solid #4c4c44;border-radius:8px 0 0 8px;"></div><div style="left:1762.4px;top:1700.4px;width:1.8px;height:33.4px;background:#56564e;"></div><div style="left:1739.93px;top:1703.77px;font-size:26.5px;line-height:26.5px;color:#ff8a1c;letter-spacing:0px;white-space:nowrap;">R</div><div style="left:1773.32px;top:1703.77px;font-size:26.5px;line-height:26.5px;color:#f0107c;letter-spacing:0px;white-space:nowrap;-webkit-text-stroke:0.53px;">I</div><div class="ol" style="left:1676px;top:1739px;width:56px;height:35.6px;border-radius:8px;"></div><div style="left:1692.55px;top:1743.22px;font-size:27.5px;line-height:27.5px;color:#b4b4b2;letter-spacing:0.96px;white-space:nowrap;">M</div><div class="ol" style="left:1736px;top:1739px;width:56px;height:35.6px;border-radius:8px;"></div><div style="left:1754.83px;top:1743.22px;font-size:27.5px;line-height:27.5px;color:#16d62c;letter-spacing:0.96px;white-space:nowrap;">S</div><div class="nv" style="left:1809.7px;top:923px;width:80.2px;height:35.7px;"></div><div style="left:1821.13px;top:930.3px;font-size:22.5px;line-height:22.5px;color:#fff;letter-spacing:-0.05px;white-space:nowrap;">Bus 5</div><div class="nv" style="left:1809.7px;top:963px;width:80.2px;height:35.7px;"></div><div style="left:1821.13px;top:970.3px;font-size:22.5px;line-height:22.5px;color:#fff;letter-spacing:-0.05px;white-space:nowrap;">Bus 6</div><div class="sl" style="left:1809.7px;top:1003.3px;width:80.2px;height:17.3px;background:#dcdcdc;border-color:#cbcbcb;"></div><div class="ol" style="left:1809.7px;top:1037px;width:116px;height:35.8px;"></div><div style="left:1839.55px;top:1044.35px;font-size:22.5px;line-height:22.5px;color:#fff;letter-spacing:-0.31px;white-space:nowrap;">Bus 7</div><div class="gp" style="left:1812px;top:1082.9px;width:112px;height:33.8px;background:#e6e6e6;border-color:#d0d0d0;border-radius:2px;"></div><div class="rd" style="left:1809.7px;top:1128.8px;width:116px;height:35.9px;"></div><div style="left:1842.51px;top:1136.54px;font-size:21.8px;line-height:21.8px;color:#46ee66;letter-spacing:-0.58px;white-space:nowrap;">Read</div><div style="left:1812px;top:1337px;width:54px;height:33.8px;background:#878987;border-radius:2px;"></div><div style="left:1870.1px;top:1337px;width:53.9px;height:33.8px;background:#878987;border-radius:2px;"></div><div style="left:1813.87px;top:1344.83px;font-size:21.7px;line-height:21.7px;color:#383838;letter-spacing:0.2px;white-space:nowrap;">-10.8</div><div style="left:1874.96px;top:1410.7px;font-size:15px;line-height:15px;color:#3a3a3e;letter-spacing:0.2px;white-space:nowrap;">0</div><div style="left:1874.96px;top:1429.1px;font-size:15px;line-height:15px;color:#3a3a3e;letter-spacing:0.2px;white-space:nowrap;">3</div><div style="left:1874.96px;top:1446.9px;font-size:15px;line-height:15px;color:#3a3a3e;letter-spacing:0.2px;white-space:nowrap;">6</div><div style="left:1874.96px;top:1464.7px;font-size:15px;line-height:15px;color:#3a3a3e;letter-spacing:0.2px;white-space:nowrap;">9</div><div style="left:1866.41px;top:1483px;font-size:15px;line-height:15px;color:#3a3a3e;letter-spacing:0.2px;white-space:nowrap;">12</div><div style="left:1866.41px;top:1500.7px;font-size:15px;line-height:15px;color:#3a3a3e;letter-spacing:0.2px;white-space:nowrap;">15</div><div style="left:1866.41px;top:1518.5px;font-size:15px;line-height:15px;color:#3a3a3e;letter-spacing:0.2px;white-space:nowrap;">18</div><div style="left:1866.41px;top:1536.9px;font-size:15px;line-height:15px;color:#3a3a3e;letter-spacing:0.2px;white-space:nowrap;">21</div><div style="left:1866.41px;top:1554.7px;font-size:15px;line-height:15px;color:#3a3a3e;letter-spacing:0.2px;white-space:nowrap;">24</div><div style="left:1866.41px;top:1578.7px;font-size:15px;line-height:15px;color:#3a3a3e;letter-spacing:0.2px;white-space:nowrap;">30</div><div style="left:1866.41px;top:1598.7px;font-size:15px;line-height:15px;color:#3a3a3e;letter-spacing:0.2px;white-space:nowrap;">35</div><div style="left:1866.41px;top:1618.7px;font-size:15px;line-height:15px;color:#3a3a3e;letter-spacing:0.2px;white-space:nowrap;">40</div><div style="left:1866.41px;top:1638.7px;font-size:15px;line-height:15px;color:#3a3a3e;letter-spacing:0.2px;white-space:nowrap;">45</div><div style="left:1866.41px;top:1658.5px;font-size:15px;line-height:15px;color:#3a3a3e;letter-spacing:0.2px;white-space:nowrap;">50</div><div style="left:1866.41px;top:1678.5px;font-size:15px;line-height:15px;color:#3a3a3e;letter-spacing:0.2px;white-space:nowrap;">60</div><div style="left:1870px;top:1699.2px;width:55.8px;height:35.5px;background:#6b6b63;border:1.5px solid #565650;border-right:3px solid #4c4c44;border-radius:8px 0 0 8px;"></div><div style="left:1896.4px;top:1700.4px;width:1.8px;height:33.4px;background:#56564e;"></div><div style="left:1873.93px;top:1703.77px;font-size:26.5px;line-height:26.5px;color:#ff8a1c;letter-spacing:0px;white-space:nowrap;">R</div><div style="left:1907.32px;top:1703.77px;font-size:26.5px;line-height:26.5px;color:#f0107c;letter-spacing:0px;white-space:nowrap;-webkit-text-stroke:0.53px;">I</div><div class="ol" style="left:1810px;top:1739px;width:56px;height:35.6px;border-radius:8px;"></div><div style="left:1826.55px;top:1743.22px;font-size:27.5px;line-height:27.5px;color:#b4b4b2;letter-spacing:0.96px;white-space:nowrap;">M</div><div class="ol" style="left:1870px;top:1739px;width:56px;height:35.6px;border-radius:8px;"></div><div style="left:1888.83px;top:1743.22px;font-size:27.5px;line-height:27.5px;color:#16d62c;letter-spacing:0.96px;white-space:nowrap;">S</div><div class="nv" style="left:1943.7px;top:923px;width:80.2px;height:35.7px;"></div><div style="left:1955.13px;top:930.3px;font-size:22.5px;line-height:22.5px;color:#fff;letter-spacing:-0.05px;white-space:nowrap;">Bus 5</div><div class="nv" style="left:1943.7px;top:963px;width:80.2px;height:35.7px;"></div><div style="left:1955.13px;top:970.3px;font-size:22.5px;line-height:22.5px;color:#fff;letter-spacing:-0.05px;white-space:nowrap;">Bus 6</div><div class="sl" style="left:1943.7px;top:1003.3px;width:80.2px;height:17.3px;background:#dcdcdc;border-color:#cbcbcb;"></div><div class="ol" style="left:1943.7px;top:1037px;width:116px;height:35.8px;"></div><div style="left:1973.55px;top:1044.35px;font-size:22.5px;line-height:22.5px;color:#fff;letter-spacing:-0.31px;white-space:nowrap;">Bus 7</div><div class="gp" style="left:1946px;top:1082.9px;width:112px;height:33.8px;background:#e6e6e6;border-color:#d0d0d0;border-radius:2px;"></div><div class="rd" style="left:1943.7px;top:1128.8px;width:116px;height:35.9px;"></div><div style="left:1976.51px;top:1136.54px;font-size:21.8px;line-height:21.8px;color:#46ee66;letter-spacing:-0.58px;white-space:nowrap;">Read</div><div style="left:1946px;top:1337px;width:54px;height:33.8px;background:#878987;border-radius:2px;"></div><div style="left:2004.1px;top:1337px;width:53.9px;height:33.8px;background:#878987;border-radius:2px;"></div><div style="left:1952.65px;top:1344.83px;font-size:21.7px;line-height:21.7px;color:#383838;letter-spacing:1.1px;white-space:nowrap;">-7.2</div><div style="left:2008.96px;top:1410.7px;font-size:15px;line-height:15px;color:#3a3a3e;letter-spacing:0.2px;white-space:nowrap;">0</div><div style="left:2008.96px;top:1429.1px;font-size:15px;line-height:15px;color:#3a3a3e;letter-spacing:0.2px;white-space:nowrap;">3</div><div style="left:2008.96px;top:1446.9px;font-size:15px;line-height:15px;color:#3a3a3e;letter-spacing:0.2px;white-space:nowrap;">6</div><div style="left:2008.96px;top:1464.7px;font-size:15px;line-height:15px;color:#3a3a3e;letter-spacing:0.2px;white-space:nowrap;">9</div><div style="left:2000.41px;top:1483px;font-size:15px;line-height:15px;color:#3a3a3e;letter-spacing:0.2px;white-space:nowrap;">12</div><div style="left:2000.41px;top:1500.7px;font-size:15px;line-height:15px;color:#3a3a3e;letter-spacing:0.2px;white-space:nowrap;">15</div><div style="left:2000.41px;top:1518.5px;font-size:15px;line-height:15px;color:#3a3a3e;letter-spacing:0.2px;white-space:nowrap;">18</div><div style="left:2000.41px;top:1536.9px;font-size:15px;line-height:15px;color:#3a3a3e;letter-spacing:0.2px;white-space:nowrap;">21</div><div style="left:2000.41px;top:1554.7px;font-size:15px;line-height:15px;color:#3a3a3e;letter-spacing:0.2px;white-space:nowrap;">24</div><div style="left:2000.41px;top:1578.7px;font-size:15px;line-height:15px;color:#3a3a3e;letter-spacing:0.2px;white-space:nowrap;">30</div><div style="left:2000.41px;top:1598.7px;font-size:15px;line-height:15px;color:#3a3a3e;letter-spacing:0.2px;white-space:nowrap;">35</div><div style="left:2000.41px;top:1618.7px;font-size:15px;line-height:15px;color:#3a3a3e;letter-spacing:0.2px;white-space:nowrap;">40</div><div style="left:2000.41px;top:1638.7px;font-size:15px;line-height:15px;color:#3a3a3e;letter-spacing:0.2px;white-space:nowrap;">45</div><div style="left:2000.41px;top:1658.5px;font-size:15px;line-height:15px;color:#3a3a3e;letter-spacing:0.2px;white-space:nowrap;">50</div><div style="left:2000.41px;top:1678.5px;font-size:15px;line-height:15px;color:#3a3a3e;letter-spacing:0.2px;white-space:nowrap;">60</div><div style="left:2004px;top:1699.2px;width:55.8px;height:35.5px;background:#6b6b63;border:1.5px solid #565650;border-right:3px solid #4c4c44;border-radius:8px 0 0 8px;"></div><div style="left:2030.4px;top:1700.4px;width:1.8px;height:33.4px;background:#56564e;"></div><div style="left:2007.93px;top:1703.77px;font-size:26.5px;line-height:26.5px;color:#ff8a1c;letter-spacing:0px;white-space:nowrap;">R</div><div style="left:2041.32px;top:1703.77px;font-size:26.5px;line-height:26.5px;color:#f0107c;letter-spacing:0px;white-space:nowrap;-webkit-text-stroke:0.53px;">I</div><div class="ol" style="left:1944px;top:1739px;width:56px;height:35.6px;border-radius:8px;"></div><div style="left:1960.55px;top:1743.22px;font-size:27.5px;line-height:27.5px;color:#b4b4b2;letter-spacing:0.96px;white-space:nowrap;">M</div><div class="ol" style="left:2004px;top:1739px;width:56px;height:35.6px;border-radius:8px;"></div><div style="left:2022.83px;top:1743.22px;font-size:27.5px;line-height:27.5px;color:#16d62c;letter-spacing:0.96px;white-space:nowrap;">S</div><div class="nv" style="left:2077.7px;top:923px;width:80.2px;height:35.7px;"></div><div style="left:2089.13px;top:930.3px;font-size:22.5px;line-height:22.5px;color:#fff;letter-spacing:-0.05px;white-space:nowrap;">Bus 5</div><div class="nv" style="left:2077.7px;top:963px;width:80.2px;height:35.7px;"></div><div style="left:2089.13px;top:970.3px;font-size:22.5px;line-height:22.5px;color:#fff;letter-spacing:-0.05px;white-space:nowrap;">Bus 6</div><div class="sl" style="left:2077.7px;top:1003.3px;width:80.2px;height:17.3px;background:#dcdcdc;border-color:#cbcbcb;"></div><div class="ol" style="left:2077.7px;top:1037px;width:116px;height:35.8px;"></div><div style="left:2107.55px;top:1044.35px;font-size:22.5px;line-height:22.5px;color:#fff;letter-spacing:-0.31px;white-space:nowrap;">Bus 7</div><div class="gp" style="left:2080px;top:1082.9px;width:112px;height:33.8px;background:#e6e6e6;border-color:#d0d0d0;border-radius:2px;"></div><div class="rd" style="left:2077.7px;top:1128.8px;width:116px;height:35.9px;"></div><div style="left:2110.51px;top:1136.54px;font-size:21.8px;line-height:21.8px;color:#46ee66;letter-spacing:-0.58px;white-space:nowrap;">Read</div><div style="left:2080px;top:1337px;width:54px;height:33.8px;background:#878987;border-radius:2px;"></div><div style="left:2138.1px;top:1337px;width:53.9px;height:33.8px;background:#878987;border-radius:2px;"></div><div style="left:2086.65px;top:1344.83px;font-size:21.7px;line-height:21.7px;color:#383838;letter-spacing:1.1px;white-space:nowrap;">-6.4</div><div style="left:2142.96px;top:1410.7px;font-size:15px;line-height:15px;color:#3a3a3e;letter-spacing:0.2px;white-space:nowrap;">0</div><div style="left:2142.96px;top:1429.1px;font-size:15px;line-height:15px;color:#3a3a3e;letter-spacing:0.2px;white-space:nowrap;">3</div><div style="left:2142.96px;top:1446.9px;font-size:15px;line-height:15px;color:#3a3a3e;letter-spacing:0.2px;white-space:nowrap;">6</div><div style="left:2142.96px;top:1464.7px;font-size:15px;line-height:15px;color:#3a3a3e;letter-spacing:0.2px;white-space:nowrap;">9</div><div style="left:2134.41px;top:1483px;font-size:15px;line-height:15px;color:#3a3a3e;letter-spacing:0.2px;white-space:nowrap;">12</div><div style="left:2134.41px;top:1500.7px;font-size:15px;line-height:15px;color:#3a3a3e;letter-spacing:0.2px;white-space:nowrap;">15</div><div style="left:2134.41px;top:1518.5px;font-size:15px;line-height:15px;color:#3a3a3e;letter-spacing:0.2px;white-space:nowrap;">18</div><div style="left:2134.41px;top:1536.9px;font-size:15px;line-height:15px;color:#3a3a3e;letter-spacing:0.2px;white-space:nowrap;">21</div><div style="left:2134.41px;top:1554.7px;font-size:15px;line-height:15px;color:#3a3a3e;letter-spacing:0.2px;white-space:nowrap;">24</div><div style="left:2134.41px;top:1578.7px;font-size:15px;line-height:15px;color:#3a3a3e;letter-spacing:0.2px;white-space:nowrap;">30</div><div style="left:2134.41px;top:1598.7px;font-size:15px;line-height:15px;color:#3a3a3e;letter-spacing:0.2px;white-space:nowrap;">35</div><div style="left:2134.41px;top:1618.7px;font-size:15px;line-height:15px;color:#3a3a3e;letter-spacing:0.2px;white-space:nowrap;">40</div><div style="left:2134.41px;top:1638.7px;font-size:15px;line-height:15px;color:#3a3a3e;letter-spacing:0.2px;white-space:nowrap;">45</div><div style="left:2134.41px;top:1658.5px;font-size:15px;line-height:15px;color:#3a3a3e;letter-spacing:0.2px;white-space:nowrap;">50</div><div style="left:2134.41px;top:1678.5px;font-size:15px;line-height:15px;color:#3a3a3e;letter-spacing:0.2px;white-space:nowrap;">60</div><div style="left:2138px;top:1699.2px;width:55.8px;height:35.5px;background:#6b6b63;border:1.5px solid #565650;border-right:3px solid #4c4c44;border-radius:8px 0 0 8px;"></div><div style="left:2164.4px;top:1700.4px;width:1.8px;height:33.4px;background:#56564e;"></div><div style="left:2141.93px;top:1703.77px;font-size:26.5px;line-height:26.5px;color:#ff8a1c;letter-spacing:0px;white-space:nowrap;">R</div><div style="left:2175.32px;top:1703.77px;font-size:26.5px;line-height:26.5px;color:#f0107c;letter-spacing:0px;white-space:nowrap;-webkit-text-stroke:0.53px;">I</div><div class="ol" style="left:2078px;top:1739px;width:56px;height:35.6px;border-radius:8px;"></div><div style="left:2094.55px;top:1743.22px;font-size:27.5px;line-height:27.5px;color:#b4b4b2;letter-spacing:0.96px;white-space:nowrap;">M</div><div class="ol" style="left:2138px;top:1739px;width:56px;height:35.6px;border-radius:8px;"></div><div style="left:2156.83px;top:1743.22px;font-size:27.5px;line-height:27.5px;color:#16d62c;letter-spacing:0.96px;white-space:nowrap;">S</div><div class="nv" style="left:2211.7px;top:923px;width:80.2px;height:35.7px;"></div><div style="left:2223.13px;top:930.3px;font-size:22.5px;line-height:22.5px;color:#fff;letter-spacing:-0.05px;white-space:nowrap;">Bus 1</div><div class="nv" style="left:2211.7px;top:963px;width:80.2px;height:35.7px;"></div><div style="left:2223.13px;top:970.3px;font-size:22.5px;line-height:22.5px;color:#fff;letter-spacing:-0.05px;white-space:nowrap;">Bus 2</div><div class="sl" style="left:2211.7px;top:1003.3px;width:80.2px;height:17.3px;background:#dcdcdc;border-color:#cbcbcb;"></div><div class="ol" style="left:2211.7px;top:1037px;width:116px;height:35.8px;"></div><div style="left:2236.89px;top:1044.35px;font-size:22.5px;line-height:22.5px;color:#fff;letter-spacing:0.37px;white-space:nowrap;">St Out</div><div class="gp" style="left:2214px;top:1082.9px;width:112px;height:33.8px;background:#e6e6e6;border-color:#d0d0d0;border-radius:2px;"></div><div class="rd" style="left:2211.7px;top:1128.8px;width:116px;height:35.9px;"></div><div style="left:2244.51px;top:1136.54px;font-size:21.8px;line-height:21.8px;color:#46ee66;letter-spacing:-0.58px;white-space:nowrap;">Read</div><div style="left:2214px;top:1337px;width:54px;height:33.8px;background:#878987;border-radius:2px;"></div><div style="left:2272.1px;top:1337px;width:53.9px;height:33.8px;background:#878987;border-radius:2px;"></div><div style="left:2220.65px;top:1344.83px;font-size:21.7px;line-height:21.7px;color:#383838;letter-spacing:1.1px;white-space:nowrap;">-3.5</div><div style="left:2276.96px;top:1410.7px;font-size:15px;line-height:15px;color:#3a3a3e;letter-spacing:0.2px;white-space:nowrap;">0</div><div style="left:2276.96px;top:1429.1px;font-size:15px;line-height:15px;color:#3a3a3e;letter-spacing:0.2px;white-space:nowrap;">3</div><div style="left:2276.96px;top:1446.9px;font-size:15px;line-height:15px;color:#3a3a3e;letter-spacing:0.2px;white-space:nowrap;">6</div><div style="left:2276.96px;top:1464.7px;font-size:15px;line-height:15px;color:#3a3a3e;letter-spacing:0.2px;white-space:nowrap;">9</div><div style="left:2268.41px;top:1483px;font-size:15px;line-height:15px;color:#3a3a3e;letter-spacing:0.2px;white-space:nowrap;">12</div><div style="left:2268.41px;top:1500.7px;font-size:15px;line-height:15px;color:#3a3a3e;letter-spacing:0.2px;white-space:nowrap;">15</div><div style="left:2268.41px;top:1518.5px;font-size:15px;line-height:15px;color:#3a3a3e;letter-spacing:0.2px;white-space:nowrap;">18</div><div style="left:2268.41px;top:1536.9px;font-size:15px;line-height:15px;color:#3a3a3e;letter-spacing:0.2px;white-space:nowrap;">21</div><div style="left:2268.41px;top:1554.7px;font-size:15px;line-height:15px;color:#3a3a3e;letter-spacing:0.2px;white-space:nowrap;">24</div><div style="left:2268.41px;top:1578.7px;font-size:15px;line-height:15px;color:#3a3a3e;letter-spacing:0.2px;white-space:nowrap;">30</div><div style="left:2268.41px;top:1598.7px;font-size:15px;line-height:15px;color:#3a3a3e;letter-spacing:0.2px;white-space:nowrap;">35</div><div style="left:2268.41px;top:1618.7px;font-size:15px;line-height:15px;color:#3a3a3e;letter-spacing:0.2px;white-space:nowrap;">40</div><div style="left:2268.41px;top:1638.7px;font-size:15px;line-height:15px;color:#3a3a3e;letter-spacing:0.2px;white-space:nowrap;">45</div><div style="left:2268.41px;top:1658.5px;font-size:15px;line-height:15px;color:#3a3a3e;letter-spacing:0.2px;white-space:nowrap;">50</div><div style="left:2268.41px;top:1678.5px;font-size:15px;line-height:15px;color:#3a3a3e;letter-spacing:0.2px;white-space:nowrap;">60</div><div class="ol" style="left:2212px;top:1739px;width:56px;height:35.6px;border-radius:8px;"></div><div style="left:2228.55px;top:1743.22px;font-size:27.5px;line-height:27.5px;color:#b4b4b2;letter-spacing:0.96px;white-space:nowrap;">M</div><div class="ol" style="left:2272px;top:1739px;width:56px;height:35.6px;border-radius:8px;"></div><div style="left:2290.83px;top:1743.22px;font-size:27.5px;line-height:27.5px;color:#16d62c;letter-spacing:0.96px;white-space:nowrap;">S</div><div class="sl" style="left:2345.7px;top:923px;width:80.2px;height:35.7px;background:#dcdcdc;border-color:#cbcbcb;"></div><div class="sl" style="left:2345.7px;top:963px;width:80.2px;height:35.7px;background:#dcdcdc;border-color:#cbcbcb;"></div><div class="sl" style="left:2345.7px;top:1003.3px;width:80.2px;height:17.3px;background:#dcdcdc;border-color:#cbcbcb;"></div><div class="ol" style="left:2345.7px;top:1037px;width:116px;height:35.8px;"></div><div style="left:2370.89px;top:1044.35px;font-size:22.5px;line-height:22.5px;color:#fff;letter-spacing:0.37px;white-space:nowrap;">St Out</div><div class="gp" style="left:2348px;top:1082.9px;width:112px;height:33.8px;background:#e6e6e6;border-color:#d0d0d0;border-radius:2px;"></div><div class="rd" style="left:2345.7px;top:1128.8px;width:116px;height:35.9px;"></div><div style="left:2378.51px;top:1136.54px;font-size:21.8px;line-height:21.8px;color:#46ee66;letter-spacing:-0.58px;white-space:nowrap;">Read</div><div style="left:2348px;top:1337px;width:54px;height:33.8px;background:#878987;border-radius:2px;"></div><div style="left:2406.1px;top:1337px;width:53.9px;height:33.8px;background:#878987;border-radius:2px;"></div><div style="left:2349.87px;top:1344.83px;font-size:21.7px;line-height:21.7px;color:#383838;letter-spacing:0.2px;white-space:nowrap;">-18.2</div><div style="left:2410.96px;top:1410.7px;font-size:15px;line-height:15px;color:#3a3a3e;letter-spacing:0.2px;white-space:nowrap;">0</div><div style="left:2410.96px;top:1429.1px;font-size:15px;line-height:15px;color:#3a3a3e;letter-spacing:0.2px;white-space:nowrap;">3</div><div style="left:2410.96px;top:1446.9px;font-size:15px;line-height:15px;color:#3a3a3e;letter-spacing:0.2px;white-space:nowrap;">6</div><div style="left:2410.96px;top:1464.7px;font-size:15px;line-height:15px;color:#3a3a3e;letter-spacing:0.2px;white-space:nowrap;">9</div><div style="left:2402.41px;top:1483px;font-size:15px;line-height:15px;color:#3a3a3e;letter-spacing:0.2px;white-space:nowrap;">12</div><div style="left:2402.41px;top:1500.7px;font-size:15px;line-height:15px;color:#3a3a3e;letter-spacing:0.2px;white-space:nowrap;">15</div><div style="left:2402.41px;top:1518.5px;font-size:15px;line-height:15px;color:#3a3a3e;letter-spacing:0.2px;white-space:nowrap;">18</div><div style="left:2402.41px;top:1536.9px;font-size:15px;line-height:15px;color:#3a3a3e;letter-spacing:0.2px;white-space:nowrap;">21</div><div style="left:2402.41px;top:1554.7px;font-size:15px;line-height:15px;color:#3a3a3e;letter-spacing:0.2px;white-space:nowrap;">24</div><div style="left:2402.41px;top:1578.7px;font-size:15px;line-height:15px;color:#3a3a3e;letter-spacing:0.2px;white-space:nowrap;">30</div><div style="left:2402.41px;top:1598.7px;font-size:15px;line-height:15px;color:#3a3a3e;letter-spacing:0.2px;white-space:nowrap;">35</div><div style="left:2402.41px;top:1618.7px;font-size:15px;line-height:15px;color:#3a3a3e;letter-spacing:0.2px;white-space:nowrap;">40</div><div style="left:2402.41px;top:1638.7px;font-size:15px;line-height:15px;color:#3a3a3e;letter-spacing:0.2px;white-space:nowrap;">45</div><div style="left:2402.41px;top:1658.5px;font-size:15px;line-height:15px;color:#3a3a3e;letter-spacing:0.2px;white-space:nowrap;">50</div><div style="left:2402.41px;top:1678.5px;font-size:15px;line-height:15px;color:#3a3a3e;letter-spacing:0.2px;white-space:nowrap;">60</div><div class="ol" style="left:2346px;top:1739px;width:56px;height:35.6px;border-radius:8px;"></div><div style="left:2362.55px;top:1743.22px;font-size:27.5px;line-height:27.5px;color:#b4b4b2;letter-spacing:0.96px;white-space:nowrap;">M</div><div class="ol" style="left:2406px;top:1739px;width:56px;height:35.6px;border-radius:8px;"></div><div style="left:2424.83px;top:1743.22px;font-size:27.5px;line-height:27.5px;color:#16d62c;letter-spacing:0.96px;white-space:nowrap;">S</div><div style="left:2471px;top:905.5px;width:134px;height:890px;background:#d5f2df;"></div><div class="nv" style="left:2479.7px;top:923px;width:80.2px;height:35.7px;"></div><div style="left:2491.13px;top:930.3px;font-size:22.5px;line-height:22.5px;color:#fff;letter-spacing:-0.05px;white-space:nowrap;">Bus 1</div><div class="nv" style="left:2479.7px;top:963px;width:80.2px;height:35.7px;"></div><div style="left:2491.13px;top:970.3px;font-size:22.5px;line-height:22.5px;color:#fff;letter-spacing:-0.05px;white-space:nowrap;">Bus 2</div><div class="sl" style="left:2479.7px;top:1003.3px;width:80.2px;height:17.3px;background:#b9dac6;border-color:#a9ccb7;"></div><div class="ol" style="left:2479.7px;top:1037px;width:116px;height:35.8px;"></div><div style="left:2504.89px;top:1044.35px;font-size:22.5px;line-height:22.5px;color:#fff;letter-spacing:0.37px;white-space:nowrap;">St Out</div><div class="gp" style="left:2482px;top:1082.9px;width:112px;height:33.8px;background:#bfdccb;border-color:#b0cfbd;border-radius:2px;"></div><div class="rd" style="left:2479.7px;top:1128.8px;width:116px;height:35.9px;"></div><div style="left:2512.51px;top:1136.54px;font-size:21.8px;line-height:21.8px;color:#46ee66;letter-spacing:-0.58px;white-space:nowrap;">Read</div><div style="left:2482px;top:1337px;width:54px;height:33.8px;background:#738579;border-radius:2px;"></div><div style="left:2540.1px;top:1337px;width:53.9px;height:33.8px;background:#738579;border-radius:2px;"></div><div style="left:2492.82px;top:1344.83px;font-size:21.7px;line-height:21.7px;color:#383838;letter-spacing:1.1px;white-space:nowrap;">0.0</div><div style="left:2544.96px;top:1410.7px;font-size:15px;line-height:15px;color:#3a3a3e;letter-spacing:0.2px;white-space:nowrap;">0</div><div style="left:2544.96px;top:1429.1px;font-size:15px;line-height:15px;color:#3a3a3e;letter-spacing:0.2px;white-space:nowrap;">3</div><div style="left:2544.96px;top:1446.9px;font-size:15px;line-height:15px;color:#3a3a3e;letter-spacing:0.2px;white-space:nowrap;">6</div><div style="left:2544.96px;top:1464.7px;font-size:15px;line-height:15px;color:#3a3a3e;letter-spacing:0.2px;white-space:nowrap;">9</div><div style="left:2536.41px;top:1483px;font-size:15px;line-height:15px;color:#3a3a3e;letter-spacing:0.2px;white-space:nowrap;">12</div><div style="left:2536.41px;top:1500.7px;font-size:15px;line-height:15px;color:#3a3a3e;letter-spacing:0.2px;white-space:nowrap;">15</div><div style="left:2536.41px;top:1518.5px;font-size:15px;line-height:15px;color:#3a3a3e;letter-spacing:0.2px;white-space:nowrap;">18</div><div style="left:2536.41px;top:1536.9px;font-size:15px;line-height:15px;color:#3a3a3e;letter-spacing:0.2px;white-space:nowrap;">21</div><div style="left:2536.41px;top:1554.7px;font-size:15px;line-height:15px;color:#3a3a3e;letter-spacing:0.2px;white-space:nowrap;">24</div><div style="left:2536.41px;top:1578.7px;font-size:15px;line-height:15px;color:#3a3a3e;letter-spacing:0.2px;white-space:nowrap;">30</div><div style="left:2536.41px;top:1598.7px;font-size:15px;line-height:15px;color:#3a3a3e;letter-spacing:0.2px;white-space:nowrap;">35</div><div style="left:2536.41px;top:1618.7px;font-size:15px;line-height:15px;color:#3a3a3e;letter-spacing:0.2px;white-space:nowrap;">40</div><div style="left:2536.41px;top:1638.7px;font-size:15px;line-height:15px;color:#3a3a3e;letter-spacing:0.2px;white-space:nowrap;">45</div><div style="left:2536.41px;top:1658.5px;font-size:15px;line-height:15px;color:#3a3a3e;letter-spacing:0.2px;white-space:nowrap;">50</div><div style="left:2536.41px;top:1678.5px;font-size:15px;line-height:15px;color:#3a3a3e;letter-spacing:0.2px;white-space:nowrap;">60</div><div class="ol" style="left:2480px;top:1739px;width:56px;height:35.6px;border-radius:8px;"></div><div style="left:2496.55px;top:1743.22px;font-size:27.5px;line-height:27.5px;color:#b4b4b2;letter-spacing:0.96px;white-space:nowrap;">M</div><div class="ol" style="left:2540px;top:1739px;width:56px;height:35.6px;border-radius:8px;"></div><div style="left:2558.83px;top:1743.22px;font-size:27.5px;line-height:27.5px;color:#16d62c;letter-spacing:0.96px;white-space:nowrap;">S</div><div style="left:2605px;top:905.5px;width:134px;height:890px;background:#f3ecd9;"></div><div class="nv" style="left:2613.7px;top:923px;width:80.2px;height:35.7px;"></div><div style="left:2625.13px;top:930.3px;font-size:22.5px;line-height:22.5px;color:#fff;letter-spacing:-0.05px;white-space:nowrap;">Bus 1</div><div class="sl" style="left:2613.7px;top:963px;width:80.2px;height:35.7px;background:#dbd2bd;border-color:#cdc4b0;"></div><div class="sl" style="left:2613.7px;top:1003.3px;width:80.2px;height:17.3px;background:#dbd2bd;border-color:#cdc4b0;"></div><div class="ol" style="left:2613.7px;top:1037px;width:116px;height:35.8px;"></div><div style="left:2638.89px;top:1044.35px;font-size:22.5px;line-height:22.5px;color:#fff;letter-spacing:0.37px;white-space:nowrap;">St Out</div><div class="gp" style="left:2616px;top:1082.9px;width:112px;height:33.8px;background:#e1d9c5;border-color:#d2cab6;border-radius:2px;"></div><div class="rd" style="left:2613.7px;top:1128.8px;width:116px;height:35.9px;"></div><div style="left:2646.51px;top:1136.54px;font-size:21.8px;line-height:21.8px;color:#46ee66;letter-spacing:-0.58px;white-space:nowrap;">Read</div><div style="left:2616px;top:1337px;width:54px;height:33.8px;background:#868374;border-radius:2px;"></div><div style="left:2674.1px;top:1337px;width:53.9px;height:33.8px;background:#868374;border-radius:2px;"></div><div style="left:2626.82px;top:1344.83px;font-size:21.7px;line-height:21.7px;color:#383838;letter-spacing:1.1px;white-space:nowrap;">0.0</div><div style="left:2678.96px;top:1410.7px;font-size:15px;line-height:15px;color:#3a3a3e;letter-spacing:0.2px;white-space:nowrap;">0</div><div style="left:2678.96px;top:1429.1px;font-size:15px;line-height:15px;color:#3a3a3e;letter-spacing:0.2px;white-space:nowrap;">3</div><div style="left:2678.96px;top:1446.9px;font-size:15px;line-height:15px;color:#3a3a3e;letter-spacing:0.2px;white-space:nowrap;">6</div><div style="left:2678.96px;top:1464.7px;font-size:15px;line-height:15px;color:#3a3a3e;letter-spacing:0.2px;white-space:nowrap;">9</div><div style="left:2670.41px;top:1483px;font-size:15px;line-height:15px;color:#3a3a3e;letter-spacing:0.2px;white-space:nowrap;">12</div><div style="left:2670.41px;top:1500.7px;font-size:15px;line-height:15px;color:#3a3a3e;letter-spacing:0.2px;white-space:nowrap;">15</div><div style="left:2670.41px;top:1518.5px;font-size:15px;line-height:15px;color:#3a3a3e;letter-spacing:0.2px;white-space:nowrap;">18</div><div style="left:2670.41px;top:1536.9px;font-size:15px;line-height:15px;color:#3a3a3e;letter-spacing:0.2px;white-space:nowrap;">21</div><div style="left:2670.41px;top:1554.7px;font-size:15px;line-height:15px;color:#3a3a3e;letter-spacing:0.2px;white-space:nowrap;">24</div><div style="left:2670.41px;top:1578.7px;font-size:15px;line-height:15px;color:#3a3a3e;letter-spacing:0.2px;white-space:nowrap;">30</div><div style="left:2670.41px;top:1598.7px;font-size:15px;line-height:15px;color:#3a3a3e;letter-spacing:0.2px;white-space:nowrap;">35</div><div style="left:2670.41px;top:1618.7px;font-size:15px;line-height:15px;color:#3a3a3e;letter-spacing:0.2px;white-space:nowrap;">40</div><div style="left:2670.41px;top:1638.7px;font-size:15px;line-height:15px;color:#3a3a3e;letter-spacing:0.2px;white-space:nowrap;">45</div><div style="left:2670.41px;top:1658.5px;font-size:15px;line-height:15px;color:#3a3a3e;letter-spacing:0.2px;white-space:nowrap;">50</div><div style="left:2670.41px;top:1678.5px;font-size:15px;line-height:15px;color:#3a3a3e;letter-spacing:0.2px;white-space:nowrap;">60</div><div class="ol" style="left:2614px;top:1739px;width:56px;height:35.6px;border-radius:8px;"></div><div style="left:2630.55px;top:1743.22px;font-size:27.5px;line-height:27.5px;color:#b4b4b2;letter-spacing:0.96px;white-space:nowrap;">M</div><div class="ol" style="left:2674px;top:1739px;width:56px;height:35.6px;border-radius:8px;"></div><div style="left:2692.83px;top:1743.22px;font-size:27.5px;line-height:27.5px;color:#16d62c;letter-spacing:0.96px;white-space:nowrap;">S</div><div style="left:2739px;top:905.5px;width:134px;height:890px;background:#9dcbfa;"></div><div class="nv" style="left:2747.7px;top:923px;width:80.2px;height:35.7px;"></div><div style="left:2759.13px;top:930.3px;font-size:22.5px;line-height:22.5px;color:#fff;letter-spacing:-0.05px;white-space:nowrap;">Bus 2</div><div class="sl" style="left:2747.7px;top:963px;width:80.2px;height:35.7px;background:#8fb5e0;border-color:#84a9d4;"></div><div class="sl" style="left:2747.7px;top:1003.3px;width:80.2px;height:17.3px;background:#8fb5e0;border-color:#84a9d4;"></div><div class="ol" style="left:2747.7px;top:1037px;width:116px;height:35.8px;"></div><div style="left:2772.89px;top:1044.35px;font-size:22.5px;line-height:22.5px;color:#fff;letter-spacing:0.37px;white-space:nowrap;">St Out</div><div class="gp" style="left:2750px;top:1082.9px;width:112px;height:33.8px;background:#8fbbe9;border-color:#85aedb;border-radius:2px;"></div><div class="nv" style="left:2747.7px;top:1128.8px;width:116px;height:35.9px;border-radius:7px;"></div><div style="left:2780.51px;top:1136.54px;font-size:21.8px;line-height:21.8px;color:#10141f;letter-spacing:-0.58px;white-space:nowrap;">Read</div><div style="left:2750px;top:1337px;width:54px;height:33.8px;background:#475b70;border-radius:2px;"></div><div style="left:2808.1px;top:1337px;width:53.9px;height:33.8px;background:#475b70;border-radius:2px;"></div><div style="left:2756.65px;top:1344.83px;font-size:21.7px;line-height:21.7px;color:#383838;letter-spacing:1.1px;white-space:nowrap;">-5.8</div><div style="left:2812.96px;top:1410.7px;font-size:15px;line-height:15px;color:#3a3a3e;letter-spacing:0.2px;white-space:nowrap;">0</div><div style="left:2812.96px;top:1429.1px;font-size:15px;line-height:15px;color:#3a3a3e;letter-spacing:0.2px;white-space:nowrap;">3</div><div style="left:2812.96px;top:1446.9px;font-size:15px;line-height:15px;color:#3a3a3e;letter-spacing:0.2px;white-space:nowrap;">6</div><div style="left:2812.96px;top:1464.7px;font-size:15px;line-height:15px;color:#3a3a3e;letter-spacing:0.2px;white-space:nowrap;">9</div><div style="left:2804.41px;top:1483px;font-size:15px;line-height:15px;color:#3a3a3e;letter-spacing:0.2px;white-space:nowrap;">12</div><div style="left:2804.41px;top:1500.7px;font-size:15px;line-height:15px;color:#3a3a3e;letter-spacing:0.2px;white-space:nowrap;">15</div><div style="left:2804.41px;top:1518.5px;font-size:15px;line-height:15px;color:#3a3a3e;letter-spacing:0.2px;white-space:nowrap;">18</div><div style="left:2804.41px;top:1536.9px;font-size:15px;line-height:15px;color:#3a3a3e;letter-spacing:0.2px;white-space:nowrap;">21</div><div style="left:2804.41px;top:1554.7px;font-size:15px;line-height:15px;color:#3a3a3e;letter-spacing:0.2px;white-space:nowrap;">24</div><div style="left:2804.41px;top:1578.7px;font-size:15px;line-height:15px;color:#3a3a3e;letter-spacing:0.2px;white-space:nowrap;">30</div><div style="left:2804.41px;top:1598.7px;font-size:15px;line-height:15px;color:#3a3a3e;letter-spacing:0.2px;white-space:nowrap;">35</div><div style="left:2804.41px;top:1618.7px;font-size:15px;line-height:15px;color:#3a3a3e;letter-spacing:0.2px;white-space:nowrap;">40</div><div style="left:2804.41px;top:1638.7px;font-size:15px;line-height:15px;color:#3a3a3e;letter-spacing:0.2px;white-space:nowrap;">45</div><div style="left:2804.41px;top:1658.5px;font-size:15px;line-height:15px;color:#3a3a3e;letter-spacing:0.2px;white-space:nowrap;">50</div><div style="left:2804.41px;top:1678.5px;font-size:15px;line-height:15px;color:#3a3a3e;letter-spacing:0.2px;white-space:nowrap;">60</div><div class="ol" style="left:2748px;top:1739px;width:56px;height:35.6px;border-radius:8px;"></div><div style="left:2764.55px;top:1743.22px;font-size:27.5px;line-height:27.5px;color:#b4b4b2;letter-spacing:0.96px;white-space:nowrap;">M</div><div class="ol" style="left:2808px;top:1739px;width:56px;height:35.6px;border-radius:8px;"></div><div style="left:2826.83px;top:1743.22px;font-size:27.5px;line-height:27.5px;color:#16d62c;letter-spacing:0.96px;white-space:nowrap;">S</div><div style="left:650px;top:1783.1px;width:1553px;height:2px;background:#8892b4;"></div><svg style="position:absolute;left:595px;top:905px;" width="2285" height="890" viewBox="595 905 2285 890"><circle cx="706" cy="941" r="13.2" fill="#f2fffb"/><path d="M699.4 952.43A13.2 13.2 0 1 1 712.6 952.43" fill="none" stroke="#000" stroke-width="5.6"/><path d="M699.4 952.43A13.2 13.2 0 0 1 693.76 945.94" fill="none" stroke="#2a2d52" stroke-width="5.6"/><circle cx="706" cy="981" r="13.2" fill="#f2fffb"/><path d="M699.4 992.43A13.2 13.2 0 1 1 712.6 992.43" fill="none" stroke="#000" stroke-width="5.6"/><path d="M699.4 992.43A13.2 13.2 0 0 1 692.82 981.69" fill="none" stroke="#2a2d52" stroke-width="5.6"/><g transform="translate(638.2 1182.9) scale(1)"><path d="M23.2 0C30 0 35 4.500 35.500 14C35.800 19 35.500 22 34.300 25.500L33.200 30.600l-1.200-1.600-1 2.300-1.400-1.900C29.500 32 31 34 33.500 35.200L38 37L38.700 47.800H0C1.500 41 6 38.500 12 36.800C16 35.500 18.300 34 18.500 31l-1.300-1.400-.8 1.700-1.600-2.700C12.500 25 11 21 10.900 15C10.800 5 16 0 23.200 0z" fill="#7edb32"/><path d="M39.700 34.800V32C39.700 28 40.800 26 43 26H46.500C48.700 26 49.800 28 49.800 32V34.800z" fill="#7edb32"/><path d="M42 32l1-3.700h3.500l1 3.700z" fill="#fff"/><rect x="39.700" y="36.100" width="10.100" height="1.800" fill="#7edb32"/><path d="M39.900 39.300H49.600C49.600 43 49 46.500 48.200 49L46.600 49.600C46.500 51.600 46.200 52.200 44.700 52.200C43.200 52.200 42.900 51.600 42.800 49.600L41.200 49C40.400 46.500 39.900 43 39.900 39.300z" fill="#7edb32"/></g><path d="M649.35 1318.4A31.6 31.6 0 1 1 677.05 1318.4" fill="none" stroke="#414141" stroke-width="7"/><path d="M661.99 1258.42A31.6 31.6 0 0 1 664.41 1258.42" fill="none" stroke="#fdfb35" stroke-width="6.4"/><path d="M663.2 1269.9L663.2 1262.4" stroke="#222" stroke-width="2"/><path d="M604.3 1417.8h22M618.1 1429.1h8.2M618.1 1440.4h8.2M604.3 1451.7h22M618.1 1463.07h8.2M618.1 1474.43h8.2M604.3 1485.8h22M618.1 1497.2h8.2M618.1 1508.6h8.2M604.3 1520h22M618.1 1531.93h8.2M618.1 1543.87h8.2M604.3 1555.8h22M618.1 1561.3h8.2M618.1 1566.8h8.2M618.1 1572.3h8.2M604.3 1577.8h22M618.1 1583.44h8.2M618.1 1589.08h8.2M618.1 1594.72h8.2M618.1 1600.36h8.2M604.3 1606h22M618.1 1611.45h8.2M618.1 1616.9h8.2M618.1 1622.35h8.2M604.3 1627.8h22M618.1 1632.58h8.2M618.1 1637.36h8.2M618.1 1642.14h8.2M618.1 1646.92h8.2M604.3 1651.7h22M618.1 1657.8h8.2M604.3 1663.9h22M618.1 1669.37h8.2M618.1 1674.85h8.2M618.1 1680.32h8.2M604.3 1685.8h22" stroke="#15173a" stroke-width="1.9"/><rect x="628.3" y="1415.3" width="3.8" height="273" fill="#3a3a42"/><path d="M679.9 1418h6.500M679.9 1436.4h6.500M679.9 1454.2h6.500M679.9 1472h6.500M679.9 1490.3h6.500M679.9 1508h6.500M679.9 1525.8h6.500M679.9 1544.2h6.500M679.9 1562h6.500M679.9 1586h6.500M679.9 1606h6.500M679.9 1626h6.500M679.9 1646h6.500M679.9 1665.8h6.500M679.9 1685.8h6.500" stroke="#1d2044" stroke-width="1.600"/><path d="M685.2 1417.5v270" stroke="#1d2044" stroke-width="1.700" stroke-dasharray="1.300 2.250"/><rect x="686.1" y="1415.3" width="19.800" height="273" fill="#49524a"/><rect x="686.1" y="1415.3" width="19.800" height="19.500" fill="#524b46"/><circle cx="840" cy="941" r="13.2" fill="#f2fffb"/><path d="M833.4 952.43A13.2 13.2 0 1 1 846.6 952.43" fill="none" stroke="#000" stroke-width="5.6"/><path d="M833.4 952.43A13.2 13.2 0 0 1 827.76 945.94" fill="none" stroke="#2a2d52" stroke-width="5.6"/><circle cx="840" cy="981" r="13.2" fill="#f2fffb"/><path d="M833.4 992.43A13.2 13.2 0 1 1 846.6 992.43" fill="none" stroke="#000" stroke-width="5.6"/><path d="M833.4 992.43A13.2 13.2 0 0 1 826.82 981.69" fill="none" stroke="#2a2d52" stroke-width="5.6"/><g transform="translate(772.2 1182.9) scale(1)"><path d="M23.2 0C30 0 35 4.500 35.500 14C35.800 19 35.500 22 34.300 25.500L33.200 30.600l-1.200-1.600-1 2.300-1.400-1.900C29.500 32 31 34 33.500 35.200L38 37L38.700 47.800H0C1.500 41 6 38.500 12 36.800C16 35.500 18.300 34 18.500 31l-1.300-1.400-.8 1.700-1.600-2.700C12.500 25 11 21 10.900 15C10.800 5 16 0 23.200 0z" fill="#a7da36"/><path d="M39.700 34.800V32C39.700 28 40.800 26 43 26H46.500C48.700 26 49.800 28 49.800 32V34.800z" fill="#a7da36"/><path d="M42 32l1-3.700h3.500l1 3.700z" fill="#fff"/><rect x="39.700" y="36.100" width="10.100" height="1.800" fill="#a7da36"/><path d="M39.900 39.300H49.600C49.600 43 49 46.500 48.200 49L46.600 49.600C46.500 51.600 46.200 52.200 44.700 52.200C43.200 52.200 42.900 51.600 42.800 49.600L41.200 49C40.400 46.500 39.900 43 39.900 39.300z" fill="#a7da36"/></g><path d="M783.35 1318.4A31.6 31.6 0 1 1 811.05 1318.4" fill="none" stroke="#414141" stroke-width="7"/><path d="M797.2 1258.4A31.6 31.6 0 0 1 828.77 1291.45" fill="none" stroke="#fdfb35" stroke-width="6.4"/><path d="M817.28 1290.92L824.77 1291.26" stroke="#222" stroke-width="2"/><path d="M738.3 1417.8h22M752.1 1429.1h8.2M752.1 1440.4h8.2M738.3 1451.7h22M752.1 1463.07h8.2M752.1 1474.43h8.2M738.3 1485.8h22M752.1 1497.2h8.2M752.1 1508.6h8.2M738.3 1520h22M752.1 1531.93h8.2M752.1 1543.87h8.2M738.3 1555.8h22M752.1 1561.3h8.2M752.1 1566.8h8.2M752.1 1572.3h8.2M738.3 1577.8h22M752.1 1583.44h8.2M752.1 1589.08h8.2M752.1 1594.72h8.2M752.1 1600.36h8.2M738.3 1606h22M752.1 1611.45h8.2M752.1 1616.9h8.2M752.1 1622.35h8.2M738.3 1627.8h22M752.1 1632.58h8.2M752.1 1637.36h8.2M752.1 1642.14h8.2M752.1 1646.92h8.2M738.3 1651.7h22M752.1 1657.8h8.2M738.3 1663.9h22M752.1 1669.37h8.2M752.1 1674.85h8.2M752.1 1680.32h8.2M738.3 1685.8h22" stroke="#15173a" stroke-width="1.9"/><rect x="762.3" y="1415.3" width="3.8" height="273" fill="#3a3a42"/><path d="M813.9 1418h6.500M813.9 1436.4h6.500M813.9 1454.2h6.500M813.9 1472h6.500M813.9 1490.3h6.500M813.9 1508h6.500M813.9 1525.8h6.500M813.9 1544.2h6.500M813.9 1562h6.500M813.9 1586h6.500M813.9 1606h6.500M813.9 1626h6.500M813.9 1646h6.500M813.9 1665.8h6.500M813.9 1685.8h6.500" stroke="#1d2044" stroke-width="1.600"/><path d="M819.2 1417.5v270" stroke="#1d2044" stroke-width="1.700" stroke-dasharray="1.300 2.250"/><rect x="820.1" y="1415.3" width="19.800" height="273" fill="#49524a"/><rect x="820.1" y="1415.3" width="19.800" height="19.500" fill="#524b46"/><circle cx="974" cy="941" r="13.2" fill="#f2fffb"/><path d="M967.4 952.43A13.2 13.2 0 1 1 980.6 952.43" fill="none" stroke="#000" stroke-width="5.6"/><path d="M967.4 952.43A13.2 13.2 0 0 1 961.76 945.94" fill="none" stroke="#2a2d52" stroke-width="5.6"/><circle cx="974" cy="981" r="13.2" fill="#f2fffb"/><path d="M967.4 992.43A13.2 13.2 0 1 1 980.6 992.43" fill="none" stroke="#000" stroke-width="5.6"/><path d="M967.4 992.43A13.2 13.2 0 0 1 960.82 981.69" fill="none" stroke="#2a2d52" stroke-width="5.6"/><g transform="translate(906.2 1182.9) scale(1)"><path d="M23.2 0C30 0 35 4.500 35.500 14C35.800 19 35.500 22 34.300 25.500L33.200 30.600l-1.200-1.600-1 2.300-1.400-1.900C29.500 32 31 34 33.500 35.200L38 37L38.700 47.800H0C1.500 41 6 38.500 12 36.800C16 35.500 18.300 34 18.500 31l-1.300-1.400-.8 1.700-1.600-2.700C12.500 25 11 21 10.900 15C10.800 5 16 0 23.200 0z" fill="#e4e338"/><path d="M39.700 34.800V32C39.700 28 40.800 26 43 26H46.500C48.700 26 49.800 28 49.800 32V34.800z" fill="#e4e338"/><path d="M42 32l1-3.700h3.500l1 3.700z" fill="#fff"/><rect x="39.700" y="36.100" width="10.100" height="1.800" fill="#e4e338"/><path d="M39.900 39.300H49.600C49.600 43 49 46.500 48.200 49L46.600 49.600C46.500 51.600 46.200 52.200 44.700 52.200C43.200 52.200 42.900 51.600 42.800 49.600L41.200 49C40.400 46.500 39.900 43 39.900 39.300z" fill="#e4e338"/></g><path d="M917.35 1318.4A31.6 31.6 0 1 1 945.05 1318.4" fill="none" stroke="#414141" stroke-width="7"/><path d="M931.2 1258.4A31.6 31.6 0 0 0 916.12 1262.23" fill="none" stroke="#fdfb35" stroke-width="6.4"/><path d="M921.61 1272.34L918.03 1265.74" stroke="#222" stroke-width="2"/><path d="M872.3 1417.8h22M886.1 1429.1h8.2M886.1 1440.4h8.2M872.3 1451.7h22M886.1 1463.07h8.2M886.1 1474.43h8.2M872.3 1485.8h22M886.1 1497.2h8.2M886.1 1508.6h8.2M872.3 1520h22M886.1 1531.93h8.2M886.1 1543.87h8.2M872.3 1555.8h22M886.1 1561.3h8.2M886.1 1566.8h8.2M886.1 1572.3h8.2M872.3 1577.8h22M886.1 1583.44h8.2M886.1 1589.08h8.2M886.1 1594.72h8.2M886.1 1600.36h8.2M872.3 1606h22M886.1 1611.45h8.2M886.1 1616.9h8.2M886.1 1622.35h8.2M872.3 1627.8h22M886.1 1632.58h8.2M886.1 1637.36h8.2M886.1 1642.14h8.2M886.1 1646.92h8.2M872.3 1651.7h22M886.1 1657.8h8.2M872.3 1663.9h22M886.1 1669.37h8.2M886.1 1674.85h8.2M886.1 1680.32h8.2M872.3 1685.8h22" stroke="#15173a" stroke-width="1.9"/><rect x="896.3" y="1415.3" width="3.8" height="273" fill="#3a3a42"/><path d="M947.9 1418h6.500M947.9 1436.4h6.500M947.9 1454.2h6.500M947.9 1472h6.500M947.9 1490.3h6.500M947.9 1508h6.500M947.9 1525.8h6.500M947.9 1544.2h6.500M947.9 1562h6.500M947.9 1586h6.500M947.9 1606h6.500M947.9 1626h6.500M947.9 1646h6.500M947.9 1665.8h6.500M947.9 1685.8h6.500" stroke="#1d2044" stroke-width="1.600"/><path d="M953.2 1417.5v270" stroke="#1d2044" stroke-width="1.700" stroke-dasharray="1.300 2.250"/><rect x="954.1" y="1415.3" width="19.800" height="273" fill="#49524a"/><rect x="954.1" y="1415.3" width="19.800" height="19.500" fill="#524b46"/><circle cx="1108" cy="941" r="13.2" fill="#f2fffb"/><path d="M1101.4 952.43A13.2 13.2 0 1 1 1114.6 952.43" fill="none" stroke="#000" stroke-width="5.6"/><path d="M1101.4 952.43A13.2 13.2 0 0 1 1095.76 945.94" fill="none" stroke="#2a2d52" stroke-width="5.6"/><circle cx="1108" cy="981" r="13.2" fill="#f2fffb"/><path d="M1101.4 992.43A13.2 13.2 0 1 1 1114.6 992.43" fill="none" stroke="#000" stroke-width="5.6"/><path d="M1101.4 992.43A13.2 13.2 0 0 1 1094.82 981.69" fill="none" stroke="#2a2d52" stroke-width="5.6"/><g transform="translate(1040.2 1182.9) scale(1)"><path d="M23.2 0C30 0 35 4.500 35.500 14C35.800 19 35.500 22 34.300 25.500L33.200 30.600l-1.200-1.600-1 2.300-1.400-1.900C29.500 32 31 34 33.500 35.200L38 37L38.700 47.800H0C1.500 41 6 38.500 12 36.800C16 35.500 18.300 34 18.500 31l-1.300-1.400-.8 1.700-1.600-2.700C12.500 25 11 21 10.900 15C10.800 5 16 0 23.200 0z" fill="#f5c42c"/><path d="M39.700 34.800V32C39.700 28 40.800 26 43 26H46.500C48.700 26 49.800 28 49.800 32V34.800z" fill="#f5c42c"/><path d="M42 32l1-3.700h3.500l1 3.700z" fill="#fff"/><rect x="39.700" y="36.100" width="10.100" height="1.800" fill="#f5c42c"/><path d="M39.900 39.300H49.600C49.600 43 49 46.500 48.200 49L46.600 49.600C46.500 51.600 46.200 52.200 44.700 52.200C43.200 52.200 42.900 51.600 42.800 49.600L41.200 49C40.400 46.500 39.900 43 39.900 39.300z" fill="#f5c42c"/></g><path d="M1051.35 1318.4A31.6 31.6 0 1 1 1079.05 1318.4" fill="none" stroke="#414141" stroke-width="7"/><path d="M1065.2 1258.4A31.6 31.6 0 0 1 1067.82 1258.51" fill="none" stroke="#fdfb35" stroke-width="6.4"/><path d="M1066.86 1269.97L1067.49 1262.49" stroke="#222" stroke-width="2"/><path d="M1006.3 1417.8h22M1020.1 1429.1h8.2M1020.1 1440.4h8.2M1006.3 1451.7h22M1020.1 1463.07h8.2M1020.1 1474.43h8.2M1006.3 1485.8h22M1020.1 1497.2h8.2M1020.1 1508.6h8.2M1006.3 1520h22M1020.1 1531.93h8.2M1020.1 1543.87h8.2M1006.3 1555.8h22M1020.1 1561.3h8.2M1020.1 1566.8h8.2M1020.1 1572.3h8.2M1006.3 1577.8h22M1020.1 1583.44h8.2M1020.1 1589.08h8.2M1020.1 1594.72h8.2M1020.1 1600.36h8.2M1006.3 1606h22M1020.1 1611.45h8.2M1020.1 1616.9h8.2M1020.1 1622.35h8.2M1006.3 1627.8h22M1020.1 1632.58h8.2M1020.1 1637.36h8.2M1020.1 1642.14h8.2M1020.1 1646.92h8.2M1006.3 1651.7h22M1020.1 1657.8h8.2M1006.3 1663.9h22M1020.1 1669.37h8.2M1020.1 1674.85h8.2M1020.1 1680.32h8.2M1006.3 1685.8h22" stroke="#15173a" stroke-width="1.9"/><rect x="1030.3" y="1415.3" width="3.8" height="273" fill="#3a3a42"/><path d="M1081.9 1418h6.500M1081.9 1436.4h6.500M1081.9 1454.2h6.500M1081.9 1472h6.500M1081.9 1490.3h6.500M1081.9 1508h6.500M1081.9 1525.8h6.500M1081.9 1544.2h6.500M1081.9 1562h6.500M1081.9 1586h6.500M1081.9 1606h6.500M1081.9 1626h6.500M1081.9 1646h6.500M1081.9 1665.8h6.500M1081.9 1685.8h6.500" stroke="#1d2044" stroke-width="1.600"/><path d="M1087.2 1417.5v270" stroke="#1d2044" stroke-width="1.700" stroke-dasharray="1.300 2.250"/><rect x="1088.1" y="1415.3" width="19.800" height="273" fill="#49524a"/><rect x="1088.1" y="1415.3" width="19.800" height="19.500" fill="#524b46"/><circle cx="1242" cy="941" r="13.2" fill="#f2fffb"/><path d="M1235.4 952.43A13.2 13.2 0 1 1 1248.6 952.43" fill="none" stroke="#000" stroke-width="5.6"/><path d="M1235.4 952.43A13.2 13.2 0 0 1 1229.76 945.94" fill="none" stroke="#2a2d52" stroke-width="5.6"/><circle cx="1242" cy="981" r="13.2" fill="#f2fffb"/><path d="M1235.4 992.43A13.2 13.2 0 1 1 1248.6 992.43" fill="none" stroke="#000" stroke-width="5.6"/><path d="M1235.4 992.43A13.2 13.2 0 0 1 1228.82 981.69" fill="none" stroke="#2a2d52" stroke-width="5.6"/><g transform="translate(1174.2 1182.9) scale(1)"><path d="M23.2 0C30 0 35 4.500 35.500 14C35.800 19 35.500 22 34.300 25.500L33.200 30.600l-1.200-1.600-1 2.300-1.400-1.900C29.500 32 31 34 33.500 35.200L38 37L38.700 47.800H0C1.500 41 6 38.500 12 36.800C16 35.500 18.300 34 18.500 31l-1.300-1.400-.8 1.700-1.600-2.700C12.500 25 11 21 10.900 15C10.800 5 16 0 23.200 0z" fill="#ffa226"/><path d="M39.700 34.800V32C39.700 28 40.800 26 43 26H46.500C48.700 26 49.800 28 49.800 32V34.800z" fill="#ffa226"/><path d="M42 32l1-3.700h3.500l1 3.700z" fill="#fff"/><rect x="39.700" y="36.100" width="10.100" height="1.800" fill="#ffa226"/><path d="M39.900 39.300H49.600C49.600 43 49 46.500 48.200 49L46.600 49.600C46.500 51.600 46.200 52.200 44.700 52.200C43.200 52.200 42.900 51.600 42.800 49.600L41.200 49C40.400 46.500 39.900 43 39.900 39.300z" fill="#ffa226"/></g><path d="M1185.35 1318.4A31.6 31.6 0 1 1 1213.05 1318.4" fill="none" stroke="#414141" stroke-width="7"/><path d="M1199.2 1258.4A31.6 31.6 0 0 1 1210.72 1260.57" fill="none" stroke="#fdfb35" stroke-width="6.4"/><path d="M1206.53 1271.28L1209.26 1264.3" stroke="#222" stroke-width="2"/><path d="M1140.3 1417.8h22M1154.1 1429.1h8.2M1154.1 1440.4h8.2M1140.3 1451.7h22M1154.1 1463.07h8.2M1154.1 1474.43h8.2M1140.3 1485.8h22M1154.1 1497.2h8.2M1154.1 1508.6h8.2M1140.3 1520h22M1154.1 1531.93h8.2M1154.1 1543.87h8.2M1140.3 1555.8h22M1154.1 1561.3h8.2M1154.1 1566.8h8.2M1154.1 1572.3h8.2M1140.3 1577.8h22M1154.1 1583.44h8.2M1154.1 1589.08h8.2M1154.1 1594.72h8.2M1154.1 1600.36h8.2M1140.3 1606h22M1154.1 1611.45h8.2M1154.1 1616.9h8.2M1154.1 1622.35h8.2M1140.3 1627.8h22M1154.1 1632.58h8.2M1154.1 1637.36h8.2M1154.1 1642.14h8.2M1154.1 1646.92h8.2M1140.3 1651.7h22M1154.1 1657.8h8.2M1140.3 1663.9h22M1154.1 1669.37h8.2M1154.1 1674.85h8.2M1154.1 1680.32h8.2M1140.3 1685.8h22" stroke="#15173a" stroke-width="1.9"/><rect x="1164.3" y="1415.3" width="3.8" height="273" fill="#3a3a42"/><path d="M1215.9 1418h6.500M1215.9 1436.4h6.500M1215.9 1454.2h6.500M1215.9 1472h6.500M1215.9 1490.3h6.500M1215.9 1508h6.500M1215.9 1525.8h6.500M1215.9 1544.2h6.500M1215.9 1562h6.500M1215.9 1586h6.500M1215.9 1606h6.500M1215.9 1626h6.500M1215.9 1646h6.500M1215.9 1665.8h6.500M1215.9 1685.8h6.500" stroke="#1d2044" stroke-width="1.600"/><path d="M1221.2 1417.5v270" stroke="#1d2044" stroke-width="1.700" stroke-dasharray="1.300 2.250"/><rect x="1222.1" y="1415.3" width="19.800" height="273" fill="#49524a"/><rect x="1222.1" y="1415.3" width="19.800" height="19.500" fill="#524b46"/><circle cx="1376" cy="941" r="13.2" fill="#f2fffb"/><path d="M1369.4 952.43A13.2 13.2 0 1 1 1382.6 952.43" fill="none" stroke="#000" stroke-width="5.6"/><path d="M1369.4 952.43A13.2 13.2 0 0 1 1363.76 945.94" fill="none" stroke="#2a2d52" stroke-width="5.6"/><circle cx="1376" cy="981" r="13.2" fill="#f2fffb"/><path d="M1369.4 992.43A13.2 13.2 0 1 1 1382.6 992.43" fill="none" stroke="#000" stroke-width="5.6"/><path d="M1369.4 992.43A13.2 13.2 0 0 1 1362.82 981.69" fill="none" stroke="#2a2d52" stroke-width="5.6"/><g transform="translate(1308.2 1182.9) scale(1)"><path d="M23.2 0C30 0 35 4.500 35.500 14C35.800 19 35.500 22 34.300 25.500L33.200 30.600l-1.200-1.600-1 2.300-1.400-1.900C29.500 32 31 34 33.500 35.200L38 37L38.700 47.800H0C1.500 41 6 38.500 12 36.800C16 35.500 18.300 34 18.500 31l-1.300-1.400-.8 1.700-1.600-2.700C12.500 25 11 21 10.900 15C10.800 5 16 0 23.200 0z" fill="#ff7b2b"/><path d="M39.700 34.800V32C39.700 28 40.800 26 43 26H46.500C48.700 26 49.800 28 49.800 32V34.800z" fill="#ff7b2b"/><path d="M42 32l1-3.700h3.500l1 3.700z" fill="#fff"/><rect x="39.700" y="36.100" width="10.100" height="1.800" fill="#ff7b2b"/><path d="M39.900 39.300H49.600C49.600 43 49 46.500 48.200 49L46.600 49.600C46.500 51.600 46.200 52.200 44.700 52.200C43.200 52.200 42.900 51.600 42.800 49.600L41.200 49C40.400 46.500 39.900 43 39.900 39.300z" fill="#ff7b2b"/></g><path d="M1319.35 1318.4A31.6 31.6 0 1 1 1347.05 1318.4" fill="none" stroke="#414141" stroke-width="7"/><path d="M1333.2 1258.4A31.6 31.6 0 0 1 1357.36 1269.64" fill="none" stroke="#fdfb35" stroke-width="6.4"/><path d="M1348.57 1277.05L1354.3 1272.21" stroke="#222" stroke-width="2"/><path d="M1274.3 1417.8h22M1288.1 1429.1h8.2M1288.1 1440.4h8.2M1274.3 1451.7h22M1288.1 1463.07h8.2M1288.1 1474.43h8.2M1274.3 1485.8h22M1288.1 1497.2h8.2M1288.1 1508.6h8.2M1274.3 1520h22M1288.1 1531.93h8.2M1288.1 1543.87h8.2M1274.3 1555.8h22M1288.1 1561.3h8.2M1288.1 1566.8h8.2M1288.1 1572.3h8.2M1274.3 1577.8h22M1288.1 1583.44h8.2M1288.1 1589.08h8.2M1288.1 1594.72h8.2M1288.1 1600.36h8.2M1274.3 1606h22M1288.1 1611.45h8.2M1288.1 1616.9h8.2M1288.1 1622.35h8.2M1274.3 1627.8h22M1288.1 1632.58h8.2M1288.1 1637.36h8.2M1288.1 1642.14h8.2M1288.1 1646.92h8.2M1274.3 1651.7h22M1288.1 1657.8h8.2M1274.3 1663.9h22M1288.1 1669.37h8.2M1288.1 1674.85h8.2M1288.1 1680.32h8.2M1274.3 1685.8h22" stroke="#15173a" stroke-width="1.9"/><rect x="1298.3" y="1415.3" width="3.8" height="273" fill="#3a3a42"/><path d="M1349.9 1418h6.500M1349.9 1436.4h6.500M1349.9 1454.2h6.500M1349.9 1472h6.500M1349.9 1490.3h6.500M1349.9 1508h6.500M1349.9 1525.8h6.500M1349.9 1544.2h6.500M1349.9 1562h6.500M1349.9 1586h6.500M1349.9 1606h6.500M1349.9 1626h6.500M1349.9 1646h6.500M1349.9 1665.8h6.500M1349.9 1685.8h6.500" stroke="#1d2044" stroke-width="1.600"/><path d="M1355.2 1417.5v270" stroke="#1d2044" stroke-width="1.700" stroke-dasharray="1.300 2.250"/><rect x="1356.1" y="1415.3" width="19.800" height="273" fill="#49524a"/><rect x="1356.1" y="1415.3" width="19.800" height="19.500" fill="#524b46"/><circle cx="1510" cy="941" r="13.2" fill="#f2fffb"/><path d="M1503.4 952.43A13.2 13.2 0 1 1 1516.6 952.43" fill="none" stroke="#000" stroke-width="5.6"/><path d="M1503.4 952.43A13.2 13.2 0 0 1 1497.76 945.94" fill="none" stroke="#2a2d52" stroke-width="5.6"/><circle cx="1510" cy="981" r="13.2" fill="#f2fffb"/><path d="M1503.4 992.43A13.2 13.2 0 1 1 1516.6 992.43" fill="none" stroke="#000" stroke-width="5.6"/><path d="M1503.4 992.43A13.2 13.2 0 0 1 1496.82 981.69" fill="none" stroke="#2a2d52" stroke-width="5.6"/><g transform="translate(1442.2 1182.9) scale(1)"><path d="M23.2 0C30 0 35 4.500 35.500 14C35.800 19 35.500 22 34.300 25.500L33.200 30.600l-1.200-1.600-1 2.300-1.400-1.900C29.500 32 31 34 33.500 35.200L38 37L38.700 47.800H0C1.500 41 6 38.500 12 36.800C16 35.500 18.300 34 18.500 31l-1.300-1.400-.8 1.700-1.600-2.700C12.500 25 11 21 10.900 15C10.800 5 16 0 23.200 0z" fill="#ff5b37"/><path d="M39.700 34.800V32C39.700 28 40.800 26 43 26H46.500C48.700 26 49.800 28 49.800 32V34.800z" fill="#ff5b37"/><path d="M42 32l1-3.700h3.500l1 3.700z" fill="#fff"/><rect x="39.700" y="36.100" width="10.100" height="1.800" fill="#ff5b37"/><path d="M39.900 39.300H49.600C49.600 43 49 46.500 48.200 49L46.600 49.600C46.500 51.600 46.200 52.200 44.700 52.200C43.200 52.200 42.900 51.600 42.800 49.600L41.200 49C40.400 46.500 39.900 43 39.900 39.300z" fill="#ff5b37"/></g><path d="M1453.35 1318.4A31.6 31.6 0 1 1 1481.05 1318.4" fill="none" stroke="#414141" stroke-width="7"/><path d="M1467.2 1258.4A31.6 31.6 0 0 0 1436.06 1295.35" fill="none" stroke="#fdfb35" stroke-width="6.4"/><path d="M1447.39 1293.4L1440 1294.67" stroke="#222" stroke-width="2"/><path d="M1408.3 1417.8h22M1422.1 1429.1h8.2M1422.1 1440.4h8.2M1408.3 1451.7h22M1422.1 1463.07h8.2M1422.1 1474.43h8.2M1408.3 1485.8h22M1422.1 1497.2h8.2M1422.1 1508.6h8.2M1408.3 1520h22M1422.1 1531.93h8.2M1422.1 1543.87h8.2M1408.3 1555.8h22M1422.1 1561.3h8.2M1422.1 1566.8h8.2M1422.1 1572.3h8.2M1408.3 1577.8h22M1422.1 1583.44h8.2M1422.1 1589.08h8.2M1422.1 1594.72h8.2M1422.1 1600.36h8.2M1408.3 1606h22M1422.1 1611.45h8.2M1422.1 1616.9h8.2M1422.1 1622.35h8.2M1408.3 1627.8h22M1422.1 1632.58h8.2M1422.1 1637.36h8.2M1422.1 1642.14h8.2M1422.1 1646.92h8.2M1408.3 1651.7h22M1422.1 1657.8h8.2M1408.3 1663.9h22M1422.1 1669.37h8.2M1422.1 1674.85h8.2M1422.1 1680.32h8.2M1408.3 1685.8h22" stroke="#15173a" stroke-width="1.9"/><rect x="1432.3" y="1415.3" width="3.8" height="273" fill="#3a3a42"/><path d="M1483.9 1418h6.500M1483.9 1436.4h6.500M1483.9 1454.2h6.500M1483.9 1472h6.500M1483.9 1490.3h6.500M1483.9 1508h6.500M1483.9 1525.8h6.500M1483.9 1544.2h6.500M1483.9 1562h6.500M1483.9 1586h6.500M1483.9 1606h6.500M1483.9 1626h6.500M1483.9 1646h6.500M1483.9 1665.8h6.500M1483.9 1685.8h6.500" stroke="#1d2044" stroke-width="1.600"/><path d="M1489.2 1417.5v270" stroke="#1d2044" stroke-width="1.700" stroke-dasharray="1.300 2.250"/><rect x="1490.1" y="1415.3" width="19.800" height="273" fill="#49524a"/><rect x="1490.1" y="1415.3" width="19.800" height="19.500" fill="#524b46"/><circle cx="1644" cy="941" r="13.2" fill="#f2fffb"/><path d="M1637.4 952.43A13.2 13.2 0 1 1 1650.6 952.43" fill="none" stroke="#000" stroke-width="5.6"/><path d="M1637.4 952.43A13.2 13.2 0 0 1 1631.76 945.94" fill="none" stroke="#2a2d52" stroke-width="5.6"/><circle cx="1644" cy="981" r="13.2" fill="#f2fffb"/><path d="M1637.4 992.43A13.2 13.2 0 1 1 1650.6 992.43" fill="none" stroke="#000" stroke-width="5.6"/><path d="M1637.4 992.43A13.2 13.2 0 0 1 1630.82 981.69" fill="none" stroke="#2a2d52" stroke-width="5.6"/><g transform="translate(1576.2 1182.9) scale(1)"><path d="M23.2 0C30 0 35 4.500 35.500 14C35.800 19 35.500 22 34.300 25.500L33.200 30.600l-1.200-1.600-1 2.300-1.400-1.900C29.500 32 31 34 33.500 35.200L38 37L38.700 47.800H0C1.500 41 6 38.500 12 36.800C16 35.500 18.300 34 18.500 31l-1.300-1.400-.8 1.700-1.600-2.700C12.500 25 11 21 10.900 15C10.800 5 16 0 23.200 0z" fill="#ff46c6"/><path d="M39.700 34.800V32C39.700 28 40.800 26 43 26H46.500C48.700 26 49.800 28 49.800 32V34.800z" fill="#ff46c6"/><path d="M42 32l1-3.700h3.500l1 3.700z" fill="#fff"/><rect x="39.700" y="36.100" width="10.100" height="1.800" fill="#ff46c6"/><path d="M39.900 39.300H49.600C49.600 43 49 46.500 48.200 49L46.600 49.600C46.500 51.600 46.200 52.200 44.700 52.200C43.200 52.200 42.900 51.600 42.800 49.600L41.200 49C40.400 46.500 39.900 43 39.900 39.300z" fill="#ff46c6"/></g><path d="M1587.35 1318.4A31.6 31.6 0 1 1 1615.05 1318.4" fill="none" stroke="#414141" stroke-width="7"/><path d="M1601.2 1258.4A31.6 31.6 0 0 1 1632.1 1296.64" fill="none" stroke="#fdfb35" stroke-width="6.4"/><path d="M1620.85 1294.22L1628.18 1295.8" stroke="#222" stroke-width="2"/><path d="M1542.3 1417.8h22M1556.1 1429.1h8.2M1556.1 1440.4h8.2M1542.3 1451.7h22M1556.1 1463.07h8.2M1556.1 1474.43h8.2M1542.3 1485.8h22M1556.1 1497.2h8.2M1556.1 1508.6h8.2M1542.3 1520h22M1556.1 1531.93h8.2M1556.1 1543.87h8.2M1542.3 1555.8h22M1556.1 1561.3h8.2M1556.1 1566.8h8.2M1556.1 1572.3h8.2M1542.3 1577.8h22M1556.1 1583.44h8.2M1556.1 1589.08h8.2M1556.1 1594.72h8.2M1556.1 1600.36h8.2M1542.3 1606h22M1556.1 1611.45h8.2M1556.1 1616.9h8.2M1556.1 1622.35h8.2M1542.3 1627.8h22M1556.1 1632.58h8.2M1556.1 1637.36h8.2M1556.1 1642.14h8.2M1556.1 1646.92h8.2M1542.3 1651.7h22M1556.1 1657.8h8.2M1542.3 1663.9h22M1556.1 1669.37h8.2M1556.1 1674.85h8.2M1556.1 1680.32h8.2M1542.3 1685.8h22" stroke="#15173a" stroke-width="1.9"/><rect x="1566.3" y="1415.3" width="3.8" height="273" fill="#3a3a42"/><path d="M1617.9 1418h6.500M1617.9 1436.4h6.500M1617.9 1454.2h6.500M1617.9 1472h6.500M1617.9 1490.3h6.500M1617.9 1508h6.500M1617.9 1525.8h6.500M1617.9 1544.2h6.500M1617.9 1562h6.500M1617.9 1586h6.500M1617.9 1606h6.500M1617.9 1626h6.500M1617.9 1646h6.500M1617.9 1665.8h6.500M1617.9 1685.8h6.500" stroke="#1d2044" stroke-width="1.600"/><path d="M1623.2 1417.5v270" stroke="#1d2044" stroke-width="1.700" stroke-dasharray="1.300 2.250"/><rect x="1624.1" y="1415.3" width="19.800" height="273" fill="#49524a"/><rect x="1624.1" y="1415.3" width="19.800" height="19.500" fill="#524b46"/><circle cx="1778" cy="941" r="13.2" fill="#f2fffb"/><path d="M1771.4 952.43A13.2 13.2 0 1 1 1784.6 952.43" fill="none" stroke="#000" stroke-width="5.6"/><path d="M1771.4 952.43A13.2 13.2 0 0 1 1765.76 945.94" fill="none" stroke="#2a2d52" stroke-width="5.6"/><circle cx="1778" cy="981" r="13.2" fill="#f2fffb"/><path d="M1771.4 992.43A13.2 13.2 0 1 1 1784.6 992.43" fill="none" stroke="#000" stroke-width="5.6"/><path d="M1771.4 992.43A13.2 13.2 0 0 1 1764.82 981.69" fill="none" stroke="#2a2d52" stroke-width="5.6"/><g transform="translate(1710.2 1182.9) scale(1)"><path d="M23.2 0C30 0 35 4.500 35.500 14C35.800 19 35.500 22 34.300 25.500L33.200 30.600l-1.200-1.600-1 2.300-1.400-1.900C29.500 32 31 34 33.500 35.200L38 37L38.700 47.800H0C1.500 41 6 38.500 12 36.800C16 35.500 18.300 34 18.500 31l-1.300-1.400-.8 1.700-1.600-2.700C12.500 25 11 21 10.900 15C10.800 5 16 0 23.200 0z" fill="#ff54f3"/><path d="M39.700 34.800V32C39.700 28 40.800 26 43 26H46.500C48.700 26 49.800 28 49.800 32V34.800z" fill="#ff54f3"/><path d="M42 32l1-3.700h3.500l1 3.700z" fill="#fff"/><rect x="39.700" y="36.100" width="10.100" height="1.800" fill="#ff54f3"/><path d="M39.900 39.300H49.600C49.600 43 49 46.500 48.200 49L46.600 49.600C46.500 51.600 46.200 52.200 44.700 52.200C43.200 52.200 42.900 51.600 42.800 49.600L41.200 49C40.400 46.500 39.900 43 39.900 39.300z" fill="#ff54f3"/></g><path d="M1721.35 1318.4A31.6 31.6 0 1 1 1749.05 1318.4" fill="none" stroke="#414141" stroke-width="7"/><path d="M1735.2 1258.4A31.6 31.6 0 0 0 1720.36 1317.9" fill="none" stroke="#fdfb35" stroke-width="6.4"/><path d="M1725.76 1307.75L1722.24 1314.37" stroke="#222" stroke-width="2"/><path d="M1676.3 1417.8h22M1690.1 1429.1h8.2M1690.1 1440.4h8.2M1676.3 1451.7h22M1690.1 1463.07h8.2M1690.1 1474.43h8.2M1676.3 1485.8h22M1690.1 1497.2h8.2M1690.1 1508.6h8.2M1676.3 1520h22M1690.1 1531.93h8.2M1690.1 1543.87h8.2M1676.3 1555.8h22M1690.1 1561.3h8.2M1690.1 1566.8h8.2M1690.1 1572.3h8.2M1676.3 1577.8h22M1690.1 1583.44h8.2M1690.1 1589.08h8.2M1690.1 1594.72h8.2M1690.1 1600.36h8.2M1676.3 1606h22M1690.1 1611.45h8.2M1690.1 1616.9h8.2M1690.1 1622.35h8.2M1676.3 1627.8h22M1690.1 1632.58h8.2M1690.1 1637.36h8.2M1690.1 1642.14h8.2M1690.1 1646.92h8.2M1676.3 1651.7h22M1690.1 1657.8h8.2M1676.3 1663.9h22M1690.1 1669.37h8.2M1690.1 1674.85h8.2M1690.1 1680.32h8.2M1676.3 1685.8h22" stroke="#15173a" stroke-width="1.9"/><rect x="1700.3" y="1415.3" width="3.8" height="273" fill="#3a3a42"/><path d="M1751.9 1418h6.500M1751.9 1436.4h6.500M1751.9 1454.2h6.500M1751.9 1472h6.500M1751.9 1490.3h6.500M1751.9 1508h6.500M1751.9 1525.8h6.500M1751.9 1544.2h6.500M1751.9 1562h6.500M1751.9 1586h6.500M1751.9 1606h6.500M1751.9 1626h6.500M1751.9 1646h6.500M1751.9 1665.8h6.500M1751.9 1685.8h6.500" stroke="#1d2044" stroke-width="1.600"/><path d="M1757.2 1417.5v270" stroke="#1d2044" stroke-width="1.700" stroke-dasharray="1.300 2.250"/><rect x="1758.1" y="1415.3" width="19.800" height="273" fill="#49524a"/><rect x="1758.1" y="1415.3" width="19.800" height="19.500" fill="#524b46"/><circle cx="1912" cy="941" r="13.2" fill="#f2fffb"/><path d="M1905.4 952.43A13.2 13.2 0 1 1 1918.6 952.43" fill="none" stroke="#000" stroke-width="5.6"/><path d="M1905.4 952.43A13.2 13.2 0 0 1 1899.76 945.94" fill="none" stroke="#2a2d52" stroke-width="5.6"/><circle cx="1912" cy="981" r="13.2" fill="#f2fffb"/><path d="M1905.4 992.43A13.2 13.2 0 1 1 1918.6 992.43" fill="none" stroke="#000" stroke-width="5.6"/><path d="M1905.4 992.43A13.2 13.2 0 0 1 1898.82 981.69" fill="none" stroke="#2a2d52" stroke-width="5.6"/><g transform="translate(1844.2 1182.9) scale(1)"><path d="M23.2 0C30 0 35 4.500 35.500 14C35.800 19 35.500 22 34.300 25.500L33.200 30.600l-1.200-1.600-1 2.300-1.400-1.900C29.500 32 31 34 33.500 35.200L38 37L38.700 47.800H0C1.500 41 6 38.500 12 36.800C16 35.500 18.300 34 18.500 31l-1.300-1.400-.8 1.700-1.600-2.700C12.500 25 11 21 10.900 15C10.800 5 16 0 23.200 0z" fill="#f257f5"/><path d="M39.700 34.800V32C39.700 28 40.800 26 43 26H46.500C48.700 26 49.800 28 49.800 32V34.800z" fill="#f257f5"/><path d="M42 32l1-3.700h3.500l1 3.700z" fill="#fff"/><rect x="39.700" y="36.100" width="10.100" height="1.800" fill="#f257f5"/><path d="M39.900 39.300H49.600C49.600 43 49 46.500 48.200 49L46.600 49.600C46.500 51.600 46.200 52.200 44.700 52.200C43.200 52.200 42.900 51.600 42.800 49.600L41.200 49C40.400 46.500 39.900 43 39.900 39.300z" fill="#f257f5"/></g><path d="M1855.35 1318.4A31.6 31.6 0 1 1 1883.05 1318.4" fill="none" stroke="#414141" stroke-width="7"/><path d="M1869.2 1258.4A31.6 31.6 0 0 1 1885.18 1317.26" fill="none" stroke="#fdfb35" stroke-width="6.4"/><path d="M1879.36 1307.34L1883.16 1313.81" stroke="#222" stroke-width="2"/><path d="M1810.3 1417.8h22M1824.1 1429.1h8.2M1824.1 1440.4h8.2M1810.3 1451.7h22M1824.1 1463.07h8.2M1824.1 1474.43h8.2M1810.3 1485.8h22M1824.1 1497.2h8.2M1824.1 1508.6h8.2M1810.3 1520h22M1824.1 1531.93h8.2M1824.1 1543.87h8.2M1810.3 1555.8h22M1824.1 1561.3h8.2M1824.1 1566.8h8.2M1824.1 1572.3h8.2M1810.3 1577.8h22M1824.1 1583.44h8.2M1824.1 1589.08h8.2M1824.1 1594.72h8.2M1824.1 1600.36h8.2M1810.3 1606h22M1824.1 1611.45h8.2M1824.1 1616.9h8.2M1824.1 1622.35h8.2M1810.3 1627.8h22M1824.1 1632.58h8.2M1824.1 1637.36h8.2M1824.1 1642.14h8.2M1824.1 1646.92h8.2M1810.3 1651.7h22M1824.1 1657.8h8.2M1810.3 1663.9h22M1824.1 1669.37h8.2M1824.1 1674.85h8.2M1824.1 1680.32h8.2M1810.3 1685.8h22" stroke="#15173a" stroke-width="1.9"/><rect x="1834.3" y="1415.3" width="3.8" height="273" fill="#3a3a42"/><path d="M1885.9 1418h6.500M1885.9 1436.4h6.500M1885.9 1454.2h6.500M1885.9 1472h6.500M1885.9 1490.3h6.500M1885.9 1508h6.500M1885.9 1525.8h6.500M1885.9 1544.2h6.500M1885.9 1562h6.500M1885.9 1586h6.500M1885.9 1606h6.500M1885.9 1626h6.500M1885.9 1646h6.500M1885.9 1665.8h6.500M1885.9 1685.8h6.500" stroke="#1d2044" stroke-width="1.600"/><path d="M1891.2 1417.5v270" stroke="#1d2044" stroke-width="1.700" stroke-dasharray="1.300 2.250"/><rect x="1892.1" y="1415.3" width="19.800" height="273" fill="#49524a"/><rect x="1892.1" y="1415.3" width="19.800" height="19.500" fill="#524b46"/><circle cx="2046" cy="941" r="13.2" fill="#f2fffb"/><path d="M2039.4 952.43A13.2 13.2 0 1 1 2052.6 952.43" fill="none" stroke="#000" stroke-width="5.6"/><path d="M2039.4 952.43A13.2 13.2 0 0 1 2033.76 945.94" fill="none" stroke="#2a2d52" stroke-width="5.6"/><circle cx="2046" cy="981" r="13.2" fill="#f2fffb"/><path d="M2039.4 992.43A13.2 13.2 0 1 1 2052.6 992.43" fill="none" stroke="#000" stroke-width="5.6"/><path d="M2039.4 992.43A13.2 13.2 0 0 1 2032.82 981.69" fill="none" stroke="#2a2d52" stroke-width="5.6"/><g transform="translate(1978.2 1182.9) scale(1)"><path d="M23.2 0C30 0 35 4.500 35.500 14C35.800 19 35.500 22 34.300 25.500L33.200 30.600l-1.200-1.600-1 2.300-1.400-1.900C29.500 32 31 34 33.500 35.200L38 37L38.700 47.800H0C1.500 41 6 38.500 12 36.800C16 35.500 18.300 34 18.500 31l-1.300-1.400-.8 1.700-1.600-2.700C12.500 25 11 21 10.900 15C10.800 5 16 0 23.200 0z" fill="#d45df7"/><path d="M39.700 34.800V32C39.700 28 40.800 26 43 26H46.500C48.700 26 49.800 28 49.800 32V34.800z" fill="#d45df7"/><path d="M42 32l1-3.700h3.500l1 3.700z" fill="#fff"/><rect x="39.700" y="36.100" width="10.100" height="1.800" fill="#d45df7"/><path d="M39.900 39.300H49.600C49.600 43 49 46.500 48.200 49L46.600 49.600C46.500 51.600 46.200 52.200 44.700 52.200C43.200 52.200 42.900 51.600 42.800 49.600L41.200 49C40.400 46.500 39.900 43 39.900 39.300z" fill="#d45df7"/></g><path d="M1989.35 1318.4A31.6 31.6 0 1 1 2017.05 1318.4" fill="none" stroke="#414141" stroke-width="7"/><path d="M2003.2 1258.4A31.6 31.6 0 0 0 1988.36 1317.9" fill="none" stroke="#fdfb35" stroke-width="6.4"/><path d="M1993.76 1307.75L1990.24 1314.37" stroke="#222" stroke-width="2"/><path d="M1944.3 1417.8h22M1958.1 1429.1h8.2M1958.1 1440.4h8.2M1944.3 1451.7h22M1958.1 1463.07h8.2M1958.1 1474.43h8.2M1944.3 1485.8h22M1958.1 1497.2h8.2M1958.1 1508.6h8.2M1944.3 1520h22M1958.1 1531.93h8.2M1958.1 1543.87h8.2M1944.3 1555.8h22M1958.1 1561.3h8.2M1958.1 1566.8h8.2M1958.1 1572.3h8.2M1944.3 1577.8h22M1958.1 1583.44h8.2M1958.1 1589.08h8.2M1958.1 1594.72h8.2M1958.1 1600.36h8.2M1944.3 1606h22M1958.1 1611.45h8.2M1958.1 1616.9h8.2M1958.1 1622.35h8.2M1944.3 1627.8h22M1958.1 1632.58h8.2M1958.1 1637.36h8.2M1958.1 1642.14h8.2M1958.1 1646.92h8.2M1944.3 1651.7h22M1958.1 1657.8h8.2M1944.3 1663.9h22M1958.1 1669.37h8.2M1958.1 1674.85h8.2M1958.1 1680.32h8.2M1944.3 1685.8h22" stroke="#15173a" stroke-width="1.9"/><rect x="1968.3" y="1415.3" width="3.8" height="273" fill="#3a3a42"/><path d="M2019.9 1418h6.500M2019.9 1436.4h6.500M2019.9 1454.2h6.500M2019.9 1472h6.500M2019.9 1490.3h6.500M2019.9 1508h6.500M2019.9 1525.8h6.500M2019.9 1544.2h6.500M2019.9 1562h6.500M2019.9 1586h6.500M2019.9 1606h6.500M2019.9 1626h6.500M2019.9 1646h6.500M2019.9 1665.8h6.500M2019.9 1685.8h6.500" stroke="#1d2044" stroke-width="1.600"/><path d="M2025.2 1417.5v270" stroke="#1d2044" stroke-width="1.700" stroke-dasharray="1.300 2.250"/><rect x="2026.1" y="1415.3" width="19.800" height="273" fill="#49524a"/><rect x="2026.1" y="1415.3" width="19.800" height="19.500" fill="#524b46"/><circle cx="2180" cy="941" r="13.2" fill="#f2fffb"/><path d="M2173.4 952.43A13.2 13.2 0 1 1 2186.6 952.43" fill="none" stroke="#000" stroke-width="5.6"/><path d="M2173.4 952.43A13.2 13.2 0 0 1 2167.76 945.94" fill="none" stroke="#2a2d52" stroke-width="5.6"/><circle cx="2180" cy="981" r="13.2" fill="#f2fffb"/><path d="M2173.4 992.43A13.2 13.2 0 1 1 2186.6 992.43" fill="none" stroke="#000" stroke-width="5.6"/><path d="M2173.4 992.43A13.2 13.2 0 0 1 2166.82 981.69" fill="none" stroke="#2a2d52" stroke-width="5.6"/><g transform="translate(2112.2 1182.9) scale(1)"><path d="M23.2 0C30 0 35 4.500 35.500 14C35.800 19 35.500 22 34.300 25.500L33.200 30.600l-1.200-1.600-1 2.300-1.400-1.900C29.500 32 31 34 33.500 35.200L38 37L38.700 47.800H0C1.500 41 6 38.500 12 36.800C16 35.500 18.300 34 18.500 31l-1.300-1.400-.8 1.700-1.600-2.700C12.500 25 11 21 10.900 15C10.800 5 16 0 23.200 0z" fill="#b17dfa"/><path d="M39.700 34.800V32C39.700 28 40.800 26 43 26H46.500C48.700 26 49.800 28 49.800 32V34.800z" fill="#b17dfa"/><path d="M42 32l1-3.700h3.500l1 3.700z" fill="#fff"/><rect x="39.700" y="36.100" width="10.100" height="1.800" fill="#b17dfa"/><path d="M39.900 39.300H49.600C49.600 43 49 46.500 48.200 49L46.600 49.600C46.500 51.600 46.200 52.200 44.700 52.200C43.200 52.200 42.900 51.600 42.800 49.600L41.200 49C40.400 46.500 39.900 43 39.900 39.300z" fill="#b17dfa"/></g><path d="M2123.35 1318.4A31.6 31.6 0 1 1 2151.05 1318.4" fill="none" stroke="#414141" stroke-width="7"/><path d="M2137.2 1258.4A31.6 31.6 0 0 1 2153.18 1317.26" fill="none" stroke="#fdfb35" stroke-width="6.4"/><path d="M2147.36 1307.34L2151.16 1313.81" stroke="#222" stroke-width="2"/><path d="M2078.3 1417.8h22M2092.1 1429.1h8.2M2092.1 1440.4h8.2M2078.3 1451.7h22M2092.1 1463.07h8.2M2092.1 1474.43h8.2M2078.3 1485.8h22M2092.1 1497.2h8.2M2092.1 1508.6h8.2M2078.3 1520h22M2092.1 1531.93h8.2M2092.1 1543.87h8.2M2078.3 1555.8h22M2092.1 1561.3h8.2M2092.1 1566.8h8.2M2092.1 1572.3h8.2M2078.3 1577.8h22M2092.1 1583.44h8.2M2092.1 1589.08h8.2M2092.1 1594.72h8.2M2092.1 1600.36h8.2M2078.3 1606h22M2092.1 1611.45h8.2M2092.1 1616.9h8.2M2092.1 1622.35h8.2M2078.3 1627.8h22M2092.1 1632.58h8.2M2092.1 1637.36h8.2M2092.1 1642.14h8.2M2092.1 1646.92h8.2M2078.3 1651.7h22M2092.1 1657.8h8.2M2078.3 1663.9h22M2092.1 1669.37h8.2M2092.1 1674.85h8.2M2092.1 1680.32h8.2M2078.3 1685.8h22" stroke="#15173a" stroke-width="1.9"/><rect x="2102.3" y="1415.3" width="3.8" height="273" fill="#3a3a42"/><path d="M2153.9 1418h6.500M2153.9 1436.4h6.500M2153.9 1454.2h6.500M2153.9 1472h6.500M2153.9 1490.3h6.500M2153.9 1508h6.500M2153.9 1525.8h6.500M2153.9 1544.2h6.500M2153.9 1562h6.500M2153.9 1586h6.500M2153.9 1606h6.500M2153.9 1626h6.500M2153.9 1646h6.500M2153.9 1665.8h6.500M2153.9 1685.8h6.500" stroke="#1d2044" stroke-width="1.600"/><path d="M2159.2 1417.5v270" stroke="#1d2044" stroke-width="1.700" stroke-dasharray="1.300 2.250"/><rect x="2160.1" y="1415.3" width="19.800" height="273" fill="#49524a"/><rect x="2160.1" y="1415.3" width="19.800" height="19.500" fill="#524b46"/><circle cx="2314" cy="941" r="13.2" fill="#f2fffb"/><path d="M2307.4 952.43A13.2 13.2 0 1 1 2320.6 952.43" fill="none" stroke="#000" stroke-width="5.6"/><path d="M2307.4 952.43A13.2 13.2 0 0 1 2301.76 945.94" fill="none" stroke="#2a2d52" stroke-width="5.6"/><circle cx="2314" cy="981" r="13.2" fill="#f2fffb"/><path d="M2307.4 992.43A13.2 13.2 0 1 1 2320.6 992.43" fill="none" stroke="#000" stroke-width="5.6"/><path d="M2307.4 992.43A13.2 13.2 0 0 1 2300.82 981.69" fill="none" stroke="#2a2d52" stroke-width="5.6"/><g transform="translate(2245.7 1183) scale(1)"><rect x="1" y="1" width="46" height="20.500" fill="none" stroke="#8b8df5" stroke-width="1.800"/><path d="M1 12.500h46" stroke="#8b8df5" stroke-width="1.500"/><rect x="4.500" y="15" width="39" height="3.300" fill="#8b8df5"/><rect x="5" y="4" width="2" height="2" fill="#8b8df5"/><rect x="9" y="4" width="2" height="2" fill="#8b8df5"/><rect x="14.5" y="4" width="2" height="2" fill="#8b8df5"/><rect x="18.5" y="4" width="2" height="2" fill="#8b8df5"/><rect x="22.5" y="4" width="2" height="2" fill="#8b8df5"/><rect x="29.5" y="4" width="2" height="2" fill="#8b8df5"/><rect x="33.5" y="4" width="2" height="2" fill="#8b8df5"/><rect x="37.5" y="4" width="2" height="2" fill="#8b8df5"/><rect x="41.5" y="4" width="2" height="2" fill="#8b8df5"/><rect x="5" y="8" width="2" height="2" fill="#8b8df5"/><rect x="14.5" y="8" width="2" height="2" fill="#8b8df5"/><rect x="18.5" y="8" width="2" height="2" fill="#8b8df5"/><rect x="22.5" y="8" width="2" height="2" fill="#8b8df5"/><rect x="29.5" y="8" width="2" height="2" fill="#8b8df5"/><rect x="33.5" y="8" width="2" height="2" fill="#8b8df5"/><rect x="37.5" y="8" width="2" height="2" fill="#8b8df5"/><path d="M13 22l21.500 26M35 22L13.500 48" stroke="#8b8df5" stroke-width="2" fill="none"/><circle cx="10.500" cy="48" r="2.200" fill="#8b8df5"/><circle cx="37.500" cy="48" r="2.200" fill="#8b8df5"/></g><path d="M2257.35 1318.4A31.6 31.6 0 1 1 2285.05 1318.4" fill="none" stroke="#414141" stroke-width="7"/><path d="M2269.99 1258.42A31.6 31.6 0 0 1 2272.41 1258.42" fill="none" stroke="#fdfb35" stroke-width="6.4"/><path d="M2271.2 1269.9L2271.2 1262.4" stroke="#222" stroke-width="2"/><path d="M2212.3 1417.8h22M2226.1 1429.1h8.2M2226.1 1440.4h8.2M2212.3 1451.7h22M2226.1 1463.07h8.2M2226.1 1474.43h8.2M2212.3 1485.8h22M2226.1 1497.2h8.2M2226.1 1508.6h8.2M2212.3 1520h22M2226.1 1531.93h8.2M2226.1 1543.87h8.2M2212.3 1555.8h22M2226.1 1561.3h8.2M2226.1 1566.8h8.2M2226.1 1572.3h8.2M2212.3 1577.8h22M2226.1 1583.44h8.2M2226.1 1589.08h8.2M2226.1 1594.72h8.2M2226.1 1600.36h8.2M2212.3 1606h22M2226.1 1611.45h8.2M2226.1 1616.9h8.2M2226.1 1622.35h8.2M2212.3 1627.8h22M2226.1 1632.58h8.2M2226.1 1637.36h8.2M2226.1 1642.14h8.2M2226.1 1646.92h8.2M2212.3 1651.7h22M2226.1 1657.8h8.2M2212.3 1663.9h22M2226.1 1669.37h8.2M2226.1 1674.85h8.2M2226.1 1680.32h8.2M2212.3 1685.8h22" stroke="#15173a" stroke-width="1.9"/><rect x="2236.3" y="1415.3" width="3.8" height="273" fill="#3a3a42"/><path d="M2287.9 1418h6.500M2287.9 1436.4h6.500M2287.9 1454.2h6.500M2287.9 1472h6.500M2287.9 1490.3h6.500M2287.9 1508h6.500M2287.9 1525.8h6.500M2287.9 1544.2h6.500M2287.9 1562h6.500M2287.9 1586h6.500M2287.9 1606h6.500M2287.9 1626h6.500M2287.9 1646h6.500M2287.9 1665.8h6.500M2287.9 1685.8h6.500" stroke="#1d2044" stroke-width="1.600"/><path d="M2293.2 1417.5v270" stroke="#1d2044" stroke-width="1.700" stroke-dasharray="1.300 2.250"/><rect x="2294.1" y="1415.3" width="19.800" height="273" fill="#49524a"/><rect x="2294.1" y="1415.3" width="19.800" height="19.500" fill="#524b46"/><circle cx="2448" cy="941" r="15.5" fill="#dcdcdc" stroke="#cbcbcb" stroke-width="1.5"/><circle cx="2448" cy="981" r="15.5" fill="#dcdcdc" stroke="#cbcbcb" stroke-width="1.5"/><g transform="translate(2375.8 1188.8) scale(0.91)"><rect x="1" y="1" width="60" height="38" rx="2" fill="none" stroke="#7a97f5" stroke-width="1.600"/><rect x="3.5" y="3.2" width="9" height="8" fill="#7a97f5"/><rect x="14.1" y="3.2" width="9" height="8" fill="#7a97f5"/><rect x="24.7" y="3.2" width="9" height="8" fill="#7a97f5"/><rect x="3.5" y="12.5" width="9" height="8" fill="#7a97f5"/><rect x="14.1" y="12.5" width="9" height="8" fill="#7a97f5"/><rect x="24.7" y="12.5" width="9" height="8" fill="#7a97f5"/><rect x="3.5" y="21.8" width="9" height="8" fill="#7a97f5"/><rect x="14.1" y="21.8" width="9" height="8" fill="#7a97f5"/><rect x="24.7" y="21.8" width="9" height="8" fill="#7a97f5"/><rect x="36.500" y="3.500" width="22" height="13.500" rx="1.500" fill="none" stroke="#7a97f5" stroke-width="2.200"/><circle cx="39.5" cy="24" r="2.200" fill="#7a97f5"/><circle cx="45.5" cy="24" r="2.200" fill="#7a97f5"/><circle cx="51.5" cy="24" r="2.200" fill="#7a97f5"/><circle cx="57.5" cy="24" r="2.200" fill="#7a97f5"/><rect x="3.2" y="31.500" width="4.200" height="6" fill="#7a97f5"/><rect x="8.85" y="31.500" width="4.200" height="6" fill="#7a97f5"/><rect x="14.5" y="31.500" width="4.200" height="6" fill="#7a97f5"/><rect x="20.15" y="31.500" width="4.200" height="6" fill="#7a97f5"/><rect x="25.8" y="31.500" width="4.200" height="6" fill="#7a97f5"/><rect x="31.45" y="31.500" width="4.200" height="6" fill="#7a97f5"/><rect x="37.1" y="31.500" width="4.200" height="6" fill="#7a97f5"/><rect x="42.75" y="31.500" width="4.200" height="6" fill="#7a97f5"/><rect x="48.4" y="31.500" width="4.200" height="6" fill="#7a97f5"/><rect x="54.05" y="31.500" width="4.200" height="6" fill="#7a97f5"/></g><path d="M2391.35 1318.4A31.6 31.6 0 1 1 2419.05 1318.4" fill="none" stroke="#414141" stroke-width="7"/><path d="M2403.99 1258.42A31.6 31.6 0 0 1 2406.41 1258.42" fill="none" stroke="#fdfb35" stroke-width="6.4"/><path d="M2405.2 1269.9L2405.2 1262.4" stroke="#222" stroke-width="2"/><path d="M2346.3 1417.8h22M2360.1 1429.1h8.2M2360.1 1440.4h8.2M2346.3 1451.7h22M2360.1 1463.07h8.2M2360.1 1474.43h8.2M2346.3 1485.8h22M2360.1 1497.2h8.2M2360.1 1508.6h8.2M2346.3 1520h22M2360.1 1531.93h8.2M2360.1 1543.87h8.2M2346.3 1555.8h22M2360.1 1561.3h8.2M2360.1 1566.8h8.2M2360.1 1572.3h8.2M2346.3 1577.8h22M2360.1 1583.44h8.2M2360.1 1589.08h8.2M2360.1 1594.72h8.2M2360.1 1600.36h8.2M2346.3 1606h22M2360.1 1611.45h8.2M2360.1 1616.9h8.2M2360.1 1622.35h8.2M2346.3 1627.8h22M2360.1 1632.58h8.2M2360.1 1637.36h8.2M2360.1 1642.14h8.2M2360.1 1646.92h8.2M2346.3 1651.7h22M2360.1 1657.8h8.2M2346.3 1663.9h22M2360.1 1669.37h8.2M2360.1 1674.85h8.2M2360.1 1680.32h8.2M2346.3 1685.8h22" stroke="#15173a" stroke-width="1.9"/><rect x="2370.3" y="1415.3" width="3.8" height="273" fill="#3a3a42"/><path d="M2421.9 1418h6.500M2421.9 1436.4h6.500M2421.9 1454.2h6.500M2421.9 1472h6.500M2421.9 1490.3h6.500M2421.9 1508h6.500M2421.9 1525.8h6.500M2421.9 1544.2h6.500M2421.9 1562h6.500M2421.9 1586h6.500M2421.9 1606h6.500M2421.9 1626h6.500M2421.9 1646h6.500M2421.9 1665.8h6.500M2421.9 1685.8h6.500" stroke="#1d2044" stroke-width="1.600"/><path d="M2427.2 1417.5v270" stroke="#1d2044" stroke-width="1.700" stroke-dasharray="1.300 2.250"/><rect x="2428.1" y="1415.3" width="19.800" height="273" fill="#49524a"/><rect x="2428.1" y="1415.3" width="19.800" height="19.500" fill="#524b46"/><circle cx="2582" cy="941" r="13.2" fill="#f2fffb"/><path d="M2575.4 952.43A13.2 13.2 0 1 1 2588.6 952.43" fill="none" stroke="#000" stroke-width="5.6"/><path d="M2575.4 952.43A13.2 13.2 0 0 1 2569.76 945.94" fill="none" stroke="#2a2d52" stroke-width="5.6"/><circle cx="2582" cy="981" r="13.2" fill="#f2fffb"/><path d="M2575.4 992.43A13.2 13.2 0 1 1 2588.6 992.43" fill="none" stroke="#000" stroke-width="5.6"/><path d="M2575.4 992.43A13.2 13.2 0 0 1 2568.82 981.69" fill="none" stroke="#2a2d52" stroke-width="5.6"/><g transform="translate(2506.6 1185.9) scale(1)"><ellipse cx="44" cy="37" rx="13" ry="3.500" fill="rgba(0,0,0,.13)"/><ellipse cx="22" cy="36" rx="13" ry="2.500" fill="rgba(0,0,0,.07)"/><path d="M8.500 9.500V27M8.500 27L.6 36M8.500 27L15 35M8.500 20L2 33" stroke="#b9b3a6" stroke-width="1.100" fill="none"/><path d="M21.500 3.500L16.500 20V30M16.500 30L7.500 37M16.500 30L22.800 40.500" stroke="#b9b3a6" stroke-width="1.100" fill="none"/><path d="M50 3L53.200 7V28M53.200 28L48 34M53.200 28L59.500 41M53.200 28L43 40.300M53.200 16L57 36" stroke="#b9b3a6" stroke-width="1.100" fill="none"/><path d="M45.500 17V30L41 38" stroke="#b9b3a6" stroke-width="1" fill="none"/><circle cx="0.6" cy="36" r=".9" fill="#222"/><circle cx="7.5" cy="37" r=".9" fill="#222"/><circle cx="22.8" cy="40.5" r=".9" fill="#222"/><circle cx="59.5" cy="41" r=".9" fill="#222"/><circle cx="43" cy="40.3" r=".9" fill="#222"/><circle cx="15" cy="35" r=".9" fill="#222"/><path d="M16.200 1L29.500 4.800" stroke="#5a4322" stroke-width="1.500"/><path d="M38.500 4.800L54.200 .5" stroke="#5a4322" stroke-width="1.500"/><path d="M17.500 1L28 4" stroke="#c9a45c" stroke-width=".7"/><path d="M40 4L53 .5" stroke="#c9a45c" stroke-width=".7"/><ellipse cx="10" cy="9.300" rx="4.900" ry=".9" fill="#d6b06a"/><ellipse cx="54" cy="9.500" rx="5.400" ry=".8" fill="#d6b06a"/><rect x="16.200" y="13" width="9" height="9.300" rx="1.200" fill="#e9e9ea" stroke="#bdbdbd" stroke-width=".5"/><rect x="22.300" y="9.600" width="10" height="8" rx="1.200" fill="#e9e9ea" stroke="#bdbdbd" stroke-width=".5"/><rect x="35.200" y="10.300" width="8.100" height="7" rx="1.200" fill="#e9e9ea" stroke="#bdbdbd" stroke-width=".5"/><rect x="43.300" y="13.300" width="6.700" height="3.700" rx="1" fill="#e9e9ea" stroke="#bdbdbd" stroke-width=".5"/><path d="M24.500 10v7M27.300 10v7.300M30 10v7M37.500 10.800v6M40.500 10.800v6M18.500 14v8M22 14v8" stroke="#c8c8c8" stroke-width=".7"/><ellipse cx="36.500" cy="27.500" rx="6.300" ry="8.600" fill="#e3e3e3" stroke="#bbb" stroke-width=".5"/><circle cx="31.800" cy="29" r="8.900" fill="#c79a4e"/><circle cx="31.800" cy="28.800" r="8.500" fill="#0d0d0d"/></g><circle cx="2539.2" cy="1290" r="31.6" fill="#fff"/><path d="M2525.35 1318.4A31.6 31.6 0 1 1 2553.05 1318.4" fill="none" stroke="#414141" stroke-width="7"/><path d="M2537.99 1258.42A31.6 31.6 0 0 1 2540.41 1258.42" fill="none" stroke="#fdfb35" stroke-width="6.4"/><path d="M2539.2 1269.9L2539.2 1262.4" stroke="#222" stroke-width="2"/><path d="M2480.3 1417.8h22M2494.1 1429.1h8.2M2494.1 1440.4h8.2M2480.3 1451.7h22M2494.1 1463.07h8.2M2494.1 1474.43h8.2M2480.3 1485.8h22M2494.1 1497.2h8.2M2494.1 1508.6h8.2M2480.3 1520h22M2494.1 1531.93h8.2M2494.1 1543.87h8.2M2480.3 1555.8h22M2494.1 1561.3h8.2M2494.1 1566.8h8.2M2494.1 1572.3h8.2M2480.3 1577.8h22M2494.1 1583.44h8.2M2494.1 1589.08h8.2M2494.1 1594.72h8.2M2494.1 1600.36h8.2M2480.3 1606h22M2494.1 1611.45h8.2M2494.1 1616.9h8.2M2494.1 1622.35h8.2M2480.3 1627.8h22M2494.1 1632.58h8.2M2494.1 1637.36h8.2M2494.1 1642.14h8.2M2494.1 1646.92h8.2M2480.3 1651.7h22M2494.1 1657.8h8.2M2480.3 1663.9h22M2494.1 1669.37h8.2M2494.1 1674.85h8.2M2494.1 1680.32h8.2M2480.3 1685.8h22" stroke="#15173a" stroke-width="1.9"/><rect x="2504.3" y="1415.3" width="3.8" height="273" fill="#3a3a42"/><path d="M2555.9 1418h6.500M2555.9 1436.4h6.500M2555.9 1454.2h6.500M2555.9 1472h6.500M2555.9 1490.3h6.500M2555.9 1508h6.500M2555.9 1525.8h6.500M2555.9 1544.2h6.500M2555.9 1562h6.500M2555.9 1586h6.500M2555.9 1606h6.500M2555.9 1626h6.500M2555.9 1646h6.500M2555.9 1665.8h6.500M2555.9 1685.8h6.500" stroke="#1d2044" stroke-width="1.600"/><path d="M2561.2 1417.5v270" stroke="#1d2044" stroke-width="1.700" stroke-dasharray="1.300 2.250"/><rect x="2562.1" y="1415.3" width="19.800" height="273" fill="#44524a"/><rect x="2562.1" y="1415.3" width="19.800" height="19.500" fill="#46514a"/><circle cx="2716" cy="941" r="13.2" fill="#f2fffb"/><path d="M2709.4 952.43A13.2 13.2 0 1 1 2722.6 952.43" fill="none" stroke="#000" stroke-width="5.6"/><path d="M2709.4 952.43A13.2 13.2 0 0 1 2703.76 945.94" fill="none" stroke="#2a2d52" stroke-width="5.6"/><circle cx="2716" cy="981" r="15.5" fill="#dbd2bd" stroke="#cdc4b0" stroke-width="1.5"/><g transform="translate(2640.7 1185.9) scale(1)"><ellipse cx="44" cy="37" rx="13" ry="3.500" fill="rgba(0,0,0,.13)"/><ellipse cx="22" cy="36" rx="13" ry="2.500" fill="rgba(0,0,0,.07)"/><path d="M8.500 9.500V27M8.500 27L.6 36M8.500 27L15 35M8.500 20L2 33" stroke="#b9b3a6" stroke-width="1.100" fill="none"/><path d="M21.500 3.500L16.500 20V30M16.500 30L7.500 37M16.500 30L22.800 40.500" stroke="#b9b3a6" stroke-width="1.100" fill="none"/><path d="M50 3L53.200 7V28M53.200 28L48 34M53.200 28L59.500 41M53.200 28L43 40.300M53.200 16L57 36" stroke="#b9b3a6" stroke-width="1.100" fill="none"/><path d="M45.500 17V30L41 38" stroke="#b9b3a6" stroke-width="1" fill="none"/><circle cx="0.6" cy="36" r=".9" fill="#222"/><circle cx="7.5" cy="37" r=".9" fill="#222"/><circle cx="22.8" cy="40.5" r=".9" fill="#222"/><circle cx="59.5" cy="41" r=".9" fill="#222"/><circle cx="43" cy="40.3" r=".9" fill="#222"/><circle cx="15" cy="35" r=".9" fill="#222"/><path d="M16.200 1L29.500 4.800" stroke="#5a4322" stroke-width="1.500"/><path d="M38.500 4.800L54.200 .5" stroke="#5a4322" stroke-width="1.500"/><path d="M17.500 1L28 4" stroke="#c9a45c" stroke-width=".7"/><path d="M40 4L53 .5" stroke="#c9a45c" stroke-width=".7"/><ellipse cx="10" cy="9.300" rx="4.900" ry=".9" fill="#d6b06a"/><ellipse cx="54" cy="9.500" rx="5.400" ry=".8" fill="#d6b06a"/><rect x="12.400" y="12" width="12.800" height="10.300" rx="1.200" fill="#cfa873"/><ellipse cx="18.800" cy="12.300" rx="6.400" ry="1.500" fill="#e9e2d4"/><path d="M12.400 20.500h12.800" stroke="#a8824e" stroke-width=".8"/><rect x="34.700" y="10.300" width="10.500" height="6.300" rx="1.200" fill="#cfa873"/><ellipse cx="40" cy="10.600" rx="5.200" ry="1.300" fill="#e9e2d4"/><rect x="42.800" y="13.600" width="7.100" height="4" rx="1" fill="#c9b79a"/><ellipse cx="46.300" cy="13.800" rx="3.500" ry=".9" fill="#e9e2d4"/><ellipse cx="36.500" cy="27" rx="7" ry="8.300" fill="#cfa873"/><circle cx="32.300" cy="28.500" r="9" fill="#9c7a4e"/><circle cx="32.300" cy="28.500" r="8" fill="#cfcfcf"/><circle cx="32.300" cy="28.500" r="8" fill="none" stroke="#999" stroke-width=".6"/></g><circle cx="2673.2" cy="1290" r="31.6" fill="#fff"/><path d="M2659.35 1318.4A31.6 31.6 0 1 1 2687.05 1318.4" fill="none" stroke="#414141" stroke-width="7"/><path d="M2671.99 1258.42A31.6 31.6 0 0 1 2674.41 1258.42" fill="none" stroke="#fdfb35" stroke-width="6.4"/><path d="M2673.2 1269.9L2673.2 1262.4" stroke="#222" stroke-width="2"/><path d="M2614.3 1417.8h22M2628.1 1429.1h8.2M2628.1 1440.4h8.2M2614.3 1451.7h22M2628.1 1463.07h8.2M2628.1 1474.43h8.2M2614.3 1485.8h22M2628.1 1497.2h8.2M2628.1 1508.6h8.2M2614.3 1520h22M2628.1 1531.93h8.2M2628.1 1543.87h8.2M2614.3 1555.8h22M2628.1 1561.3h8.2M2628.1 1566.8h8.2M2628.1 1572.3h8.2M2614.3 1577.8h22M2628.1 1583.44h8.2M2628.1 1589.08h8.2M2628.1 1594.72h8.2M2628.1 1600.36h8.2M2614.3 1606h22M2628.1 1611.45h8.2M2628.1 1616.9h8.2M2628.1 1622.35h8.2M2614.3 1627.8h22M2628.1 1632.58h8.2M2628.1 1637.36h8.2M2628.1 1642.14h8.2M2628.1 1646.92h8.2M2614.3 1651.7h22M2628.1 1657.8h8.2M2614.3 1663.9h22M2628.1 1669.37h8.2M2628.1 1674.85h8.2M2628.1 1680.32h8.2M2614.3 1685.8h22" stroke="#15173a" stroke-width="1.9"/><rect x="2638.3" y="1415.3" width="3.8" height="273" fill="#3a3a42"/><path d="M2689.9 1418h6.500M2689.9 1436.4h6.500M2689.9 1454.2h6.500M2689.9 1472h6.500M2689.9 1490.3h6.500M2689.9 1508h6.500M2689.9 1525.8h6.500M2689.9 1544.2h6.500M2689.9 1562h6.500M2689.9 1586h6.500M2689.9 1606h6.500M2689.9 1626h6.500M2689.9 1646h6.500M2689.9 1665.8h6.500M2689.9 1685.8h6.500" stroke="#1d2044" stroke-width="1.600"/><path d="M2695.2 1417.5v270" stroke="#1d2044" stroke-width="1.700" stroke-dasharray="1.300 2.250"/><rect x="2696.1" y="1415.3" width="19.800" height="273" fill="#485040"/><rect x="2696.1" y="1415.3" width="19.800" height="19.500" fill="#524b40"/><circle cx="2850" cy="941" r="13.2" fill="#f2fffb"/><path d="M2843.4 952.43A13.2 13.2 0 1 1 2856.6 952.43" fill="none" stroke="#000" stroke-width="5.6"/><path d="M2843.4 952.43A13.2 13.2 0 0 1 2839.89 932.52" fill="none" stroke="#2d62b0" stroke-width="5.6"/><circle cx="2850" cy="981" r="15.5" fill="#8fb5e0" stroke="#84a9d4" stroke-width="1.5"/><g transform="translate(2775.7 1188.8) scale(1)"><path d="M0 0h46l14 4.5v10.500H2.500v-3H0z" fill="#0b5fc0"/><rect x="3.300" y="3" width="18.500" height="5.600" fill="#9dcbfa"/><rect x="6" y="4.500" width="2.600" height="2.600" fill="#0b5fc0"/><rect x="10.200" y="4.500" width="2.600" height="2.600" fill="#0b5fc0"/><rect x="13.500" y="7.400" width="44" height="6" fill="#9dcbfa"/><rect x="15.200" y="9" width="40.500" height="2.700" fill="#0b5fc0"/><path d="M19 15l27.500 26.500M41.500 15L14.500 41.500" stroke="#0b5fc0" stroke-width="2.200" fill="none"/><circle cx="14.500" cy="41.800" r="2.300" fill="#0b5fc0"/><circle cx="46.500" cy="41.800" r="2.300" fill="#0b5fc0"/></g><circle cx="2807.2" cy="1290" r="31.6" fill="#bdbdbd"/><path d="M2793.35 1318.4A31.6 31.6 0 1 1 2821.05 1318.4" fill="none" stroke="#414141" stroke-width="7"/><path d="M2807.2 1258.4A31.6 31.6 0 0 0 2805.89 1258.43" fill="none" stroke="#fdfb35" stroke-width="6.4"/><path d="M2806.37 1269.92L2806.06 1262.42" stroke="#222" stroke-width="2"/><path d="M2748.3 1417.8h22M2762.1 1429.1h8.2M2762.1 1440.4h8.2M2748.3 1451.7h22M2762.1 1463.07h8.2M2762.1 1474.43h8.2M2748.3 1485.8h22M2762.1 1497.2h8.2M2762.1 1508.6h8.2M2748.3 1520h22M2762.1 1531.93h8.2M2762.1 1543.87h8.2M2748.3 1555.8h22M2762.1 1561.3h8.2M2762.1 1566.8h8.2M2762.1 1572.3h8.2M2748.3 1577.8h22M2762.1 1583.44h8.2M2762.1 1589.08h8.2M2762.1 1594.72h8.2M2762.1 1600.36h8.2M2748.3 1606h22M2762.1 1611.45h8.2M2762.1 1616.9h8.2M2762.1 1622.35h8.2M2748.3 1627.8h22M2762.1 1632.58h8.2M2762.1 1637.36h8.2M2762.1 1642.14h8.2M2762.1 1646.92h8.2M2748.3 1651.7h22M2762.1 1657.8h8.2M2748.3 1663.9h22M2762.1 1669.37h8.2M2762.1 1674.85h8.2M2762.1 1680.32h8.2M2748.3 1685.8h22" stroke="#15173a" stroke-width="1.9"/><rect x="2772.3" y="1415.3" width="3.8" height="273" fill="#3a3a42"/><path d="M2823.9 1418h6.500M2823.9 1436.4h6.500M2823.9 1454.2h6.500M2823.9 1472h6.500M2823.9 1490.3h6.500M2823.9 1508h6.500M2823.9 1525.8h6.500M2823.9 1544.2h6.500M2823.9 1562h6.500M2823.9 1586h6.500M2823.9 1606h6.500M2823.9 1626h6.500M2823.9 1646h6.500M2823.9 1665.8h6.500M2823.9 1685.8h6.500" stroke="#1d2044" stroke-width="1.600"/><path d="M2829.2 1417.5v270" stroke="#1d2044" stroke-width="1.700" stroke-dasharray="1.300 2.250"/><rect x="2830.1" y="1415.3" width="19.800" height="273" fill="#3b4a51"/><rect x="2830.1" y="1415.3" width="19.800" height="19.500" fill="#46484f"/></svg><div class="cap" style="left:613.1px;top:1486.6px;width:34.4px;height:71px;"><div style="left:-1px;top:31.2px;width:34.4px;height:2.9px;background:#000;"></div></div><div style="left:728px;top:905.5px;width:2px;height:880px;background:#8892b4;"></div><div style="left:779.26px;top:1281.59px;font-size:20.8px;line-height:20.8px;color:#000;letter-spacing:0.3px;white-space:nowrap;">+39</div><div class="cap" style="left:747.1px;top:1486.3px;width:34.4px;height:71px;"><div style="left:-1px;top:31.2px;width:34.4px;height:2.9px;background:#000;"></div></div><div style="left:862px;top:905.5px;width:2px;height:880px;background:#8892b4;"></div><div style="left:915.87px;top:1281.59px;font-size:20.8px;line-height:20.8px;color:#000;letter-spacing:0.3px;white-space:nowrap;">-12</div><div class="cap" style="left:881.1px;top:1478.6px;width:34.4px;height:71px;"><div style="left:-1px;top:31.2px;width:34.4px;height:2.9px;background:#000;"></div></div><div style="left:996px;top:905.5px;width:2px;height:880px;background:#8892b4;"></div><div style="left:1053.19px;top:1281.59px;font-size:20.8px;line-height:20.8px;color:#000;letter-spacing:0.3px;white-space:nowrap;">+2</div><div class="cap" style="left:1015.1px;top:1480.6px;width:34.4px;height:71px;"><div style="left:-1px;top:31.2px;width:34.4px;height:2.9px;background:#000;"></div></div><div style="left:1130px;top:905.5px;width:2px;height:880px;background:#8892b4;"></div><div style="left:1187.19px;top:1281.59px;font-size:20.8px;line-height:20.8px;color:#000;letter-spacing:0.3px;white-space:nowrap;">+9</div><div class="cap" style="left:1149.1px;top:1518.6px;width:34.4px;height:71px;"><div style="left:-1px;top:31.2px;width:34.4px;height:2.9px;background:#000;"></div></div><div style="left:1264px;top:905.5px;width:2px;height:880px;background:#8892b4;"></div><div style="left:1315.26px;top:1281.59px;font-size:20.8px;line-height:20.8px;color:#000;letter-spacing:0.3px;white-space:nowrap;">+21</div><div class="cap" style="left:1283.1px;top:1532.6px;width:34.4px;height:71px;"><div style="left:-1px;top:31.2px;width:34.4px;height:2.9px;background:#000;"></div></div><div style="left:1398px;top:905.5px;width:2px;height:880px;background:#8892b4;"></div><div style="left:1451.87px;top:1281.59px;font-size:20.8px;line-height:20.8px;color:#000;letter-spacing:0.3px;white-space:nowrap;">-42</div><div class="cap" style="left:1417.1px;top:1536.6px;width:34.4px;height:71px;"><div style="left:-1px;top:31.2px;width:34.4px;height:2.9px;background:#000;"></div></div><div style="left:1532px;top:905.5px;width:2px;height:880px;background:#8892b4;"></div><div style="left:1583.26px;top:1281.59px;font-size:20.8px;line-height:20.8px;color:#000;letter-spacing:0.3px;white-space:nowrap;">+43</div><div class="cap" style="left:1551.1px;top:1539.6px;width:34.4px;height:71px;"><div style="left:-1px;top:31.2px;width:34.4px;height:2.9px;background:#000;"></div></div><div style="left:1666px;top:905.5px;width:2px;height:880px;background:#8892b4;"></div><div style="left:1719.87px;top:1281.59px;font-size:20.8px;line-height:20.8px;color:#000;letter-spacing:0.3px;white-space:nowrap;">-64</div><div class="cap" style="left:1685.1px;top:1543.6px;width:34.4px;height:71px;"><div style="left:-1px;top:31.2px;width:34.4px;height:2.9px;background:#000;"></div></div><div style="left:1800px;top:905.5px;width:2px;height:880px;background:#8892b4;"></div><div style="left:1851.26px;top:1281.59px;font-size:20.8px;line-height:20.8px;color:#000;letter-spacing:0.3px;white-space:nowrap;">+63</div><div class="cap" style="left:1819.1px;top:1545.6px;width:34.4px;height:71px;"><div style="left:-1px;top:31.2px;width:34.4px;height:2.9px;background:#000;"></div></div><div style="left:1934px;top:905.5px;width:2px;height:880px;background:#8892b4;"></div><div style="left:1987.87px;top:1281.59px;font-size:20.8px;line-height:20.8px;color:#000;letter-spacing:0.3px;white-space:nowrap;">-64</div><div class="cap" style="left:1953.1px;top:1525.6px;width:34.4px;height:71px;"><div style="left:-1px;top:31.2px;width:34.4px;height:2.9px;background:#000;"></div></div><div style="left:2068px;top:905.5px;width:2px;height:880px;background:#8892b4;"></div><div style="left:2119.26px;top:1281.59px;font-size:20.8px;line-height:20.8px;color:#000;letter-spacing:0.3px;white-space:nowrap;">+63</div><div class="cap" style="left:2087.1px;top:1522.5px;width:34.4px;height:71px;"><div style="left:-1px;top:31.2px;width:34.4px;height:2.9px;background:#000;"></div></div><div style="left:2202px;top:905.5px;width:2px;height:892px;background:#8892b4;"></div><div class="cap" style="left:2221.1px;top:1490.6px;width:34.4px;height:71px;"><div style="left:-1px;top:31.2px;width:34.4px;height:2.9px;background:#000;"></div></div><div style="left:2336px;top:905.5px;width:2px;height:892px;background:#8892b4;"></div><div class="cap" style="left:2355.1px;top:1588.6px;width:34.4px;height:71px;"><div style="left:-1px;top:31.2px;width:34.4px;height:2.9px;background:#000;"></div></div><div style="left:2470px;top:905.5px;width:2px;height:892px;background:#7886a8;"></div><div class="cap" style="left:2489.1px;top:1450.6px;width:34.4px;height:71px;"><div style="left:-1px;top:31.2px;width:34.4px;height:2.9px;background:#000;"></div></div><div style="left:2604px;top:905.5px;width:2px;height:892px;background:#7886a8;"></div><div class="cap" style="left:2623.1px;top:1450.6px;width:34.4px;height:71px;"><div style="left:-1px;top:31.2px;width:34.4px;height:2.9px;background:#000;"></div></div><div style="left:2738px;top:905.5px;width:2px;height:892px;background:#7886a8;"></div><div style="left:2797.8px;top:1281.59px;font-size:20.8px;line-height:20.8px;color:#000;letter-spacing:0.3px;white-space:nowrap;">-1</div><div class="capd" style="left:2757.1px;top:1516.6px;width:34.4px;height:71px;"><div style="left:-1px;top:31.2px;width:34.4px;height:2.9px;background:#fff;"></div></div><div style="left:2872px;top:905.5px;width:2px;height:892px;background:#7886a8;"></div><div style="left:466px;top:905.5px;width:183px;height:888px;background:#fff;"></div><div style="left:648.4px;top:905.5px;width:2px;height:890px;background:#0a0a0a;"></div><div style="left:571.56px;top:931.38px;font-size:22px;line-height:22px;color:#000;letter-spacing:0.26px;white-space:nowrap;">Sends</div><div style="left:564.41px;top:1045.88px;font-size:22px;line-height:22px;color:#000;letter-spacing:0.91px;white-space:nowrap;">Output</div><div style="left:572.37px;top:1091.88px;font-size:22px;line-height:22px;color:#000;letter-spacing:0.37px;white-space:nowrap;">Group</div><div style="left:518.3px;top:1137.88px;font-size:22px;line-height:22px;color:#000;letter-spacing:0.6px;white-space:nowrap;">Automation</div><div style="left:597.08px;top:1277.68px;font-size:22px;line-height:22px;color:#000;letter-spacing:-0.62px;white-space:nowrap;">Pan</div><div style="left:607.95px;top:1345.68px;font-size:22px;line-height:22px;color:#000;letter-spacing:0.15px;white-space:nowrap;">dB</div><div style="left:612.05px;top:1410.33px;font-size:15.2px;line-height:15.2px;color:#4e4e4e;letter-spacing:0.5px;white-space:nowrap;">6</div><div style="left:612.05px;top:1444.23px;font-size:15.2px;line-height:15.2px;color:#4e4e4e;letter-spacing:0.5px;white-space:nowrap;">3</div><div style="left:612.05px;top:1478.33px;font-size:15.2px;line-height:15.2px;color:#4e4e4e;letter-spacing:0.5px;white-space:nowrap;">0</div><div style="left:612.05px;top:1512.53px;font-size:15.2px;line-height:15.2px;color:#4e4e4e;letter-spacing:0.5px;white-space:nowrap;">3</div><div style="left:612.05px;top:1548.33px;font-size:15.2px;line-height:15.2px;color:#4e4e4e;letter-spacing:0.5px;white-space:nowrap;">6</div><div style="left:603.09px;top:1570.33px;font-size:15.2px;line-height:15.2px;color:#4e4e4e;letter-spacing:0.5px;white-space:nowrap;">10</div><div style="left:603.09px;top:1598.53px;font-size:15.2px;line-height:15.2px;color:#4e4e4e;letter-spacing:0.5px;white-space:nowrap;">15</div><div style="left:603.09px;top:1620.33px;font-size:15.2px;line-height:15.2px;color:#4e4e4e;letter-spacing:0.5px;white-space:nowrap;">20</div><div style="left:603.09px;top:1644.23px;font-size:15.2px;line-height:15.2px;color:#4e4e4e;letter-spacing:0.5px;white-space:nowrap;">30</div><div style="left:603.09px;top:1656.43px;font-size:15.2px;line-height:15.2px;color:#4e4e4e;letter-spacing:0.5px;white-space:nowrap;">40</div><div style="left:604.1px;top:1672.33px;font-size:23px;line-height:23px;color:#4e4e4e;letter-spacing:0.5px;white-space:nowrap;">∞</div><svg style="position:absolute;left:600px;top:1410px;" width="50" height="285" viewBox="600 1410 50 285"><path d="M626 1417.8h23M640 1429.1h9M640 1440.4h9M626 1451.7h23M640 1463.07h9M640 1474.43h9M626 1485.8h23M640 1497.2h9M640 1508.6h9M626 1520h23M640 1531.93h9M640 1543.87h9M626 1555.8h23M640 1561.3h9M640 1566.8h9M640 1572.3h9M626 1577.8h23M640 1583.44h9M640 1589.08h9M640 1594.72h9M640 1600.36h9M626 1606h23M640 1611.45h9M640 1616.9h9M640 1622.35h9M626 1627.8h23M640 1632.58h9M640 1637.36h9M640 1642.14h9M640 1646.92h9M626 1651.7h23M640 1657.8h9M626 1663.9h23M640 1669.37h9M640 1674.85h9M640 1680.32h9M626 1685.8h23" stroke="#15173a" stroke-width="1.900"/></svg><svg style="position:absolute;left:2840px;top:1760px;" width="40" height="40" viewBox="2840 1760 40 40"><path d="M2876 1776v4a16 16 0 0 1-16 16h-4v4h20z" fill="#8a8a8a"/></svg><svg style="position:absolute;left:2350px;top:1784px;" width="20" height="12" viewBox="2350 1784 20 12"><path d="M2353 1794l6.500-8 6.500 8z" fill="#666"/></svg></div></div></body></html>
